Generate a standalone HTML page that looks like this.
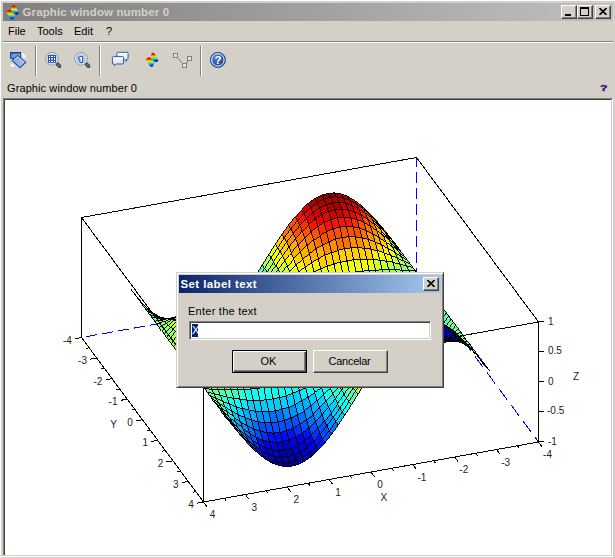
<!DOCTYPE html>
<html><head><meta charset="utf-8"><title>Graphic window number 0</title>
<style>
html,body{margin:0;padding:0}
body{width:615px;height:558px;background:#d4d0c8;position:relative;overflow:hidden;font-family:"Liberation Sans",sans-serif;font-size:11px;color:#000}
.abs{position:absolute}
.frame{position:absolute;left:0;top:0;width:615px;height:558px;box-sizing:border-box;border-left:1px solid #fff;border-top:1px solid #fff}
.frame2{display:none}
.title{position:absolute;left:3px;top:3px;width:610px;height:18px;background:linear-gradient(to right,#808080,#c0c0c0)}
.title .t{position:absolute;left:19.5px;top:2px;letter-spacing:0.13px;font-weight:bold;font-size:11.5px;color:#d4d0c8;white-space:nowrap;line-height:14px}
.wbtn{position:absolute;top:2px;width:16px;height:14px;box-sizing:border-box;background:#d4d0c8;border:1px solid;border-color:#fff #404040 #404040 #fff;box-shadow:inset -1px -1px 0 #808080,inset 1px 1px 0 #d4d0c8}
.menu{position:absolute;top:24px;font-size:11px;line-height:14px;white-space:nowrap}
.sep{position:absolute;left:3px;top:41px;width:610px;height:1px;background:#808080;border-bottom:1px solid #fff}
.vsep{position:absolute;top:46px;width:1px;height:30px;background:#808080;border-right:1px solid #fff}
.info{position:absolute;left:7px;top:81px;letter-spacing:0.1px;font-size:11px;line-height:14px;white-space:nowrap}
.canvas{position:absolute;left:3px;top:98px;width:610px;height:459px;box-sizing:border-box;border:1px solid;border-color:#808080 #fff #fff #808080;background:#fff}
.canvas .in{position:absolute;left:0;top:0;right:0;bottom:0;border:1px solid;border-color:#404040 #d4d0c8 #d4d0c8 #404040}
.plot{position:absolute;left:5px;top:100px}
.dlg{position:absolute;left:176px;top:272px;width:268px;height:116px;box-sizing:border-box;background:#d4d0c8;border:1px solid;border-color:#d4d0c8 #404040 #404040 #d4d0c8;box-shadow:inset 1px 1px 0 #fff,inset -1px -1px 0 #808080}
.dtitle{position:absolute;left:2px;top:2px;width:262px;height:18px;background:linear-gradient(to right,#0a246a,#a6caf0)}
.dtitle .t{position:absolute;left:1.5px;top:2px;letter-spacing:0.4px;font-weight:bold;font-size:11.5px;color:#fff;white-space:nowrap;line-height:14px}
.field{position:absolute;left:12px;top:48px;width:242px;height:19px;box-sizing:border-box;background:#fff;border:1px solid;border-color:#808080 #fff #fff #808080;box-shadow:inset 1px 1px 0 #404040,inset -1px -1px 0 #d4d0c8}
.sel{position:absolute;left:2px;top:2px;width:6px;height:13px;background:#0a246a;color:#fff;font-size:11px;line-height:13px;text-align:center}
.btn{position:absolute;top:77px;width:75px;height:23px;box-sizing:border-box;background:#d4d0c8;border:1px solid;border-color:#fff #404040 #404040 #fff;box-shadow:inset -1px -1px 0 #808080;text-align:center;font-size:11px;line-height:21px}
.btn.def{border:1px solid #000;box-shadow:inset 1px 1px 0 #fff,inset -1px -1px 0 #404040,inset -2px -2px 0 #808080}
</style></head><body>
<div class="frame"></div><div class="frame2"></div>
<div class="title">
<svg class="abs" style="left:2.9px;top:1.9px" width="14" height="16" viewBox="0 0 14 16"><use href="#surficon"/></svg>
<div class="t">Graphic window number 0</div>
<div class="wbtn" style="left:558px"><div class="abs" style="left:3px;top:8px;width:6px;height:2px;background:#000"></div></div>
<div class="wbtn" style="left:574px"><div class="abs" style="left:2px;top:1px;width:9px;height:9px;box-sizing:border-box;border:1px solid #000;border-top-width:2px"></div></div>
<div class="wbtn" style="left:592px"><svg class="abs" style="left:3px;top:2px" width="8" height="7" viewBox="0 0 8 7"><path d="M0.5 0 L7.5 7 M7.5 0 L0.5 7" stroke="#000" stroke-width="1.6"/></svg></div>
</div>
<div class="menu" style="left:8px">File</div>
<div class="menu" style="left:37px">Tools</div>
<div class="menu" style="left:74px">Edit</div>
<div class="menu" style="left:106px">?</div>
<div class="sep"></div>
<div class="vsep" style="left:35px"></div>
<div class="vsep" style="left:99px"></div>
<div class="vsep" style="left:200px"></div>

<svg class="abs" style="left:0;top:44px" width="240" height="34" viewBox="0 44 240 34">
<defs>
<linearGradient id="bl" x1="0" y1="0" x2="1" y2="0.6"><stop offset="0" stop-color="#4a78c4"/><stop offset="1" stop-color="#a4bce6"/></linearGradient>
<linearGradient id="bl2" x1="0" y1="0" x2="1" y2="1"><stop offset="0" stop-color="#7c9cd8"/><stop offset="1" stop-color="#b4c8ec"/></linearGradient>
<radialGradient id="lens" cx="0.5" cy="0.45" r="0.55"><stop offset="0" stop-color="#c4d8f4"/><stop offset="0.8" stop-color="#a4c4ee"/><stop offset="1" stop-color="#dce8f8"/></radialGradient>
<radialGradient id="hb" cx="0.35" cy="0.3" r="0.8"><stop offset="0" stop-color="#5080cc"/><stop offset="1" stop-color="#123a88"/></radialGradient>
<linearGradient id="bub" x1="0" y1="0" x2="0" y2="1"><stop offset="0" stop-color="#ffffff"/><stop offset="1" stop-color="#d0d4dc"/></linearGradient>
<linearGradient id="jetv" x1="0" y1="0" x2="0" y2="1"><stop offset="0" stop-color="#a00000"/><stop offset="0.15" stop-color="#e81000"/><stop offset="0.32" stop-color="#ff9800"/><stop offset="0.45" stop-color="#d8f020"/><stop offset="0.58" stop-color="#40f0a0"/><stop offset="0.72" stop-color="#00a8f0"/><stop offset="0.88" stop-color="#0030e0"/><stop offset="1" stop-color="#0000a0"/></linearGradient>
<g id="surficon"><path d="M0 6.7 L2.2 5.2 Q4 3.9 5.6 5.6 L6.8 7.2 L9 10.4 L7.7 13.4 Q6.2 15.3 4.4 13.6 L3 11.4 Z" fill="url(#jetv)"/><path d="M4.7 4.8 L5.9 1.4 Q7.4 -0.7 9.2 1.2 L10.5 3 L13 7.8 L11.6 8.9 Q10 10 8.4 9 L6.9 7.3 Z" fill="url(#jetv)"/><path d="M8.6 8.7 L10.2 7.4 L13 7.8 L11.4 9.2 Q10 10 8.6 8.7Z" fill="#0818b0"/><rect x="8.3" y="8.4" width="1.3" height="1.2" fill="#e08020"/></g>
</defs>
<!-- rotate icon -->
<rect x="10.6" y="52.7" width="9.9" height="5.6" fill="url(#bl)" stroke="#1048a0" stroke-width="1.1"/>
<rect x="10.1" y="52" width="10.9" height="1.4" fill="#1048a0"/>
<path d="M21.8 54.2 q2.4 -0.2 2.4 2.2 m-1.5 -0.7 l1.5 1.7 l1.4 -1.8" fill="none" stroke="#fff" stroke-width="1.3"/>
<path d="M16.4 67 q-3.6 0.4 -4.2 -2 m-1.5 1.2 l1.5 -2 l1.7 1.4" fill="none" stroke="#fff" stroke-width="1.3"/>
<path d="M13 67.3 h3.5" stroke="#a8bce0" stroke-width="1"/>
<path d="M17.6 55.3 L25.8 62.4 L20 67.7 L12.2 60.6 Z" fill="url(#bl2)" stroke="#1048a0" stroke-width="1.1" stroke-linejoin="round"/>
<path d="M17.6 56.6 L24.3 62.4" fill="none" stroke="#e8f0fc" stroke-width="0.8"/>
<path d="M17.6 56.6 L13.6 60.5" fill="none" stroke="#e8f0fc" stroke-width="0.8"/>
<!-- zoom grid -->
<g id="mag">
<path d="M57.6 64.2 L59.5 66.1" stroke="#3c4044" stroke-width="3.7" stroke-linecap="round"/>
<path d="M58.2 64.8 L59.3 65.9" stroke="#7c8084" stroke-width="1.5" stroke-linecap="round"/>
<circle cx="52" cy="58.75" r="6.3" fill="url(#lens)" stroke="#8c9094" stroke-width="1"/><circle cx="52" cy="58.75" r="5.4" fill="none" stroke="#e8f0fa" stroke-width="0.8"/>
</g>
<rect x="48" y="55" width="8" height="7.8" fill="#2c549c"/>
<g fill="#fff"><rect x="49" y="56" width="1" height="1"/><rect x="51" y="56" width="2" height="1"/><rect x="54" y="56" width="1" height="1"/><rect x="49" y="58" width="1" height="2"/><rect x="51" y="58" width="2" height="2" fill="#a4c4ee"/><rect x="54" y="58" width="1" height="2"/><rect x="49" y="61" width="1" height="1"/><rect x="51" y="61" width="2" height="1"/><rect x="54" y="61" width="1" height="1"/></g>
<!-- zoom 1 -->
<use href="#mag" x="29" y="0"/>
<path d="M78.7 57 L80 56.6 L82.6 56.6 L82.6 62.4 L79.9 62.4 L79.9 59 L78.7 59 Z" fill="#fff" stroke="#204c98" stroke-width="1" stroke-linejoin="round"/>
<!-- bubbles -->
<path d="M117.9 52.3 h9.2 q1 0 1 1 v5.2 q0 1 -1 1 h-0.5 l-0.3 1.8 l-1.8 -1.8 h-6.6 q-1 0 -1 -1 v-5.2 q0 -1 1 -1z" fill="url(#bub)" stroke="#2c5cb0" stroke-width="1"/>
<path d="M113.4 56.6 h9.2 q1 0 1 1 v5.4 q0 1 -1 1 h-6.4 l-1.9 1.7 l-0.3 -1.7 h-0.6 q-1 0 -1 -1 v-5.4 q0 -1 1 -1z" fill="url(#bub)" stroke="#2c5cb0" stroke-width="1"/>
<!-- surface icon -->
<use href="#surficon" x="145.5" y="52.5"/>
<!-- polyline -->
<g fill="#e4e2dc" stroke="#808080" stroke-width="1"><path d="M177.5 57.5 L182.5 63.5 M186.5 63.5 L188 60.5" fill="none"/><rect x="173.5" y="53.5" width="4" height="4"/><rect x="182.5" y="63.5" width="4" height="4"/><rect x="187.5" y="56.5" width="4" height="4"/></g>
<!-- help -->
<circle cx="217.9" cy="59.9" r="7.6" fill="url(#hb)" stroke="#1c4a9c" stroke-width="0.8"/>
<circle cx="217.9" cy="59.9" r="6.2" fill="none" stroke="#fff" stroke-width="1"/>
<text x="217.9" y="64" text-anchor="middle" font-family="Liberation Sans, sans-serif" font-weight="bold" font-size="11.5px" fill="#fff">?</text>
</svg>

<div class="info">Graphic window number 0</div>
<div class="abs" style="left:599.5px;top:81.2px;font-size:9.5px;font-weight:bold;color:#3c1478;-webkit-text-stroke:0.4px #3c1478;line-height:14px;transform:scaleX(1.3);transform-origin:0 0">?</div>
<div class="canvas"><div class="in"></div></div><div class="abs" style="left:0;top:555px;width:5px;height:1px;background:#d4d0c8"></div><div class="abs" style="left:0;top:556px;width:5px;height:1px;background:#fff"></div>
<svg class="plot" width="606" height="455" viewBox="0 0 606 455"><g stroke="#0000ff" stroke-width="1" fill="none" shape-rendering="crispEdges"><line x1="411.5" y1="57.5" x2="411.5" y2="177.5" stroke-dasharray="11 5" stroke-dashoffset="2"/><line x1="411.5" y1="177.5" x2="76.5" y2="237.5" stroke-dasharray="11.18 5.08" stroke-dashoffset="1"/><line x1="411.5" y1="177.5" x2="533.5" y2="342.0" stroke-dasharray="13.7 6.23" stroke-dashoffset="1.25"/></g><g stroke="#000" stroke-width="1" fill="none" shape-rendering="crispEdges"><line x1="76.5" y1="117.5" x2="411.5" y2="57.5" /><line x1="411.5" y1="57.5" x2="533.5" y2="222.0" /><line x1="76.5" y1="117.5" x2="76.5" y2="237.5" /><line x1="533.5" y1="222.0" x2="533.5" y2="342.0" /><line x1="76.5" y1="237.5" x2="198.5" y2="402.0" /><line x1="198.5" y1="402.0" x2="533.5" y2="342.0" /></g><g stroke="#000" stroke-width="0.99" shape-rendering="crispEdges"><path fill="#00008f" d="M197.9 235.0L191.3 236.9L193.7 239.4L200.3 237.5z"/>
<path fill="#00008f" d="M191.3 236.9L184.7 237.4L187.1 239.9L193.7 239.4z"/>
<path fill="#0000af" d="M204.5 231.6L197.9 235.0L200.3 237.5L206.9 234.2z"/>
<path fill="#0000af" d="M184.7 237.4L178.2 236.4L180.6 238.9L187.1 239.9z"/>
<path fill="#0000af" d="M200.3 237.5L193.7 239.4L196.1 240.5L202.7 238.6z"/>
<path fill="#0000af" d="M211.0 226.9L204.5 231.6L206.9 234.2L213.4 229.4z"/>
<path fill="#0000af" d="M193.7 239.4L187.1 239.9L189.5 240.9L196.1 240.5z"/>
<path fill="#0000af" d="M206.9 234.2L200.3 237.5L202.7 238.6L209.3 235.3z"/>
<path fill="#0000af" d="M187.1 239.9L180.6 238.9L182.9 240.0L189.5 240.9z"/>
<path fill="#0000af" d="M178.2 236.4L171.6 233.9L174.0 236.5L180.6 238.9z"/>
<path fill="#0000cf" d="M213.4 229.4L206.9 234.2L209.3 235.3L215.8 230.7z"/>
<path fill="#0000cf" d="M217.6 220.8L211.0 226.9L213.4 229.4L220.0 223.4z"/>
<path fill="#0000af" d="M202.7 238.6L196.1 240.5L198.5 240.1L205.1 238.2z"/>
<path fill="#0000ef" d="M196.1 240.5L189.5 240.9L191.9 240.6L198.5 240.1z"/>
<path fill="#0000cf" d="M209.3 235.3L202.7 238.6L205.1 238.2L211.7 235.1z"/>
<path fill="#0000cf" d="M180.6 238.9L174.0 236.5L176.4 237.8L182.9 240.0z"/>
<path fill="#0000ef" d="M220.0 223.4L213.4 229.4L215.8 230.7L222.4 224.8z"/>
<path fill="#0000ef" d="M189.5 240.9L182.9 240.0L185.3 239.8L191.9 240.6z"/>
<path fill="#0000cf" d="M215.8 230.7L209.3 235.3L211.7 235.1L218.2 230.7z"/>
<path fill="#0000cf" d="M171.6 233.9L165.0 230.2L167.4 232.8L174.0 236.5z"/>
<path fill="#0010ff" d="M224.2 213.5L217.6 220.8L220.0 223.4L226.6 216.2z"/>
<path fill="#0000ef" d="M182.9 240.0L176.4 237.8L178.8 237.8L185.3 239.8z"/>
<path fill="#0000ef" d="M205.1 238.2L198.5 240.1L200.9 238.4L207.5 236.6z"/>
<path fill="#0000ef" d="M174.0 236.5L167.4 232.8L169.8 234.3L176.4 237.8z"/>
<path fill="#0000ef" d="M222.4 224.8L215.8 230.7L218.2 230.7L224.8 225.2z"/>
<path fill="#0000ef" d="M198.5 240.1L191.9 240.6L194.3 239.0L200.9 238.4z"/>
<path fill="#0000ef" d="M211.7 235.1L205.1 238.2L207.5 236.6L214.1 233.7z"/>
<path fill="#0010ff" d="M226.6 216.2L220.0 223.4L222.4 224.8L229.0 217.9z"/>
<path fill="#0000ef" d="M191.9 240.6L185.3 239.8L187.7 238.4L194.3 239.0z"/>
<path fill="#0000ef" d="M218.2 230.7L211.7 235.1L214.1 233.7L220.6 229.6z"/>
<path fill="#0010ff" d="M165.0 230.2L158.4 225.2L160.8 228.0L167.4 232.8z"/>
<path fill="#0000ef" d="M176.4 237.8L169.8 234.3L172.2 234.6L178.8 237.8z"/>
<path fill="#0050ff" d="M230.8 205.1L224.2 213.5L226.6 216.2L233.2 207.9z"/>
<path fill="#0000af" d="M372.6 266.7L366.0 268.6L368.4 274.0L375.0 272.1z"/>
<path fill="#00008f" d="M375.0 272.1L368.4 274.0L370.8 278.0L377.4 276.1z"/>
<path fill="#0030ff" d="M229.0 217.9L222.4 224.8L224.8 225.2L231.4 218.5z"/>
<path fill="#0000ef" d="M185.3 239.8L178.8 237.8L181.2 236.6L187.7 238.4z"/>
<path fill="#0000af" d="M366.0 268.6L359.4 269.0L361.8 274.4L368.4 274.0z"/>
<path fill="#00008f" d="M368.4 274.0L361.8 274.4L364.2 278.4L370.8 278.0z"/>
<path fill="#0010ff" d="M224.8 225.2L218.2 230.7L220.6 229.6L227.2 224.4z"/>
<path fill="#0000af" d="M379.1 263.4L372.6 266.7L375.0 272.1L381.5 268.7z"/>
<path fill="#0000af" d="M381.5 268.7L375.0 272.1L377.4 276.1L383.9 272.7z"/>
<path fill="#0000af" d="M370.2 259.9L363.6 261.7L366.0 268.6L372.6 266.7z"/>
<path fill="#0000ef" d="M167.4 232.8L160.8 228.0L163.2 229.6L169.8 234.3z"/>
<path fill="#00008f" d="M377.4 276.1L370.8 278.0L373.2 280.5L379.8 278.6z"/>
<path fill="#0000af" d="M363.6 261.7L357.0 262.3L359.4 269.0L366.0 268.6z"/>
<path fill="#0000cf" d="M376.7 256.8L370.2 259.9L372.6 266.7L379.1 263.4z"/>
<path fill="#0000ef" d="M207.5 236.6L200.9 238.4L203.3 235.5L209.9 233.8z"/>
<path fill="#00008f" d="M370.8 278.0L364.2 278.4L366.6 280.9L373.2 280.5z"/>
<path fill="#0050ff" d="M233.2 207.9L226.6 216.2L229.0 217.9L235.6 209.9z"/>
<path fill="#0000af" d="M383.9 272.7L377.4 276.1L379.8 278.6L386.3 275.2z"/>
<path fill="#0000af" d="M359.4 269.0L352.8 268.1L355.2 273.5L361.8 274.4z"/>
<path fill="#0000af" d="M361.8 274.4L355.2 273.5L357.6 277.4L364.2 278.4z"/>
<path fill="#0000ef" d="M214.1 233.7L207.5 236.6L209.9 233.8L216.4 231.1z"/>
<path fill="#0000ef" d="M200.9 238.4L194.3 239.0L196.7 236.2L203.3 235.5z"/>
<path fill="#0000cf" d="M385.7 258.8L379.1 263.4L381.5 268.7L388.1 264.0z"/>
<path fill="#0000af" d="M388.1 264.0L381.5 268.7L383.9 272.7L390.5 267.9z"/>
<path fill="#0000cf" d="M357.0 262.3L350.4 261.5L352.8 268.1L359.4 269.0z"/>
<path fill="#0000cf" d="M367.8 251.8L361.2 253.6L363.6 261.7L370.2 259.9z"/>
<path fill="#0000af" d="M364.2 278.4L357.6 277.4L360.0 279.9L366.6 280.9z"/>
<path fill="#0000cf" d="M383.3 252.4L376.7 256.8L379.1 263.4L385.7 258.8z"/>
<path fill="#0000ef" d="M220.6 229.6L214.1 233.7L216.4 231.1L223.0 227.3z"/>
<path fill="#0000ef" d="M194.3 239.0L187.7 238.4L190.1 235.8L196.7 236.2z"/>
<path fill="#0000cf" d="M361.2 253.6L354.6 254.2L357.0 262.3L363.6 261.7z"/>
<path fill="#0000af" d="M379.8 278.6L373.2 280.5L375.6 281.5L382.1 279.6z"/>
<path fill="#0000ef" d="M374.4 248.9L367.8 251.8L370.2 259.9L376.7 256.8z"/>
<path fill="#0000ef" d="M178.8 237.8L172.2 234.6L174.6 233.8L181.2 236.6z"/>
<path fill="#0000af" d="M390.5 267.9L383.9 272.7L386.3 275.2L392.9 270.5z"/>
<path fill="#0050ff" d="M231.4 218.5L224.8 225.2L227.2 224.4L233.8 218.3z"/>
<path fill="#0000af" d="M373.2 280.5L366.6 280.9L369.0 282.0L375.6 281.5z"/>
<path fill="#0000ef" d="M169.8 234.3L163.2 229.6L165.6 230.3L172.2 234.6z"/>
<path fill="#0000af" d="M386.3 275.2L379.8 278.6L382.1 279.6L388.7 276.3z"/>
<path fill="#0050ff" d="M235.6 209.9L229.0 217.9L231.4 218.5L238.0 211.0z"/>
<path fill="#0000cf" d="M352.8 268.1L346.3 265.9L348.6 271.1L355.2 273.5z"/>
<path fill="#0050ff" d="M158.4 225.2L151.8 219.3L154.2 222.1L160.8 228.0z"/>
<path fill="#0000af" d="M355.2 273.5L348.6 271.1L351.0 275.0L357.6 277.4z"/>
<path fill="#0000ef" d="M354.6 254.2L348.0 253.6L350.4 261.5L357.0 262.3z"/>
<path fill="#0000ef" d="M380.9 244.8L374.4 248.9L376.7 256.8L383.3 252.4z"/>
<path fill="#0000ef" d="M392.3 253.0L385.7 258.8L388.1 264.0L394.7 258.0z"/>
<path fill="#0070ff" d="M237.4 195.9L230.8 205.1L233.2 207.9L239.8 198.8z"/>
<path fill="#0000cf" d="M394.7 258.0L388.1 264.0L390.5 267.9L397.1 261.8z"/>
<path fill="#0000cf" d="M350.4 261.5L343.9 259.4L346.3 265.9L352.8 268.1z"/>
<path fill="#0000ef" d="M227.2 224.4L220.6 229.6L223.0 227.3L229.6 222.7z"/>
<path fill="#0000af" d="M366.6 280.9L360.0 279.9L362.4 281.1L369.0 282.0z"/>
<path fill="#0000ef" d="M187.7 238.4L181.2 236.6L183.6 234.4L190.1 235.8z"/>
<path fill="#0000ef" d="M389.9 246.8L383.3 252.4L385.7 258.8L392.3 253.0z"/>
<path fill="#0000af" d="M357.6 277.4L351.0 275.0L353.4 277.5L360.0 279.9z"/>
<path fill="#0000cf" d="M392.9 270.5L386.3 275.2L388.7 276.3L395.3 271.7z"/>
<path fill="#0010ff" d="M365.4 242.5L358.8 244.2L361.2 253.6L367.8 251.8z"/>
<path fill="#0000ef" d="M160.8 228.0L154.2 222.1L156.6 224.0L163.2 229.6z"/>
<path fill="#0010ff" d="M372.0 239.8L365.4 242.5L367.8 251.8L374.4 248.9z"/>
<path fill="#0000cf" d="M397.1 261.8L390.5 267.9L392.9 270.5L399.5 264.4z"/>
<path fill="#0010ff" d="M358.8 244.2L352.2 244.9L354.6 254.2L361.2 253.6z"/>
<path fill="#0000af" d="M382.1 279.6L375.6 281.5L378.0 281.1L384.5 279.3z"/>
<path fill="#008fff" d="M239.8 198.8L233.2 207.9L235.6 209.9L242.1 201.1z"/>
<path fill="#0000ef" d="M348.0 253.6L341.5 251.8L343.9 259.4L350.4 261.5z"/>
<path fill="#0000ef" d="M375.6 281.5L369.0 282.0L371.4 281.6L378.0 281.1z"/>
<path fill="#0010ff" d="M387.5 239.6L380.9 244.8L383.3 252.4L389.9 246.8z"/>
<path fill="#0000cf" d="M388.7 276.3L382.1 279.6L384.5 279.3L391.1 276.1z"/>
<path fill="#0000ef" d="M172.2 234.6L165.6 230.3L168.0 230.1L174.6 233.8z"/>
<path fill="#0070ff" d="M238.0 211.0L231.4 218.5L233.8 218.3L240.4 211.3z"/>
<path fill="#0030ff" d="M378.5 236.1L372.0 239.8L374.4 248.9L380.9 244.8z"/>
<path fill="#0010ff" d="M352.2 244.9L345.6 244.5L348.0 253.6L354.6 254.2z"/>
<path fill="#0000ef" d="M209.9 233.8L203.3 235.5L205.7 231.6L212.3 230.0z"/>
<path fill="#0000cf" d="M360.0 279.9L353.4 277.5L355.8 278.8L362.4 281.1z"/>
<path fill="#0000ef" d="M346.3 265.9L339.7 262.4L342.1 267.4L348.6 271.1z"/>
<path fill="#0070ff" d="M233.8 218.3L227.2 224.4L229.6 222.7L236.2 217.2z"/>
<path fill="#0000ef" d="M216.4 231.1L209.9 233.8L212.3 230.0L218.8 227.5z"/>
<path fill="#0000ef" d="M203.3 235.5L196.7 236.2L199.1 232.3L205.7 231.6z"/>
<path fill="#0000cf" d="M348.6 271.1L342.1 267.4L344.5 271.2L351.0 275.0z"/>
<path fill="#0000ef" d="M181.2 236.6L174.6 233.8L177.0 232.1L183.6 234.4z"/>
<path fill="#0000ef" d="M399.5 264.4L392.9 270.5L395.3 271.7L401.9 265.9z"/>
<path fill="#0010ff" d="M398.9 246.0L392.3 253.0L394.7 258.0L401.3 250.8z"/>
<path fill="#0000ef" d="M343.9 259.4L337.3 256.2L339.7 262.4L346.3 265.9z"/>
<path fill="#0000ef" d="M369.0 282.0L362.4 281.1L364.8 280.9L371.4 281.6z"/>
<path fill="#0000ef" d="M163.2 229.6L156.6 224.0L159.0 225.1L165.6 230.3z"/>
<path fill="#0010ff" d="M401.3 250.8L394.7 258.0L397.1 261.8L403.7 254.5z"/>
<path fill="#0000cf" d="M395.3 271.7L388.7 276.3L391.1 276.1L397.7 271.8z"/>
<path fill="#0000ef" d="M223.0 227.3L216.4 231.1L218.8 227.5L225.4 224.2z"/>
<path fill="#0030ff" d="M396.5 240.2L389.9 246.8L392.3 253.0L398.9 246.0z"/>
<path fill="#008fff" d="M242.1 201.1L235.6 209.9L238.0 211.0L244.5 202.6z"/>
<path fill="#0000ef" d="M196.7 236.2L190.1 235.8L192.5 232.2L199.1 232.3z"/>
<path fill="#0000cf" d="M351.0 275.0L344.5 271.2L346.9 273.9L353.4 277.5z"/>
<path fill="#0050ff" d="M385.1 231.4L378.5 236.1L380.9 244.8L387.5 239.6z"/>
<path fill="#0030ff" d="M345.6 244.5L339.1 243.2L341.5 251.8L348.0 253.6z"/>
<path fill="#0050ff" d="M363.0 232.2L356.4 233.9L358.8 244.2L365.4 242.5z"/>
<path fill="#0050ff" d="M369.6 229.8L363.0 232.2L365.4 242.5L372.0 239.8z"/>
<path fill="#0010ff" d="M403.7 254.5L397.1 261.8L399.5 264.4L406.1 257.2z"/>
<path fill="#0050ff" d="M356.4 233.9L349.8 234.6L352.2 244.9L358.8 244.2z"/>
<path fill="#0010ff" d="M341.5 251.8L334.9 249.0L337.3 256.2L343.9 259.4z"/>
<path fill="#0050ff" d="M394.1 233.5L387.5 239.6L389.9 246.8L396.5 240.2z"/>
<path fill="#0070ff" d="M151.8 219.3L145.3 212.4L147.7 215.3L154.2 222.1z"/>
<path fill="#0000ef" d="M229.6 222.7L223.0 227.3L225.4 224.2L232.0 220.1z"/>
<path fill="#00cfff" d="M243.9 186.0L237.4 195.9L239.8 198.8L246.3 189.0z"/>
<path fill="#0050ff" d="M376.1 226.5L369.6 229.8L372.0 239.8L378.5 236.1z"/>
<path fill="#0000ef" d="M362.4 281.1L355.8 278.8L358.2 278.8L364.8 280.9z"/>
<path fill="#0000ef" d="M190.1 235.8L183.6 234.4L186.0 231.3L192.5 232.2z"/>
<path fill="#0000ef" d="M384.5 279.3L378.0 281.1L380.4 279.4L386.9 277.7z"/>
<path fill="#0050ff" d="M349.8 234.6L343.2 234.5L345.6 244.5L352.2 244.9z"/>
<path fill="#008fff" d="M240.4 211.3L233.8 218.3L236.2 217.2L242.8 211.0z"/>
<path fill="#0000ef" d="M353.4 277.5L346.9 273.9L349.3 275.3L355.8 278.8z"/>
<path fill="#0000ef" d="M401.9 265.9L395.3 271.7L397.7 271.8L404.3 266.2z"/>
<path fill="#0000ef" d="M378.0 281.1L371.4 281.6L373.8 280.0L380.4 279.4z"/>
<path fill="#0000ef" d="M391.1 276.1L384.5 279.3L386.9 277.7L393.5 274.7z"/>
<path fill="#0000ef" d="M174.6 233.8L168.0 230.1L170.4 229.0L177.0 232.1z"/>
<path fill="#00afff" d="M244.5 202.6L238.0 211.0L240.4 211.3L246.9 203.6z"/>
<path fill="#0010ff" d="M406.1 257.2L399.5 264.4L401.9 265.9L408.5 258.9z"/>
<path fill="#0000ef" d="M165.6 230.3L159.0 225.1L161.4 225.5L168.0 230.1z"/>
<path fill="#0000ef" d="M154.2 222.1L147.7 215.3L150.1 217.5L156.6 224.0z"/>
<path fill="#0070ff" d="M391.7 225.9L385.1 231.4L387.5 239.6L394.1 233.5z"/>
<path fill="#0010ff" d="M339.7 262.4L333.1 257.7L335.5 262.5L342.1 267.4z"/>
<path fill="#00cfff" d="M246.3 189.0L239.8 198.8L242.1 201.1L248.7 191.6z"/>
<path fill="#0050ff" d="M339.1 243.2L332.5 240.9L334.9 249.0L341.5 251.8z"/>
<path fill="#0070ff" d="M382.7 222.4L376.1 226.5L378.5 236.1L385.1 231.4z"/>
<path fill="#0010ff" d="M342.1 267.4L335.5 262.5L337.9 266.3L344.5 271.2z"/>
<path fill="#0030ff" d="M337.3 256.2L330.7 252.0L333.1 257.7L339.7 262.4z"/>
<path fill="#0000ef" d="M371.4 281.6L364.8 280.9L367.2 279.4L373.8 280.0z"/>
<path fill="#0000ef" d="M236.2 217.2L229.6 222.7L232.0 220.1L238.6 215.4z"/>
<path fill="#0050ff" d="M405.5 238.0L398.9 246.0L401.3 250.8L407.8 242.5z"/>
<path fill="#0000ef" d="M397.7 271.8L391.1 276.1L393.5 274.7L400.1 270.6z"/>
<path fill="#0050ff" d="M343.2 234.5L336.7 233.5L339.1 243.2L345.6 244.5z"/>
<path fill="#0050ff" d="M403.1 232.6L396.5 240.2L398.9 246.0L405.5 238.0z"/>
<path fill="#0050ff" d="M407.8 242.5L401.3 250.8L403.7 254.5L410.2 246.2z"/>
<path fill="#0000ef" d="M183.6 234.4L177.0 232.1L179.4 229.6L186.0 231.3z"/>
<path fill="#0010ff" d="M344.5 271.2L337.9 266.3L340.3 269.0L346.9 273.9z"/>
<path fill="#0050ff" d="M334.9 249.0L328.3 245.3L330.7 252.0L337.3 256.2z"/>
<path fill="#0070ff" d="M400.7 226.5L394.1 233.5L396.5 240.2L403.1 232.6z"/>
<path fill="#0070ff" d="M360.6 221.1L354.0 222.6L356.4 233.9L363.0 232.2z"/>
<path fill="#008fff" d="M367.2 218.9L360.6 221.1L363.0 232.2L369.6 229.8z"/>
<path fill="#0000ef" d="M355.8 278.8L349.3 275.3L351.7 275.6L358.2 278.8z"/>
<path fill="#00cfff" d="M248.7 191.6L242.1 201.1L244.5 202.6L251.1 193.7z"/>
<path fill="#0000ef" d="M212.3 230.0L205.7 231.6L208.1 226.8L214.7 225.3z"/>
<path fill="#0000ef" d="M156.6 224.0L150.1 217.5L152.5 219.1L159.0 225.1z"/>
<path fill="#0050ff" d="M410.2 246.2L403.7 254.5L406.1 257.2L412.6 249.0z"/>
<path fill="#0070ff" d="M354.0 222.6L347.4 223.4L349.8 234.6L356.4 233.9z"/>
<path fill="#0000ef" d="M218.8 227.5L212.3 230.0L214.7 225.3L221.2 223.1z"/>
<path fill="#0030ff" d="M408.5 258.9L401.9 265.9L404.3 266.2L410.9 259.6z"/>
<path fill="#008fff" d="M389.3 217.6L382.7 222.4L385.1 231.4L391.7 225.9z"/>
<path fill="#0000ef" d="M205.7 231.6L199.1 232.3L201.5 227.6L208.1 226.8z"/>
<path fill="#008fff" d="M373.7 216.1L367.2 218.9L369.6 229.8L376.1 226.5z"/>
<path fill="#0000ef" d="M364.8 280.9L358.2 278.8L360.6 277.7L367.2 279.4z"/>
<path fill="#00afff" d="M246.9 203.6L240.4 211.3L242.8 211.0L249.3 204.1z"/>
<path fill="#0010ff" d="M404.3 266.2L397.7 271.8L400.1 270.6L406.7 265.4z"/>
<path fill="#0000ef" d="M225.4 224.2L218.8 227.5L221.2 223.1L227.8 220.3z"/>
<path fill="#0070ff" d="M336.7 233.5L330.1 231.8L332.5 240.9L339.1 243.2z"/>
<path fill="#008fff" d="M347.4 223.4L340.9 223.6L343.2 234.5L349.8 234.6z"/>
<path fill="#008fff" d="M398.3 219.7L391.7 225.9L394.1 233.5L400.7 226.5z"/>
<path fill="#00afff" d="M242.8 211.0L236.2 217.2L238.6 215.4L245.2 210.0z"/>
<path fill="#0000ef" d="M346.9 273.9L340.3 269.0L342.7 270.7L349.3 275.3z"/>
<path fill="#0000ef" d="M199.1 232.3L192.5 232.2L194.9 227.8L201.5 227.6z"/>
<path fill="#0000ef" d="M168.0 230.1L161.4 225.5L163.8 225.1L170.4 229.0z"/>
<path fill="#0070ff" d="M332.5 240.9L325.9 237.7L328.3 245.3L334.9 249.0z"/>
<path fill="#00afff" d="M380.3 212.7L373.7 216.1L376.1 226.5L382.7 222.4z"/>
<path fill="#0000ef" d="M386.9 277.7L380.4 279.4L382.8 276.5L389.3 274.8z"/>
<path fill="#0050ff" d="M412.6 249.0L406.1 257.2L408.5 258.9L415.0 250.9z"/>
<path fill="#0000ef" d="M232.0 220.1L225.4 224.2L227.8 220.3L234.4 216.9z"/>
<path fill="#0000ef" d="M177.0 232.1L170.4 229.0L172.8 227.1L179.4 229.6z"/>
<path fill="#0000ef" d="M393.5 274.7L386.9 277.7L389.3 274.8L395.9 272.1z"/>
<path fill="#0000ef" d="M380.4 279.4L373.8 280.0L376.2 277.2L382.8 276.5z"/>
<path fill="#00cfff" d="M251.1 193.7L244.5 202.6L246.9 203.6L253.5 195.4z"/>
<path fill="#10ffef" d="M250.5 175.7L243.9 186.0L246.3 189.0L252.9 178.8z"/>
<path fill="#00cfff" d="M145.3 212.4L138.7 204.9L141.1 207.9L147.7 215.3z"/>
<path fill="#008fff" d="M340.9 223.6L334.3 223.2L336.7 233.5L343.2 234.5z"/>
<path fill="#0000ef" d="M159.0 225.1L152.5 219.1L154.9 220.1L161.4 225.5z"/>
<path fill="#0000ef" d="M192.5 232.2L186.0 231.3L188.3 227.3L194.9 227.8z"/>
<path fill="#0050ff" d="M333.1 257.7L326.5 252.1L328.9 256.6L335.5 262.5z"/>
<path fill="#00afff" d="M395.9 212.3L389.3 217.6L391.7 225.9L398.3 219.7z"/>
<path fill="#0050ff" d="M330.7 252.0L324.1 246.8L326.5 252.1L333.1 257.7z"/>
<path fill="#0000ef" d="M400.1 270.6L393.5 274.7L395.9 272.1L402.5 268.4z"/>
<path fill="#008fff" d="M409.6 224.3L403.1 232.6L405.5 238.0L412.0 229.2z"/>
<path fill="#0000ef" d="M373.8 280.0L367.2 279.4L369.6 276.8L376.2 277.2z"/>
<path fill="#0050ff" d="M335.5 262.5L328.9 256.6L331.3 260.3L337.9 266.3z"/>
<path fill="#00afff" d="M386.9 208.7L380.3 212.7L382.7 222.4L389.3 217.6z"/>
<path fill="#008fff" d="M412.0 229.2L405.5 238.0L407.8 242.5L414.4 233.4z"/>
<path fill="#0000ef" d="M358.2 278.8L351.7 275.6L354.0 274.9L360.6 277.7z"/>
<path fill="#0000ef" d="M238.6 215.4L232.0 220.1L234.4 216.9L241.0 212.9z"/>
<path fill="#0050ff" d="M410.9 259.6L404.3 266.2L406.7 265.4L413.2 259.3z"/>
<path fill="#10ffef" d="M252.9 178.8L246.3 189.0L248.7 191.6L255.3 181.7z"/>
<path fill="#00afff" d="M407.2 218.8L400.7 226.5L403.1 232.6L409.6 224.3z"/>
<path fill="#0000ef" d="M349.3 275.3L342.7 270.7L345.1 271.4L351.7 275.6z"/>
<path fill="#0070ff" d="M414.4 233.4L407.8 242.5L410.2 246.2L416.8 237.0z"/>
<path fill="#008fff" d="M330.1 231.8L323.5 229.4L325.9 237.7L332.5 240.9z"/>
<path fill="#0000ef" d="M147.7 215.3L141.1 207.9L143.5 210.5L150.1 217.5z"/>
<path fill="#0070ff" d="M328.3 245.3L321.7 240.6L324.1 246.8L330.7 252.0z"/>
<path fill="#00cfff" d="M249.3 204.1L242.8 211.0L245.2 210.0L251.7 204.1z"/>
<path fill="#0050ff" d="M415.0 250.9L408.5 258.9L410.9 259.6L417.4 252.0z"/>
<path fill="#0050ff" d="M337.9 266.3L331.3 260.3L333.7 263.1L340.3 269.0z"/>
<path fill="#00afff" d="M334.3 223.2L327.7 222.1L330.1 231.8L336.7 233.5z"/>
<path fill="#00cfff" d="M364.8 207.4L358.2 209.3L360.6 221.1L367.2 218.9z"/>
<path fill="#00cfff" d="M358.2 209.3L351.6 210.7L354.0 222.6L360.6 221.1z"/>
<path fill="#00afff" d="M404.8 212.8L398.3 219.7L400.7 226.5L407.2 218.8z"/>
<path fill="#00efff" d="M253.5 195.4L246.9 203.6L249.3 204.1L255.9 196.8z"/>
<path fill="#0000ef" d="M186.0 231.3L179.4 229.6L181.8 226.3L188.3 227.3z"/>
<path fill="#00cfff" d="M371.3 205.1L364.8 207.4L367.2 218.9L373.7 216.1z"/>
<path fill="#00cfff" d="M351.6 210.7L345.0 211.6L347.4 223.4L354.0 222.6z"/>
<path fill="#0070ff" d="M416.8 237.0L410.2 246.2L412.6 249.0L419.2 239.9z"/>
<path fill="#0000ef" d="M406.7 265.4L400.1 270.6L402.5 268.4L409.1 263.7z"/>
<path fill="#0000ef" d="M367.2 279.4L360.6 277.7L363.0 275.5L369.6 276.8z"/>
<path fill="#10ffef" d="M255.3 181.7L248.7 191.6L251.1 193.7L257.7 184.4z"/>
<path fill="#00cfff" d="M393.5 204.3L386.9 208.7L389.3 217.6L395.9 212.3z"/>
<path fill="#008fff" d="M325.9 237.7L319.3 233.8L321.7 240.6L328.3 245.3z"/>
<path fill="#0000ef" d="M170.4 229.0L163.8 225.1L166.2 224.1L172.8 227.1z"/>
<path fill="#00cfff" d="M377.9 202.4L371.3 205.1L373.7 216.1L380.3 212.7z"/>
<path fill="#0000ef" d="M245.2 210.0L238.6 215.4L241.0 212.9L247.5 208.5z"/>
<path fill="#00cfff" d="M345.0 211.6L338.5 212.1L340.9 223.6L347.4 223.4z"/>
<path fill="#0000ef" d="M161.4 225.5L154.9 220.1L157.2 220.6L163.8 225.1z"/>
<path fill="#0000ef" d="M150.1 217.5L143.5 210.5L145.9 212.6L152.5 219.1z"/>
<path fill="#00cfff" d="M402.4 206.4L395.9 212.3L398.3 219.7L404.8 212.8z"/>
<path fill="#0000ef" d="M340.3 269.0L333.7 263.1L336.1 265.0L342.7 270.7z"/>
<path fill="#008fff" d="M419.2 239.9L412.6 249.0L415.0 250.9L421.6 242.1z"/>
<path fill="#00efff" d="M384.5 199.3L377.9 202.4L380.3 212.7L386.9 208.7z"/>
<path fill="#00cfff" d="M338.5 212.1L331.9 212.2L334.3 223.2L340.9 223.6z"/>
<path fill="#00afff" d="M327.7 222.1L321.1 220.5L323.5 229.4L330.1 231.8z"/>
<path fill="#0000ef" d="M221.2 223.1L214.7 225.3L217.1 219.9L223.6 218.0z"/>
<path fill="#0000ef" d="M214.7 225.3L208.1 226.8L210.5 221.3L217.1 219.9z"/>
<path fill="#10ffef" d="M257.7 184.4L251.1 193.7L253.5 195.4L260.1 186.8z"/>
<path fill="#0000ef" d="M179.4 229.6L172.8 227.1L175.2 224.7L181.8 226.3z"/>
<path fill="#afff50" d="M388.6 141.6L382.1 133.4L384.5 136.7L391.0 144.8z"/>
<path fill="#0000ef" d="M351.7 275.6L345.1 271.4L347.5 271.1L354.0 274.9z"/>
<path fill="#0070ff" d="M417.4 252.0L410.9 259.6L413.2 259.3L419.8 252.4z"/>
<path fill="#0000ef" d="M227.8 220.3L221.2 223.1L223.6 218.0L230.2 215.8z"/>
<path fill="#00afff" d="M323.5 229.4L316.9 226.4L319.3 233.8L325.9 237.7z"/>
<path fill="#0000ef" d="M208.1 226.8L201.5 227.6L203.9 222.3L210.5 221.3z"/>
<path fill="#0000ef" d="M389.3 274.8L382.8 276.5L385.1 272.6L391.7 271.0z"/>
<path fill="#10ffef" d="M255.9 196.8L249.3 204.1L251.7 204.1L258.3 197.8z"/>
<path fill="#0070ff" d="M413.2 259.3L406.7 265.4L409.1 263.7L415.6 258.2z"/>
<path fill="#0000ef" d="M395.9 272.1L389.3 274.8L391.7 271.0L398.3 268.5z"/>
<path fill="#00efff" d="M400.1 199.5L393.5 204.3L395.9 212.3L402.4 206.4z"/>
<path fill="#0000ef" d="M382.8 276.5L376.2 277.2L378.6 273.4L385.1 272.6z"/>
<path fill="#0000ef" d="M360.6 277.7L354.0 274.9L356.4 273.2L363.0 275.5z"/>
<path fill="#00efff" d="M251.7 204.1L245.2 210.0L247.5 208.5L254.1 203.7z"/>
<path fill="#0000ef" d="M152.5 219.1L145.9 212.6L148.3 214.3L154.9 220.1z"/>
<path fill="#0000ef" d="M234.4 216.9L227.8 220.3L230.2 215.8L236.8 213.1z"/>
<path fill="#10ffef" d="M391.1 196.0L384.5 199.3L386.9 208.7L393.5 204.3z"/>
<path fill="#0000ef" d="M201.5 227.6L194.9 227.8L197.3 222.8L203.9 222.3z"/>
<path fill="#afff50" d="M391.0 144.8L384.5 136.7L386.9 140.3L393.4 148.0z"/>
<path fill="#00cfff" d="M416.2 215.4L409.6 224.3L412.0 229.2L418.6 219.7z"/>
<path fill="#00cfff" d="M331.9 212.2L325.3 211.8L327.7 222.1L334.3 223.2z"/>
<path fill="#00cfff" d="M413.8 210.6L407.2 218.8L409.6 224.3L416.2 215.4z"/>
<path fill="#008fff" d="M324.1 246.8L317.5 240.8L319.9 245.7L326.5 252.1z"/>
<path fill="#008fff" d="M326.5 252.1L319.9 245.7L322.3 249.9L328.9 256.6z"/>
<path fill="#50ffaf" d="M257.1 165.2L250.5 175.7L252.9 178.8L259.5 168.4z"/>
<path fill="#0000ef" d="M342.7 270.7L336.1 265.0L338.5 266.2L345.1 271.4z"/>
<path fill="#00cfff" d="M418.6 219.7L412.0 229.2L414.4 233.4L421.0 223.6z"/>
<path fill="#0000ef" d="M402.5 268.4L395.9 272.1L398.3 268.5L404.9 265.2z"/>
<path fill="#008fff" d="M421.6 242.1L415.0 250.9L417.4 252.0L424.0 243.7z"/>
<path fill="#00efff" d="M411.4 205.5L404.8 212.8L407.2 218.8L413.8 210.6z"/>
<path fill="#00afff" d="M321.7 240.6L315.2 235.3L317.5 240.8L324.1 246.8z"/>
<path fill="#0000ef" d="M376.2 277.2L369.6 276.8L372.0 273.2L378.6 273.4z"/>
<path fill="#0070ff" d="M328.9 256.6L322.3 249.9L324.7 253.5L331.3 260.3z"/>
<path fill="#30ffcf" d="M260.1 186.8L253.5 195.4L255.9 196.8L262.5 189.1z"/>
<path fill="#afff50" d="M393.4 148.0L386.9 140.3L389.3 144.1L395.8 151.3z"/>
<path fill="#10ffef" d="M138.7 204.9L132.1 196.9L134.5 200.0L141.1 207.9z"/>
<path fill="#0000ef" d="M241.0 212.9L234.4 216.9L236.8 213.1L243.4 210.0z"/>
<path fill="#0000ef" d="M194.9 227.8L188.3 227.3L190.7 222.8L197.3 222.8z"/>
<path fill="#0000ef" d="M163.8 225.1L157.2 220.6L159.6 220.6L166.2 224.1z"/>
<path fill="#00cfff" d="M421.0 223.6L414.4 233.4L416.8 237.0L423.4 227.1z"/>
<path fill="#10ffef" d="M409.0 200.1L402.4 206.4L404.8 212.8L411.4 205.5z"/>
<path fill="#10ffef" d="M362.4 195.5L355.8 197.0L358.2 209.3L364.8 207.4z"/>
<path fill="#10ffef" d="M369.0 193.7L362.4 195.5L364.8 207.4L371.3 205.1z"/>
<path fill="#10ffef" d="M355.8 197.0L349.2 198.3L351.6 210.7L358.2 209.3z"/>
<path fill="#50ffaf" d="M259.5 168.4L252.9 178.8L255.3 181.7L261.9 171.6z"/>
<path fill="#00cfff" d="M321.1 220.5L314.5 218.4L316.9 226.4L323.5 229.4z"/>
<path fill="#10ffef" d="M397.7 192.3L391.1 196.0L393.5 204.3L400.1 199.5z"/>
<path fill="#00afff" d="M319.3 233.8L312.8 229.3L315.2 235.3L321.7 240.6z"/>
<path fill="#10ffef" d="M375.5 191.8L369.0 193.7L371.3 205.1L377.9 202.4z"/>
<path fill="#afff50" d="M395.8 151.3L389.3 144.1L391.6 148.1L398.2 154.5z"/>
<path fill="#0000ef" d="M172.8 227.1L166.2 224.1L168.6 222.6L175.2 224.7z"/>
<path fill="#10ffef" d="M349.2 198.3L342.6 199.3L345.0 211.6L351.6 210.7z"/>
<path fill="#0070ff" d="M331.3 260.3L324.7 253.5L327.1 256.3L333.7 263.1z"/>
<path fill="#0000ef" d="M409.1 263.7L402.5 268.4L404.9 265.2L411.5 261.2z"/>
<path fill="#00efff" d="M325.3 211.8L318.7 211.1L321.1 220.5L327.7 222.1z"/>
<path fill="#30ffcf" d="M382.1 189.6L375.5 191.8L377.9 202.4L384.5 199.3z"/>
<path fill="#00cfff" d="M423.4 227.1L416.8 237.0L419.2 239.9L425.8 230.1z"/>
<path fill="#10ffef" d="M406.6 194.4L400.1 199.5L402.4 206.4L409.0 200.1z"/>
<path fill="#0000ef" d="M141.1 207.9L134.5 200.0L136.9 202.9L143.5 210.5z"/>
<path fill="#0000ef" d="M247.5 208.5L241.0 212.9L243.4 210.0L249.9 206.6z"/>
<path fill="#0000ef" d="M369.6 276.8L363.0 275.5L365.4 272.3L372.0 273.2z"/>
<path fill="#0000ef" d="M154.9 220.1L148.3 214.3L150.7 215.6L157.2 220.6z"/>
<path fill="#10ffef" d="M342.6 199.3L336.1 200.2L338.5 212.1L345.0 211.6z"/>
<path fill="#10ffef" d="M258.3 197.8L251.7 204.1L254.1 203.7L260.7 198.5z"/>
<path fill="#8fff70" d="M398.2 154.5L391.6 148.1L394.0 152.3L400.6 157.7z"/>
<path fill="#0000ef" d="M188.3 227.3L181.8 226.3L184.2 222.5L190.7 222.8z"/>
<path fill="#008fff" d="M419.8 252.4L413.2 259.3L415.6 258.2L422.2 252.0z"/>
<path fill="#50ffaf" d="M261.9 171.6L255.3 181.7L257.7 184.4L264.3 174.8z"/>
<path fill="#30ffcf" d="M388.7 187.3L382.1 189.6L384.5 199.3L391.1 196.0z"/>
<path fill="#00cfff" d="M316.9 226.4L310.4 222.8L312.8 229.3L319.3 233.8z"/>
<path fill="#0000ef" d="M354.0 274.9L347.5 271.1L349.9 270.0L356.4 273.2z"/>
<path fill="#30ffcf" d="M262.5 189.1L255.9 196.8L258.3 197.8L264.9 191.2z"/>
<path fill="#00afff" d="M424.0 243.7L417.4 252.0L419.8 252.4L426.4 244.7z"/>
<path fill="#8fff70" d="M400.6 157.7L394.0 152.3L396.4 156.6L403.0 161.0z"/>
<path fill="#10ffef" d="M336.1 200.2L329.5 200.8L331.9 212.2L338.5 212.1z"/>
<path fill="#30ffcf" d="M404.2 188.4L397.7 192.3L400.1 199.5L406.6 194.4z"/>
<path fill="#0000ef" d="M345.1 271.4L338.5 266.2L340.9 266.5L347.5 271.1z"/>
<path fill="#0000ef" d="M333.7 263.1L327.1 256.3L329.5 258.6L336.1 265.0z"/>
<path fill="#00cfff" d="M425.8 230.1L419.2 239.9L421.6 242.1L428.2 232.6z"/>
<path fill="#50ffaf" d="M395.3 184.9L388.7 187.3L391.1 196.0L397.7 192.3z"/>
<path fill="#0000ef" d="M143.5 210.5L136.9 202.9L139.3 205.6L145.9 212.6z"/>
<path fill="#8fff70" d="M403.0 161.0L396.4 156.6L398.8 161.1L405.4 164.2z"/>
<path fill="#10ffef" d="M254.1 203.7L247.5 208.5L249.9 206.6L256.5 202.9z"/>
<path fill="#50ffaf" d="M264.3 174.8L257.7 184.4L260.1 186.8L266.7 178.1z"/>
<path fill="#0000ef" d="M415.6 258.2L409.1 263.7L411.5 261.2L418.0 256.4z"/>
<path fill="#10ffef" d="M318.7 211.1L312.1 210.1L314.5 218.4L321.1 220.5z"/>
<path fill="#10ffef" d="M329.5 200.8L322.9 201.2L325.3 211.8L331.9 212.2z"/>
<path fill="#0000ef" d="M181.8 226.3L175.2 224.7L177.6 221.8L184.2 222.5z"/>
<path fill="#8fff70" d="M405.4 164.2L398.8 161.1L401.2 165.7L407.8 167.4z"/>
<path fill="#00efff" d="M314.5 218.4L308.0 216.0L310.4 222.8L316.9 226.4z"/>
<path fill="#50ffaf" d="M401.8 182.4L395.3 184.9L397.7 192.3L404.2 188.4z"/>
<path fill="#0000ef" d="M363.0 275.5L356.4 273.2L358.8 270.6L365.4 272.3z"/>
<path fill="#30ffcf" d="M415.6 193.5L409.0 200.1L411.4 205.5L418.0 197.9z"/>
<path fill="#30ffcf" d="M418.0 197.9L411.4 205.5L413.8 210.6L420.4 202.0z"/>
<path fill="#0000ef" d="M166.2 224.1L159.6 220.6L162.0 220.2L168.6 222.6z"/>
<path fill="#50ffaf" d="M413.2 189.0L406.6 194.4L409.0 200.1L415.6 193.5z"/>
<path fill="#10ffef" d="M420.4 202.0L413.8 210.6L416.2 215.4L422.8 206.0z"/>
<path fill="#8fff70" d="M407.8 167.4L401.2 165.7L403.6 170.4L410.2 170.7z"/>
<path fill="#0000ef" d="M157.2 220.6L150.7 215.6L153.1 216.6L159.6 220.6z"/>
<path fill="#50ffaf" d="M410.8 184.4L404.2 188.4L406.6 194.4L413.2 189.0z"/>
<path fill="#50ffaf" d="M264.9 191.2L258.3 197.8L260.7 198.5L267.3 193.2z"/>
<path fill="#70ff8f" d="M266.7 178.1L260.1 186.8L262.5 189.1L269.1 181.3z"/>
<path fill="#10ffef" d="M422.8 206.0L416.2 215.4L418.6 219.7L425.2 209.8z"/>
<path fill="#00cfff" d="M428.2 232.6L421.6 242.1L424.0 243.7L430.6 234.8z"/>
<path fill="#0000ef" d="M145.9 212.6L139.3 205.6L141.7 208.0L148.3 214.3z"/>
<path fill="#0000ef" d="M391.7 271.0L385.1 272.6L387.5 267.8L394.1 266.3z"/>
<path fill="#0000ef" d="M336.1 265.0L329.5 258.6L331.9 260.2L338.5 266.2z"/>
<path fill="#30ffcf" d="M322.9 201.2L316.3 201.4L318.7 211.1L325.3 211.8z"/>
<path fill="#8fff70" d="M410.2 170.7L403.6 170.4L406.0 175.1L412.6 173.9z"/>
<path fill="#70ff8f" d="M408.4 179.8L401.8 182.4L404.2 188.4L410.8 184.4z"/>
<path fill="#0000ef" d="M398.3 268.5L391.7 271.0L394.1 266.3L400.7 264.1z"/>
<path fill="#30ffcf" d="M260.7 198.5L254.1 203.7L256.5 202.9L263.1 199.1z"/>
<path fill="#efff10" d="M382.1 133.4L375.5 125.4L377.9 128.9L384.5 136.7z"/>
<path fill="#0000ef" d="M223.6 218.0L217.1 219.9L219.5 214.1L226.0 212.6z"/>
<path fill="#0000ef" d="M230.2 215.8L223.6 218.0L226.0 212.6L232.6 210.8z"/>
<path fill="#70ff8f" d="M386.3 178.6L379.7 179.8L382.1 189.6L388.7 187.3z"/>
<path fill="#70ff8f" d="M392.9 177.4L386.3 178.6L388.7 187.3L395.3 184.9z"/>
<path fill="#70ff8f" d="M379.7 179.8L373.1 181.0L375.5 191.8L382.1 189.6z"/>
<path fill="#00cfff" d="M317.5 240.8L311.0 234.2L313.4 238.6L319.9 245.7z"/>
<path fill="#0000ef" d="M385.1 272.6L378.6 273.4L381.0 268.7L387.5 267.8z"/>
<path fill="#0000ef" d="M217.1 219.9L210.5 221.3L212.9 215.4L219.5 214.1z"/>
<path fill="#70ff8f" d="M399.4 176.2L392.9 177.4L395.3 184.9L401.8 182.4z"/>
<path fill="#00cfff" d="M315.2 235.3L308.6 229.5L311.0 234.2L317.5 240.8z"/>
<path fill="#50ffaf" d="M373.1 181.0L366.6 182.1L369.0 193.7L375.5 191.8z"/>
<path fill="#10ffef" d="M425.2 209.8L418.6 219.7L421.0 223.6L427.6 213.4z"/>
<path fill="#70ff8f" d="M406.0 175.1L399.4 176.2L401.8 182.4L408.4 179.8z"/>
<path fill="#50ffaf" d="M366.6 182.1L360.0 183.3L362.4 195.5L369.0 193.7z"/>
<path fill="#00afff" d="M426.4 244.7L419.8 252.4L422.2 252.0L428.8 245.1z"/>
<path fill="#0000ef" d="M236.8 213.1L230.2 215.8L232.6 210.8L239.2 208.9z"/>
<path fill="#70ff8f" d="M412.6 173.9L406.0 175.1L408.4 179.8L415.0 177.1z"/>
<path fill="#00cfff" d="M319.9 245.7L313.4 238.6L315.8 242.5L322.3 249.9z"/>
<path fill="#0000ef" d="M210.5 221.3L203.9 222.3L206.3 216.5L212.9 215.4z"/>
<path fill="#0000ef" d="M404.9 265.2L398.3 268.5L400.7 264.1L407.3 261.3z"/>
<path fill="#afff50" d="M263.7 154.6L257.1 165.2L259.5 168.4L266.1 157.9z"/>
<path fill="#00efff" d="M312.8 229.3L306.2 224.4L308.6 229.5L315.2 235.3z"/>
<path fill="#50ffaf" d="M360.0 183.3L353.4 184.5L355.8 197.0L362.4 195.5z"/>
<path fill="#8fff70" d="M403.6 170.4L397.0 170.1L399.4 176.2L406.0 175.1z"/>
<path fill="#10ffef" d="M312.1 210.1L305.6 208.8L308.0 216.0L314.5 218.4z"/>
<path fill="#0000ef" d="M175.2 224.7L168.6 222.6L171.0 220.7L177.6 221.8z"/>
<path fill="#efff10" d="M384.5 136.7L377.9 128.9L380.3 132.8L386.9 140.3z"/>
<path fill="#00afff" d="M422.2 252.0L415.6 258.2L418.0 256.4L424.6 251.0z"/>
<path fill="#0000ef" d="M243.4 210.0L236.8 213.1L239.2 208.9L245.8 206.7z"/>
<path fill="#50ffaf" d="M353.4 184.5L346.8 185.7L349.2 198.3L355.8 197.0z"/>
<path fill="#70ff8f" d="M415.0 177.1L408.4 179.8L410.8 184.4L417.4 180.3z"/>
<path fill="#70ff8f" d="M269.1 181.3L262.5 189.1L264.9 191.2L271.5 184.5z"/>
<path fill="#10ffef" d="M427.6 213.4L421.0 223.6L423.4 227.1L430.0 216.8z"/>
<path fill="#0000ef" d="M378.6 273.4L372.0 273.2L374.4 268.8L381.0 268.7z"/>
<path fill="#0000ef" d="M347.5 271.1L340.9 266.5L343.3 266.1L349.9 270.0z"/>
<path fill="#00cfff" d="M322.3 249.9L315.8 242.5L318.2 245.9L324.7 253.5z"/>
<path fill="#8fff70" d="M401.2 165.7L394.7 164.1L397.0 170.1L403.6 170.4z"/>
<path fill="#0000ef" d="M203.9 222.3L197.3 222.8L199.7 217.3L206.3 216.5z"/>
<path fill="#10ffef" d="M310.4 222.8L303.8 218.9L306.2 224.4L312.8 229.3z"/>
<path fill="#30ffcf" d="M316.3 201.4L309.8 201.5L312.1 210.1L318.7 211.1z"/>
<path fill="#50ffaf" d="M346.8 185.7L340.2 186.8L342.6 199.3L349.2 198.3z"/>
<path fill="#efff10" d="M386.9 140.3L380.3 132.8L382.7 137.1L389.3 144.1z"/>
<path fill="#afff50" d="M398.8 161.1L392.3 158.1L394.7 164.1L401.2 165.7z"/>
<path fill="#70ff8f" d="M417.4 180.3L410.8 184.4L413.2 189.0L419.8 183.6z"/>
<path fill="#afff50" d="M266.1 157.9L259.5 168.4L261.9 171.6L268.5 161.5z"/>
<path fill="#0000ef" d="M249.9 206.6L243.4 210.0L245.8 206.7L252.3 204.4z"/>
<path fill="#8fff70" d="M397.0 170.1L390.5 169.9L392.9 177.4L399.4 176.2z"/>
<path fill="#0000ef" d="M148.3 214.3L141.7 208.0L144.1 210.3L150.7 215.6z"/>
<path fill="#0000ef" d="M411.5 261.2L404.9 265.2L407.3 261.3L413.9 257.9z"/>
<path fill="#0000ef" d="M356.4 273.2L349.9 270.0L352.3 268.2L358.8 270.6z"/>
<path fill="#efff10" d="M389.3 144.1L382.7 137.1L385.1 141.9L391.6 148.1z"/>
<path fill="#50ffaf" d="M340.2 186.8L333.7 188.0L336.1 200.2L342.6 199.3z"/>
<path fill="#afff50" d="M396.4 156.6L389.9 152.4L392.3 158.1L398.8 161.1z"/>
<path fill="#0000af" d="M288.9 354.9L282.3 356.7L284.7 362.2L291.3 360.3z"/>
<path fill="#00cfff" d="M430.6 234.8L424.0 243.7L426.4 244.7L433.0 236.5z"/>
<path fill="#50ffaf" d="M132.1 196.9L125.5 188.7L127.9 191.9L134.5 200.0z"/>
<path fill="#50ffaf" d="M267.3 193.2L260.7 198.5L263.1 199.1L269.7 195.1z"/>
<path fill="#00008f" d="M291.3 360.3L284.7 362.2L287.1 366.1L293.7 364.2z"/>
<path fill="#cfff30" d="M391.6 148.1L385.1 141.9L387.5 147.0L394.0 152.3z"/>
<path fill="#cfff30" d="M394.0 152.3L387.5 147.0L389.9 152.4L396.4 156.6z"/>
<path fill="#0000ef" d="M197.3 222.8L190.7 222.8L193.1 217.9L199.7 217.3z"/>
<path fill="#10ffef" d="M430.0 216.8L423.4 227.1L425.8 230.1L432.4 219.9z"/>
<path fill="#70ff8f" d="M419.8 183.6L413.2 189.0L415.6 193.5L422.2 186.8z"/>
<path fill="#00cfff" d="M324.7 253.5L318.2 245.9L320.6 248.9L327.1 256.3z"/>
<path fill="#10ffef" d="M308.0 216.0L301.4 213.2L303.8 218.9L310.4 222.8z"/>
<path fill="#0000af" d="M282.3 356.7L275.8 357.2L278.2 362.6L284.7 362.2z"/>
<path fill="#00008f" d="M284.7 362.2L278.2 362.6L280.6 366.6L287.1 366.1z"/>
<path fill="#50ffaf" d="M333.7 188.0L327.1 189.2L329.5 200.8L336.1 200.2z"/>
<path fill="#0000ef" d="M338.5 266.2L331.9 260.2L334.3 261.2L340.9 266.5z"/>
<path fill="#0000ef" d="M256.5 202.9L249.9 206.6L252.3 204.4L258.9 202.0z"/>
<path fill="#8fff70" d="M390.5 169.9L383.9 169.9L386.3 178.6L392.9 177.4z"/>
<path fill="#70ff8f" d="M271.5 184.5L264.9 191.2L267.3 193.2L273.9 187.8z"/>
<path fill="#0000af" d="M295.5 351.6L288.9 354.9L291.3 360.3L297.9 356.9z"/>
<path fill="#afff50" d="M268.5 161.5L261.9 171.6L264.3 174.8L270.9 165.3z"/>
<path fill="#0000ef" d="M159.6 220.6L153.1 216.6L155.5 217.4L162.0 220.2z"/>
<path fill="#0000ef" d="M372.0 273.2L365.4 272.3L367.8 268.4L374.4 268.8z"/>
<path fill="#0000af" d="M297.9 356.9L291.3 360.3L293.7 364.2L300.3 360.8z"/>
<path fill="#0000af" d="M286.5 348.1L279.9 349.9L282.3 356.7L288.9 354.9z"/>
<path fill="#70ff8f" d="M422.2 186.8L415.6 193.5L418.0 197.9L424.6 190.0z"/>
<path fill="#50ffaf" d="M309.8 201.5L303.2 201.4L305.6 208.8L312.1 210.1z"/>
<path fill="#50ffaf" d="M327.1 189.2L320.5 190.4L322.9 201.2L329.5 200.8z"/>
<path fill="#afff50" d="M394.7 164.1L388.1 162.5L390.5 169.9L397.0 170.1z"/>
<path fill="#50ffaf" d="M134.5 200.0L127.9 191.9L130.3 195.2L136.9 202.9z"/>
<path fill="#0000ef" d="M190.7 222.8L184.2 222.5L186.6 218.3L193.1 217.9z"/>
<path fill="#0000af" d="M279.9 349.9L273.4 350.4L275.8 357.2L282.3 356.7z"/>
<path fill="#0000ef" d="M168.6 222.6L162.0 220.2L164.4 219.4L171.0 220.7z"/>
<path fill="#8fff70" d="M383.9 169.9L377.3 169.9L379.7 179.8L386.3 178.6z"/>
<path fill="#afff50" d="M270.9 165.3L264.3 174.8L266.7 178.1L273.3 169.3z"/>
<path fill="#0000ef" d="M418.0 256.4L411.5 261.2L413.9 257.9L420.4 253.9z"/>
<path fill="#0000cf" d="M293.1 344.9L286.5 348.1L288.9 354.9L295.5 351.6z"/>
<path fill="#30ffcf" d="M305.6 208.8L299.0 207.3L301.4 213.2L308.0 216.0z"/>
<path fill="#50ffaf" d="M263.1 199.1L256.5 202.9L258.9 202.0L265.5 199.5z"/>
<path fill="#10ffef" d="M432.4 219.9L425.8 230.1L428.2 232.6L434.8 222.8z"/>
<path fill="#70ff8f" d="M424.6 190.0L418.0 197.9L420.4 202.0L427.0 193.3z"/>
<path fill="#0000af" d="M275.8 357.2L269.2 356.3L271.6 361.6L278.2 362.6z"/>
<path fill="#70ff8f" d="M320.5 190.4L313.9 191.6L316.3 201.4L322.9 201.2z"/>
<path fill="#0000ef" d="M327.1 256.3L320.6 248.9L322.9 251.5L329.5 258.6z"/>
<path fill="#0000af" d="M278.2 362.6L271.6 361.6L274.0 365.5L280.6 366.6z"/>
<path fill="#0000ef" d="M150.7 215.6L144.1 210.3L146.5 212.4L153.1 216.6z"/>
<path fill="#00cfff" d="M428.8 245.1L422.2 252.0L424.6 251.0L431.2 245.1z"/>
<path fill="#70ff8f" d="M273.9 187.8L267.3 193.2L269.7 195.1L276.3 191.0z"/>
<path fill="#8fff70" d="M377.3 169.9L370.7 170.1L373.1 181.0L379.7 179.8z"/>
<path fill="#0000cf" d="M302.1 347.0L295.5 351.6L297.9 356.9L304.5 352.2z"/>
<path fill="#8fff70" d="M273.3 169.3L266.7 178.1L269.1 181.3L275.6 173.5z"/>
<path fill="#0000af" d="M304.5 352.2L297.9 356.9L300.3 360.8L306.9 356.1z"/>
<path fill="#50ffaf" d="M136.9 202.9L130.3 195.2L132.7 198.4L139.3 205.6z"/>
<path fill="#cfff30" d="M392.3 158.1L385.7 155.4L388.1 162.5L394.7 164.1z"/>
<path fill="#50ffaf" d="M427.0 193.3L420.4 202.0L422.8 206.0L429.4 196.5z"/>
<path fill="#70ff8f" d="M313.9 191.6L307.4 192.7L309.8 201.5L316.3 201.4z"/>
<path fill="#0000ef" d="M184.2 222.5L177.6 221.8L180.0 218.5L186.6 218.3z"/>
<path fill="#00efff" d="M433.0 236.5L426.4 244.7L428.8 245.1L435.4 237.8z"/>
<path fill="#70ff8f" d="M269.7 195.1L263.1 199.1L265.5 199.5L272.1 196.9z"/>
<path fill="#0000ef" d="M365.4 272.3L358.8 270.6L361.2 267.3L367.8 268.4z"/>
<path fill="#0000cf" d="M273.4 350.4L266.8 349.6L269.2 356.3L275.8 357.2z"/>
<path fill="#50ffaf" d="M303.2 201.4L296.6 201.2L299.0 207.3L305.6 208.8z"/>
<path fill="#0000cf" d="M284.1 340.0L277.6 341.8L279.9 349.9L286.5 348.1z"/>
<path fill="#afff50" d="M370.7 170.1L364.2 170.5L366.6 182.1L373.1 181.0z"/>
<path fill="#afff50" d="M388.1 162.5L381.5 161.2L383.9 169.9L390.5 169.9z"/>
<path fill="#8fff70" d="M275.6 173.5L269.1 181.3L271.5 184.5L278.0 177.8z"/>
<path fill="#0000cf" d="M299.7 340.5L293.1 344.9L295.5 351.6L302.1 347.0z"/>
<path fill="#10ffef" d="M434.8 222.8L428.2 232.6L430.6 234.8L437.2 225.4z"/>
<path fill="#0000cf" d="M277.6 341.8L271.0 342.3L273.4 350.4L279.9 349.9z"/>
<path fill="#0000ef" d="M349.9 270.0L343.3 266.1L345.7 265.1L352.3 268.2z"/>
<path fill="#0000ef" d="M290.7 337.0L284.1 340.0L286.5 348.1L293.1 344.9z"/>
<path fill="#50ffaf" d="M429.4 196.5L422.8 206.0L425.2 209.8L431.8 199.7z"/>
<path fill="#70ff8f" d="M307.4 192.7L300.8 193.9L303.2 201.4L309.8 201.5z"/>
<path fill="#afff50" d="M364.2 170.5L357.6 171.2L360.0 183.3L366.6 182.1z"/>
<path fill="#0000ef" d="M424.6 251.0L418.0 256.4L420.4 253.9L427.0 249.5z"/>
<path fill="#efff10" d="M389.9 152.4L383.3 148.5L385.7 155.4L392.3 158.1z"/>
<path fill="#0000ef" d="M340.9 266.5L334.3 261.2L336.7 261.6L343.3 266.1z"/>
<path fill="#8fff70" d="M278.0 177.8L271.5 184.5L273.9 187.8L280.4 182.3z"/>
<path fill="#0000ef" d="M329.5 258.6L322.9 251.5L325.3 253.6L331.9 260.2z"/>
<path fill="#70ff8f" d="M276.3 191.0L269.7 195.1L272.1 196.9L278.6 194.2z"/>
<path fill="#50ffaf" d="M139.3 205.6L132.7 198.4L135.1 201.6L141.7 208.0z"/>
<path fill="#30ffcf" d="M303.8 218.9L297.2 214.7L299.6 219.1L306.2 224.4z"/>
<path fill="#30ffcf" d="M306.2 224.4L299.6 219.1L302.0 223.2L308.6 229.5z"/>
<path fill="#0000ef" d="M162.0 220.2L155.5 217.4L157.9 217.9L164.4 219.4z"/>
<path fill="#50ffaf" d="M301.4 213.2L294.8 210.2L297.2 214.7L303.8 218.9z"/>
<path fill="#afff50" d="M357.6 171.2L351.0 172.0L353.4 184.5L360.0 183.3z"/>
<path fill="#10ffef" d="M308.6 229.5L302.0 223.2L304.4 227.2L311.0 234.2z"/>
<path fill="#0000ef" d="M177.6 221.8L171.0 220.7L173.4 218.6L180.0 218.5z"/>
<path fill="#0000cf" d="M269.2 356.3L262.6 354.0L265.0 359.2L271.6 361.6z"/>
<path fill="#70ff8f" d="M300.8 193.9L294.2 195.1L296.6 201.2L303.2 201.4z"/>
<path fill="#50ffaf" d="M431.8 199.7L425.2 209.8L427.6 213.4L434.2 203.0z"/>
<path fill="#8fff70" d="M280.4 182.3L273.9 187.8L276.3 191.0L282.8 186.9z"/>
<path fill="#0000af" d="M271.6 361.6L265.0 359.2L267.4 363.1L274.0 365.5z"/>
<path fill="#50ffaf" d="M299.0 207.3L292.4 205.6L294.8 210.2L301.4 213.2z"/>
<path fill="#50ffaf" d="M153.1 216.6L146.5 212.4L148.9 214.4L155.5 217.4z"/>
<path fill="#10ffef" d="M311.0 234.2L304.4 227.2L306.8 231.0L313.4 238.6z"/>
<path fill="#0000ef" d="M271.0 342.3L264.4 341.7L266.8 349.6L273.4 350.4z"/>
<path fill="#afff50" d="M351.0 172.0L344.4 173.1L346.8 185.7L353.4 184.5z"/>
<path fill="#cfff30" d="M381.5 161.2L374.9 160.2L377.3 169.9L383.9 169.9z"/>
<path fill="#efff10" d="M387.5 147.0L380.9 142.0L383.3 148.5L389.9 152.4z"/>
<path fill="#0000ef" d="M297.3 332.9L290.7 337.0L293.1 344.9L299.7 340.5z"/>
<path fill="#70ff8f" d="M296.6 201.2L290.0 201.0L292.4 205.6L299.0 207.3z"/>
<path fill="#ffcf00" d="M375.5 125.4L368.9 117.9L371.3 121.4L377.9 128.9z"/>
<path fill="#0000ef" d="M308.7 341.1L302.1 347.0L304.5 352.2L311.0 346.1z"/>
<path fill="#efff10" d="M270.2 144.3L263.7 154.6L266.1 157.9L272.6 147.7z"/>
<path fill="#0000ef" d="M400.7 264.1L394.1 266.3L396.5 260.9L403.1 259.1z"/>
<path fill="#0000ef" d="M394.1 266.3L387.5 267.8L389.9 262.3L396.5 260.9z"/>
<path fill="#8fff70" d="M282.8 186.9L276.3 191.0L278.6 194.2L285.2 191.6z"/>
<path fill="#0000cf" d="M311.0 346.1L304.5 352.2L306.9 356.1L313.4 350.0z"/>
<path fill="#afff50" d="M344.4 173.1L337.8 174.3L340.2 186.8L346.8 185.7z"/>
<path fill="#10ffef" d="M437.2 225.4L430.6 234.8L433.0 236.5L439.6 227.9z"/>
<path fill="#0000cf" d="M266.8 349.6L260.2 347.6L262.6 354.0L269.2 356.3z"/>
<path fill="#0000ef" d="M252.3 204.4L245.8 206.7L248.2 203.3L254.7 202.2z"/>
<path fill="#0000ef" d="M358.8 270.6L352.3 268.2L354.7 265.7L361.2 267.3z"/>
<path fill="#0000ef" d="M258.9 202.0L252.3 204.4L254.7 202.2L261.3 201.0z"/>
<path fill="#0000ef" d="M245.8 206.7L239.2 208.9L241.6 204.5L248.2 203.3z"/>
<path fill="#10ffef" d="M313.4 238.6L306.8 231.0L309.2 234.6L315.8 242.5z"/>
<path fill="#efff10" d="M385.7 155.4L379.1 152.9L381.5 161.2L388.1 162.5z"/>
<path fill="#70ff8f" d="M294.2 195.1L287.6 196.3L290.0 201.0L296.6 201.2z"/>
<path fill="#70ff8f" d="M265.5 199.5L258.9 202.0L261.3 201.0L267.9 199.8z"/>
<path fill="#0000ef" d="M239.2 208.9L232.6 210.8L235.0 205.7L241.6 204.5z"/>
<path fill="#70ff8f" d="M141.7 208.0L135.1 201.6L137.5 204.9L144.1 210.3z"/>
<path fill="#0000ef" d="M407.3 261.3L400.7 264.1L403.1 259.1L409.7 256.8z"/>
<path fill="#0000ef" d="M387.5 267.8L381.0 268.7L383.4 263.3L389.9 262.3z"/>
<path fill="#70ff8f" d="M272.1 196.9L265.5 199.5L267.9 199.8L274.5 198.6z"/>
<path fill="#afff50" d="M337.8 174.3L331.3 175.9L333.7 188.0L340.2 186.8z"/>
<path fill="#ffef00" d="M385.1 141.9L378.5 136.0L380.9 142.0L387.5 147.0z"/>
<path fill="#50ffaf" d="M434.2 203.0L427.6 213.4L430.0 216.8L436.6 206.2z"/>
<path fill="#0000ef" d="M232.6 210.8L226.0 212.6L228.4 206.9L235.0 205.7z"/>
<path fill="#70ff8f" d="M278.6 194.2L272.1 196.9L274.5 198.6L281.0 197.5z"/>
<path fill="#0000ef" d="M306.3 335.0L299.7 340.5L302.1 347.0L308.7 341.1z"/>
<path fill="#ffcf00" d="M377.9 128.9L371.3 121.4L373.7 125.7L380.3 132.8z"/>
<path fill="#10ffef" d="M435.4 237.8L428.8 245.1L431.2 245.1L437.8 238.8z"/>
<path fill="#8fff70" d="M285.2 191.6L278.6 194.2L281.0 197.5L287.6 196.3z"/>
<path fill="#afff50" d="M331.3 175.9L324.7 177.6L327.1 189.2L333.7 188.0z"/>
<path fill="#0000ef" d="M226.0 212.6L219.5 214.1L221.8 208.1L228.4 206.9z"/>
<path fill="#8fff70" d="M291.8 189.0L285.2 191.6L287.6 196.3L294.2 195.1z"/>
<path fill="#0010ff" d="M281.7 330.7L275.2 332.4L277.6 341.8L284.1 340.0z"/>
<path fill="#efff10" d="M272.6 147.7L266.1 157.9L268.5 161.5L275.0 151.6z"/>
<path fill="#afff50" d="M324.7 177.6L318.1 179.6L320.5 190.4L327.1 189.2z"/>
<path fill="#ffcf00" d="M382.7 137.1L376.1 130.5L378.5 136.0L385.1 141.9z"/>
<path fill="#8fff70" d="M298.4 186.4L291.8 189.0L294.2 195.1L300.8 193.9z"/>
<path fill="#0000ef" d="M171.0 220.7L164.4 219.4L166.8 218.5L173.4 218.6z"/>
<path fill="#ffcf00" d="M380.3 132.8L373.7 125.7L376.1 130.5L382.7 137.1z"/>
<path fill="#8fff70" d="M318.1 179.6L311.5 181.7L313.9 191.6L320.5 190.4z"/>
<path fill="#8fff70" d="M305.0 184.0L298.4 186.4L300.8 193.9L307.4 192.7z"/>
<path fill="#8fff70" d="M311.5 181.7L305.0 184.0L307.4 192.7L313.9 191.6z"/>
<path fill="#0000ef" d="M219.5 214.1L212.9 215.4L215.3 209.2L221.8 208.1z"/>
<path fill="#00efff" d="M431.2 245.1L424.6 251.0L427.0 249.5L433.6 244.7z"/>
<path fill="#10ffef" d="M315.8 242.5L309.2 234.6L311.6 238.0L318.2 245.9z"/>
<path fill="#0000ef" d="M331.9 260.2L325.3 253.6L327.7 255.3L334.3 261.2z"/>
<path fill="#0000ef" d="M413.9 257.9L407.3 261.3L409.7 256.8L416.3 254.1z"/>
<path fill="#0000ef" d="M381.0 268.7L374.4 268.8L376.8 263.8L383.4 263.3z"/>
<path fill="#0010ff" d="M288.3 328.0L281.7 330.7L284.1 340.0L290.7 337.0z"/>
<path fill="#8fff70" d="M289.4 182.9L282.8 186.9L285.2 191.6L291.8 189.0z"/>
<path fill="#0010ff" d="M275.2 332.4L268.6 333.1L271.0 342.3L277.6 341.8z"/>
<path fill="#70ff8f" d="M287.6 196.3L281.0 197.5L283.4 200.7L290.0 201.0z"/>
<path fill="#cfff30" d="M374.9 160.2L368.3 159.5L370.7 170.1L377.3 169.9z"/>
<path fill="#efff10" d="M275.0 151.6L268.5 161.5L270.9 165.3L277.4 156.0z"/>
<path fill="#0000ef" d="M212.9 215.4L206.3 216.5L208.7 210.4L215.3 209.2z"/>
<path fill="#50ffaf" d="M436.6 206.2L430.0 216.8L432.4 219.9L438.9 209.4z"/>
<path fill="#afff50" d="M287.0 177.0L280.4 182.3L282.8 186.9L289.4 182.9z"/>
<path fill="#70ff8f" d="M290.0 201.0L283.4 200.7L285.8 203.9L292.4 205.6z"/>
<path fill="#70ff8f" d="M144.1 210.3L137.5 204.9L139.9 208.1L146.5 212.4z"/>
<path fill="#efff10" d="M277.4 156.0L270.9 165.3L273.3 169.3L279.8 160.7z"/>
<path fill="#0000ef" d="M264.4 341.7L257.8 340.0L260.2 347.6L266.8 349.6z"/>
<path fill="#afff50" d="M284.6 171.3L278.0 177.8L280.4 182.3L287.0 177.0z"/>
<path fill="#0000ef" d="M206.3 216.5L199.7 217.3L202.1 211.6L208.7 210.4z"/>
<path fill="#50ffaf" d="M155.5 217.4L148.9 214.4L151.3 216.3L157.9 217.9z"/>
<path fill="#cfff30" d="M279.8 160.7L273.3 169.3L275.6 173.5L282.2 165.8z"/>
<path fill="#cfff30" d="M282.2 165.8L275.6 173.5L278.0 177.8L284.6 171.3z"/>
<path fill="#0010ff" d="M303.9 327.8L297.3 332.9L299.7 340.5L306.3 335.0z"/>
<path fill="#8fff70" d="M281.0 197.5L274.5 198.6L276.9 200.4L283.4 200.7z"/>
<path fill="#30ffcf" d="M439.6 227.9L433.0 236.5L435.4 237.8L442.0 230.2z"/>
<path fill="#10ffef" d="M318.2 245.9L311.6 238.0L314.0 241.1L320.6 248.9z"/>
<path fill="#0000ef" d="M420.4 253.9L413.9 257.9L416.3 254.1L422.8 251.0z"/>
<path fill="#afff50" d="M296.0 179.0L289.4 182.9L291.8 189.0L298.4 186.4z"/>
<path fill="#ffef00" d="M383.3 148.5L376.7 145.0L379.1 152.9L385.7 155.4z"/>
<path fill="#0030ff" d="M294.9 324.2L288.3 328.0L290.7 337.0L297.3 332.9z"/>
<path fill="#0000ef" d="M374.4 268.8L367.8 268.4L370.2 263.9L376.8 263.8z"/>
<path fill="#0000ef" d="M343.3 266.1L336.7 261.6L339.1 261.6L345.7 265.1z"/>
<path fill="#0010ff" d="M268.6 333.1L262.0 332.7L264.4 341.7L271.0 342.3z"/>
<path fill="#70ff8f" d="M292.4 205.6L285.8 203.9L288.2 207.1L294.8 210.2z"/>
<path fill="#0000ef" d="M199.7 217.3L193.1 217.9L195.5 212.8L202.1 211.6z"/>
<path fill="#efff10" d="M368.3 159.5L361.8 159.2L364.2 170.5L370.7 170.1z"/>
<path fill="#0000ef" d="M164.4 219.4L157.9 217.9L160.3 218.3L166.8 218.5z"/>
<path fill="#0000ef" d="M262.6 354.0L256.0 350.5L258.4 355.6L265.0 359.2z"/>
<path fill="#efff10" d="M379.1 152.9L372.5 150.8L374.9 160.2L381.5 161.2z"/>
<path fill="#50ffaf" d="M438.9 209.4L432.4 219.9L434.8 222.8L441.3 212.6z"/>
<path fill="#0000cf" d="M265.0 359.2L258.4 355.6L260.8 359.4L267.4 363.1z"/>
<path fill="#70ff8f" d="M294.8 210.2L288.2 207.1L290.6 210.4L297.2 214.7z"/>
<path fill="#8fff70" d="M274.5 198.6L267.9 199.8L270.3 200.1L276.9 200.4z"/>
<path fill="#0000ef" d="M352.3 268.2L345.7 265.1L348.1 263.7L354.7 265.7z"/>
<path fill="#0000ef" d="M193.1 217.9L186.6 218.3L189.0 213.9L195.5 212.8z"/>
<path fill="#afff50" d="M302.6 175.4L296.0 179.0L298.4 186.4L305.0 184.0z"/>
<path fill="#0010ff" d="M315.2 334.1L308.7 341.1L311.0 346.1L317.6 338.9z"/>
<path fill="#70ff8f" d="M146.5 212.4L139.9 208.1L142.3 211.3L148.9 214.4z"/>
<path fill="#0000ef" d="M260.2 347.6L253.6 344.4L256.0 350.5L262.6 354.0z"/>
<path fill="#0000ef" d="M320.6 248.9L314.0 241.1L316.4 244.0L322.9 251.5z"/>
<path fill="#cfff30" d="M293.6 171.9L287.0 177.0L289.4 182.9L296.0 179.0z"/>
<path fill="#0010ff" d="M317.6 338.9L311.0 346.1L313.4 350.0L320.0 342.7z"/>
<path fill="#0000ef" d="M427.0 249.5L420.4 253.9L422.8 251.0L429.4 247.6z"/>
<path fill="#efff10" d="M361.8 159.2L355.2 159.2L357.6 171.2L364.2 170.5z"/>
<path fill="#70ff8f" d="M297.2 214.7L290.6 210.4L293.0 213.6L299.6 219.1z"/>
<path fill="#0000ef" d="M334.3 261.2L327.7 255.3L330.1 256.7L336.7 261.6z"/>
<path fill="#8fff70" d="M283.4 200.7L276.9 200.4L279.3 202.2L285.8 203.9z"/>
<path fill="#0030ff" d="M312.8 328.4L306.3 335.0L308.7 341.1L315.2 334.1z"/>
<path fill="#10ffef" d="M437.8 238.8L431.2 245.1L433.6 244.7L440.2 239.6z"/>
<path fill="#0000ef" d="M186.6 218.3L180.0 218.5L182.4 215.1L189.0 213.9z"/>
<path fill="#0000ef" d="M367.8 268.4L361.2 267.3L363.6 263.5L370.2 263.9z"/>
<path fill="#0000ef" d="M267.9 199.8L261.3 201.0L263.7 200.0L270.3 200.1z"/>
<path fill="#ffcf00" d="M380.9 142.0L374.3 137.5L376.7 145.0L383.3 148.5z"/>
<path fill="#50ffaf" d="M441.3 212.6L434.8 222.8L437.2 225.4L443.7 215.9z"/>
<path fill="#cfff30" d="M309.1 172.0L302.6 175.4L305.0 184.0L311.5 181.7z"/>
<path fill="#0050ff" d="M301.5 319.6L294.9 324.2L297.3 332.9L303.9 327.8z"/>
<path fill="#0030ff" d="M262.0 332.7L255.4 331.3L257.8 340.0L264.4 341.7z"/>
<path fill="#30ffcf" d="M442.0 230.2L435.4 237.8L437.8 238.8L444.3 232.3z"/>
<path fill="#0050ff" d="M279.3 320.4L272.8 322.0L275.2 332.4L281.7 330.7z"/>
<path fill="#70ff8f" d="M299.6 219.1L293.0 213.6L295.4 216.8L302.0 223.2z"/>
<path fill="#efff10" d="M355.2 159.2L348.6 159.7L351.0 172.0L357.6 171.2z"/>
<path fill="#70ff8f" d="M157.9 217.9L151.3 216.3L153.7 218.1L160.3 218.3z"/>
<path fill="#0000ef" d="M180.0 218.5L173.4 218.6L175.8 216.3L182.4 215.1z"/>
<path fill="#0050ff" d="M285.9 317.9L279.3 320.4L281.7 330.7L288.3 328.0z"/>
<path fill="#efff10" d="M291.2 165.0L284.6 171.3L287.0 177.0L293.6 171.9z"/>
<path fill="#0050ff" d="M272.8 322.0L266.2 322.8L268.6 333.1L275.2 332.4z"/>
<path fill="#0010ff" d="M257.8 340.0L251.2 337.2L253.6 344.4L260.2 347.6z"/>
<path fill="#cfff30" d="M315.7 168.9L309.1 172.0L311.5 181.7L318.1 179.6z"/>
<path fill="#0000ef" d="M261.3 201.0L254.7 202.2L257.1 199.9L263.7 200.0z"/>
<path fill="#70ff8f" d="M148.9 214.4L142.3 211.3L144.7 214.6L151.3 216.3z"/>
<path fill="#ffef00" d="M372.5 150.8L365.9 149.2L368.3 159.5L374.9 160.2z"/>
<path fill="#0050ff" d="M310.4 321.6L303.9 327.8L306.3 335.0L312.8 328.4z"/>
<path fill="#0000ef" d="M322.9 251.5L316.4 244.0L318.8 246.6L325.3 253.6z"/>
<path fill="#efff10" d="M348.6 159.7L342.0 160.7L344.4 173.1L351.0 172.0z"/>
<path fill="#50ffaf" d="M302.0 223.2L295.4 216.8L297.8 220.1L304.4 227.2z"/>
<path fill="#10ffef" d="M433.6 244.7L427.0 249.5L429.4 247.6L436.0 244.0z"/>
<path fill="#efff10" d="M322.3 166.2L315.7 168.9L318.1 179.6L324.7 177.6z"/>
<path fill="#50ffaf" d="M443.7 215.9L437.2 225.4L439.6 227.9L446.1 219.1z"/>
<path fill="#ffaf00" d="M378.5 136.0L371.9 130.7L374.3 137.5L380.9 142.0z"/>
<path fill="#8fff70" d="M285.8 203.9L279.3 202.2L281.7 204.1L288.2 207.1z"/>
<path fill="#0000ef" d="M173.4 218.6L166.8 218.5L169.2 217.5L175.8 216.3z"/>
<path fill="#efff10" d="M300.2 167.0L293.6 171.9L296.0 179.0L302.6 175.4z"/>
<path fill="#ffcf00" d="M376.7 145.0L370.1 141.9L372.5 150.8L379.1 152.9z"/>
<path fill="#efff10" d="M342.0 160.7L335.5 162.1L337.8 174.3L344.4 173.1z"/>
<path fill="#0050ff" d="M292.5 314.6L285.9 317.9L288.3 328.0L294.9 324.2z"/>
<path fill="#efff10" d="M328.9 163.9L322.3 166.2L324.7 177.6L331.3 175.9z"/>
<path fill="#0000ef" d="M254.7 202.2L248.2 203.3L250.6 199.9L257.1 199.9z"/>
<path fill="#8fff70" d="M276.9 200.4L270.3 200.1L272.7 200.5L279.3 202.2z"/>
<path fill="#efff10" d="M335.5 162.1L328.9 163.9L331.3 175.9L337.8 174.3z"/>
<path fill="#efff10" d="M288.8 158.5L282.2 165.8L284.6 171.3L291.2 165.0z"/>
<path fill="#0000ef" d="M361.2 267.3L354.7 265.7L357.1 262.8L363.6 263.5z"/>
<path fill="#0050ff" d="M266.2 322.8L259.6 322.6L262.0 332.7L268.6 333.1z"/>
<path fill="#ffcf00" d="M276.8 134.4L270.2 144.3L272.6 147.7L279.2 137.9z"/>
<path fill="#50ffaf" d="M304.4 227.2L297.8 220.1L300.2 223.3L306.8 231.0z"/>
<path fill="#ff7000" d="M368.9 117.9L362.3 111.0L364.7 114.7L371.3 121.4z"/>
<path fill="#0000ef" d="M345.7 265.1L339.1 261.6L341.5 261.2L348.1 263.7z"/>
<path fill="#0000ef" d="M166.8 218.5L160.3 218.3L162.6 218.7L169.2 217.5z"/>
<path fill="#ffaf00" d="M376.1 130.5L369.5 124.6L371.9 130.7L378.5 136.0z"/>
<path fill="#0000ef" d="M248.2 203.3L241.6 204.5L244.0 200.2L250.6 199.9z"/>
<path fill="#ffef00" d="M286.4 152.5L279.8 160.7L282.2 165.8L288.8 158.5z"/>
<path fill="#70ff8f" d="M151.3 216.3L144.7 214.6L147.1 217.8L153.7 218.1z"/>
<path fill="#ffcf00" d="M279.2 137.9L272.6 147.7L275.0 151.6L281.6 142.2z"/>
<path fill="#0000ef" d="M336.7 261.6L330.1 256.7L332.5 257.7L339.1 261.6z"/>
<path fill="#50ffaf" d="M444.3 232.3L437.8 238.8L440.2 239.6L446.7 234.2z"/>
<path fill="#ff8f00" d="M371.3 121.4L364.7 114.7L367.1 119.2L373.7 125.7z"/>
<path fill="#70ff8f" d="M446.1 219.1L439.6 227.9L442.0 230.2L448.5 222.3z"/>
<path fill="#ff8f00" d="M373.7 125.7L367.1 119.2L369.5 124.6L376.1 130.5z"/>
<path fill="#ffcf00" d="M284.0 147.0L277.4 156.0L279.8 160.7L286.4 152.5z"/>
<path fill="#0070ff" d="M308.0 314.1L301.5 319.6L303.9 327.8L310.4 321.6z"/>
<path fill="#ffcf00" d="M365.9 149.2L359.4 148.2L361.8 159.2L368.3 159.5z"/>
<path fill="#0010ff" d="M256.0 350.5L249.5 345.9L251.8 350.7L258.4 355.6z"/>
<path fill="#ffcf00" d="M281.6 142.2L275.0 151.6L277.4 156.0L284.0 147.0z"/>
<path fill="#8fff70" d="M288.2 207.1L281.7 204.1L284.0 206.0L290.6 210.4z"/>
<path fill="#0000ef" d="M325.3 253.6L318.8 246.6L321.2 249.1L327.7 255.3z"/>
<path fill="#50ffaf" d="M306.8 231.0L300.2 223.3L302.6 226.5L309.2 234.6z"/>
<path fill="#0050ff" d="M255.4 331.3L248.8 329.0L251.2 337.2L257.8 340.0z"/>
<path fill="#0000ef" d="M241.6 204.5L235.0 205.7L237.4 200.6L244.0 200.2z"/>
<path fill="#efff10" d="M306.7 162.6L300.2 167.0L302.6 175.4L309.1 172.0z"/>
<path fill="#0070ff" d="M299.1 310.6L292.5 314.6L294.9 324.2L301.5 319.6z"/>
<path fill="#30ffcf" d="M440.2 239.6L433.6 244.7L436.0 244.0L442.6 240.1z"/>
<path fill="#70ff8f" d="M160.3 218.3L153.7 218.1L156.1 219.8L162.6 218.7z"/>
<path fill="#0010ff" d="M258.4 355.6L251.8 350.7L254.2 354.4L260.8 359.4z"/>
<path fill="#0000ef" d="M403.1 259.1L396.5 260.9L398.9 255.1L405.5 253.6z"/>
<path fill="#0000ef" d="M409.7 256.8L403.1 259.1L405.5 253.6L412.1 251.9z"/>
<path fill="#0030ff" d="M253.6 344.4L247.1 340.1L249.5 345.9L256.0 350.5z"/>
<path fill="#0000ef" d="M396.5 260.9L389.9 262.3L392.3 256.4L398.9 255.1z"/>
<path fill="#ffef00" d="M297.8 159.1L291.2 165.0L293.6 171.9L300.2 167.0z"/>
<path fill="#0050ff" d="M321.8 326.1L315.2 334.1L317.6 338.9L324.2 330.7z"/>
<path fill="#0000ef" d="M270.3 200.1L263.7 200.0L266.1 199.0L272.7 200.5z"/>
<path fill="#0050ff" d="M259.6 322.6L253.0 321.7L255.4 331.3L262.0 332.7z"/>
<path fill="#0000ef" d="M416.3 254.1L409.7 256.8L412.1 251.9L418.6 249.9z"/>
<path fill="#0050ff" d="M319.4 320.8L312.8 328.4L315.2 334.1L321.8 326.1z"/>
<path fill="#0000ef" d="M235.0 205.7L228.4 206.9L230.8 201.2L237.4 200.6z"/>
<path fill="#0000ef" d="M389.9 262.3L383.4 263.3L385.8 257.5L392.3 256.4z"/>
<path fill="#ffaf00" d="M374.3 137.5L367.7 133.6L370.1 141.9L376.7 145.0z"/>
<path fill="#0050ff" d="M324.2 330.7L317.6 338.9L320.0 342.7L326.6 334.3z"/>
<path fill="#0000ef" d="M354.7 265.7L348.1 263.7L350.5 261.8L357.1 262.8z"/>
<path fill="#50ffaf" d="M309.2 234.6L302.6 226.5L305.0 229.8L311.6 238.0z"/>
<path fill="#70ff8f" d="M153.7 218.1L147.1 217.8L149.5 221.0L156.1 219.8z"/>
<path fill="#0000ef" d="M422.8 251.0L416.3 254.1L418.6 249.9L425.2 247.8z"/>
<path fill="#70ff8f" d="M448.5 222.3L442.0 230.2L444.3 232.3L450.9 225.6z"/>
<path fill="#afff50" d="M279.3 202.2L272.7 200.5L275.1 201.1L281.7 204.1z"/>
<path fill="#0000ef" d="M228.4 206.9L221.8 208.1L224.2 202.0L230.8 201.2z"/>
<path fill="#ffaf00" d="M370.1 141.9L363.6 139.5L365.9 149.2L372.5 150.8z"/>
<path fill="#ffcf00" d="M359.4 148.2L352.8 147.7L355.2 159.2L361.8 159.2z"/>
<path fill="#8fff70" d="M290.6 210.4L284.0 206.0L286.4 208.1L293.0 213.6z"/>
<path fill="#0000ef" d="M383.4 263.3L376.8 263.8L379.2 258.3L385.8 257.5z"/>
<path fill="#ffef00" d="M313.3 158.7L306.7 162.6L309.1 172.0L315.7 168.9z"/>
<path fill="#0050ff" d="M251.2 337.2L244.7 333.4L247.1 340.1L253.6 344.4z"/>
<path fill="#0070ff" d="M317.0 314.7L310.4 321.6L312.8 328.4L319.4 320.8z"/>
<path fill="#0070ff" d="M276.9 309.2L270.4 310.8L272.8 322.0L279.3 320.4z"/>
<path fill="#0000ef" d="M221.8 208.1L215.3 209.2L217.7 203.1L224.2 202.0z"/>
<path fill="#008fff" d="M283.5 307.1L276.9 309.2L279.3 320.4L285.9 317.9z"/>
<path fill="#0000ef" d="M429.4 247.6L422.8 251.0L425.2 247.8L431.8 245.5z"/>
<path fill="#0000ef" d="M327.7 255.3L321.2 249.1L323.6 251.4L330.1 256.7z"/>
<path fill="#0070ff" d="M270.4 310.8L263.8 311.6L266.2 322.8L272.8 322.0z"/>
<path fill="#50ffaf" d="M311.6 238.0L305.0 229.8L307.4 233.0L314.0 241.1z"/>
<path fill="#ffcf00" d="M295.4 151.7L288.8 158.5L291.2 165.0L297.8 159.1z"/>
<path fill="#0000ef" d="M215.3 209.2L208.7 210.4L211.1 204.4L217.7 203.1z"/>
<path fill="#50ffaf" d="M446.7 234.2L440.2 239.6L442.6 240.1L449.1 236.1z"/>
<path fill="#008fff" d="M305.6 305.8L299.1 310.6L301.5 319.6L308.0 314.1z"/>
<path fill="#0000ef" d="M376.8 263.8L370.2 263.9L372.6 258.9L379.2 258.3z"/>
<path fill="#0000ef" d="M263.7 200.0L257.1 199.9L259.5 197.7L266.1 199.0z"/>
<path fill="#008fff" d="M290.1 304.3L283.5 307.1L285.9 317.9L292.5 314.6z"/>
<path fill="#0000ef" d="M208.7 210.4L202.1 211.6L204.5 205.9L211.1 204.4z"/>
<path fill="#ffcf00" d="M352.8 147.7L346.2 147.9L348.6 159.7L355.2 159.2z"/>
<path fill="#ffcf00" d="M319.9 155.2L313.3 158.7L315.7 168.9L322.3 166.2z"/>
<path fill="#0000ef" d="M436.0 244.0L429.4 247.6L431.8 245.5L438.4 243.1z"/>
<path fill="#8fff70" d="M156.1 219.8L149.5 221.0L151.9 224.2L158.5 221.6z"/>
<path fill="#0000ef" d="M202.1 211.6L195.5 212.8L197.9 207.6L204.5 205.9z"/>
<path fill="#70ff8f" d="M450.9 225.6L444.3 232.3L446.7 234.2L453.3 228.8z"/>
<path fill="#0000ef" d="M339.1 261.6L332.5 257.7L334.9 258.4L341.5 261.2z"/>
<path fill="#8fff70" d="M162.6 218.7L156.1 219.8L158.5 221.6L165.0 219.0z"/>
<path fill="#ff8f00" d="M371.9 130.7L365.3 126.1L367.7 133.6L374.3 137.5z"/>
<path fill="#ffcf00" d="M304.4 153.7L297.8 159.1L300.2 167.0L306.7 162.6z"/>
<path fill="#8fff70" d="M293.0 213.6L286.4 208.1L288.8 210.4L295.4 216.8z"/>
<path fill="#0000ef" d="M195.5 212.8L189.0 213.9L191.4 209.6L197.9 207.6z"/>
<path fill="#8fff70" d="M169.2 217.5L162.6 218.7L165.0 219.0L171.6 216.4z"/>
<path fill="#0070ff" d="M253.0 321.7L246.4 320.0L248.8 329.0L255.4 331.3z"/>
<path fill="#0000ef" d="M189.0 213.9L182.4 215.1L184.8 211.7L191.4 209.6z"/>
<path fill="#008fff" d="M263.8 311.6L257.2 311.8L259.6 322.6L266.2 322.8z"/>
<path fill="#0000ef" d="M175.8 216.3L169.2 217.5L171.6 216.4L178.2 214.0z"/>
<path fill="#008fff" d="M314.6 307.8L308.0 314.1L310.4 321.6L317.0 314.7z"/>
<path fill="#0000ef" d="M182.4 215.1L175.8 216.3L178.2 214.0L184.8 211.7z"/>
<path fill="#50ffaf" d="M314.0 241.1L307.4 233.0L309.8 236.2L316.4 244.0z"/>
<path fill="#ffcf00" d="M346.2 147.9L339.6 148.7L342.0 160.7L348.6 159.7z"/>
<path fill="#ffcf00" d="M326.5 152.4L319.9 155.2L322.3 166.2L328.9 163.9z"/>
<path fill="#0070ff" d="M248.8 329.0L242.3 325.9L244.7 333.4L251.2 337.2z"/>
<path fill="#0000ef" d="M370.2 263.9L363.6 263.5L366.0 259.3L372.6 258.9z"/>
<path fill="#0000ef" d="M348.1 263.7L341.5 261.2L343.9 260.5L350.5 261.8z"/>
<path fill="#ffaf00" d="M293.0 144.8L286.4 152.5L288.8 158.5L295.4 151.7z"/>
<path fill="#00afff" d="M296.7 300.8L290.1 304.3L292.5 314.6L299.1 310.6z"/>
<path fill="#50ffaf" d="M442.6 240.1L436.0 244.0L438.4 243.1L445.0 240.5z"/>
<path fill="#afff50" d="M281.7 204.1L275.1 201.1L277.5 201.8L284.0 206.0z"/>
<path fill="#ffcf00" d="M339.6 148.7L333.1 150.3L335.5 162.1L342.0 160.7z"/>
<path fill="#ffcf00" d="M333.1 150.3L326.5 152.4L328.9 163.9L335.5 162.1z"/>
<path fill="#ffaf00" d="M363.6 139.5L357.0 137.8L359.4 148.2L365.9 149.2z"/>
<path fill="#0000ef" d="M257.1 199.9L250.6 199.9L252.9 196.7L259.5 197.7z"/>
<path fill="#0000ef" d="M272.7 200.5L266.1 199.0L268.5 198.3L275.1 201.1z"/>
<path fill="#0000ef" d="M330.1 256.7L323.6 251.4L326.0 253.5L332.5 257.7z"/>
<path fill="#ff7000" d="M369.5 124.6L362.9 119.4L365.3 126.1L371.9 130.7z"/>
<path fill="#70ff8f" d="M453.3 228.8L446.7 234.2L449.1 236.1L455.7 232.0z"/>
<path fill="#afff50" d="M295.4 216.8L288.8 210.4L291.2 212.9L297.8 220.1z"/>
<path fill="#8fff70" d="M158.5 221.6L151.9 224.2L154.3 227.5L160.9 223.4z"/>
<path fill="#ff8f00" d="M367.7 133.6L361.2 130.5L363.6 139.5L370.1 141.9z"/>
<path fill="#ff7000" d="M283.4 125.2L276.8 134.4L279.2 137.9L285.8 128.8z"/>
<path fill="#008fff" d="M257.2 311.8L250.6 311.3L253.0 321.7L259.6 322.6z"/>
<path fill="#ffaf00" d="M290.6 138.7L284.0 147.0L286.4 152.5L293.0 144.8z"/>
<path fill="#50ffaf" d="M316.4 244.0L309.8 236.2L312.2 239.4L318.8 246.6z"/>
<path fill="#0000ef" d="M363.6 263.5L357.1 262.8L359.4 259.6L366.0 259.3z"/>
<path fill="#70ff8f" d="M449.1 236.1L442.6 240.1L445.0 240.5L451.5 237.9z"/>
<path fill="#0050ff" d="M249.5 345.9L242.9 340.3L245.3 344.8L251.8 350.7z"/>
<path fill="#ff8f00" d="M285.8 128.8L279.2 137.9L281.6 142.2L288.2 133.4z"/>
<path fill="#ffaf00" d="M310.9 148.9L304.4 153.7L306.7 162.6L313.3 158.7z"/>
<path fill="#ff5000" d="M362.3 111.0L355.8 105.1L358.2 108.8L364.7 114.7z"/>
<path fill="#ff8f00" d="M288.2 133.4L281.6 142.2L284.0 147.0L290.6 138.7z"/>
<path fill="#00afff" d="M312.2 300.4L305.6 305.8L308.0 314.1L314.6 307.8z"/>
<path fill="#0050ff" d="M247.1 340.1L240.5 334.9L242.9 340.3L249.5 345.9z"/>
<path fill="#ff5000" d="M367.1 119.2L360.5 113.6L362.9 119.4L369.5 124.6z"/>
<path fill="#ffaf00" d="M302.0 145.4L295.4 151.7L297.8 159.1L304.4 153.7z"/>
<path fill="#008fff" d="M326.0 312.5L319.4 320.8L321.8 326.1L328.4 317.3z"/>
<path fill="#0050ff" d="M251.8 350.7L245.3 344.8L247.7 348.5L254.2 354.4z"/>
<path fill="#00afff" d="M303.3 296.9L296.7 300.8L299.1 310.6L305.6 305.8z"/>
<path fill="#008fff" d="M328.4 317.3L321.8 326.1L324.2 330.7L330.8 321.6z"/>
<path fill="#ff5000" d="M364.7 114.7L358.2 108.8L360.5 113.6L367.1 119.2z"/>
<path fill="#8fff70" d="M165.0 219.0L158.5 221.6L160.9 223.4L167.4 219.4z"/>
<path fill="#0000ef" d="M250.6 199.9L244.0 200.2L246.4 196.0L252.9 196.7z"/>
<path fill="#afff50" d="M297.8 220.1L291.2 212.9L293.6 215.5L300.2 223.3z"/>
<path fill="#00afff" d="M323.6 307.0L317.0 314.7L319.4 320.8L326.0 312.5z"/>
<path fill="#ff8f00" d="M357.0 137.8L350.4 136.9L352.8 147.7L359.4 148.2z"/>
<path fill="#0070ff" d="M330.8 321.6L324.2 330.7L326.6 334.3L333.2 325.1z"/>
<path fill="#008fff" d="M246.4 320.0L239.9 317.6L242.3 325.9L248.8 329.0z"/>
<path fill="#70ff8f" d="M455.7 232.0L449.1 236.1L451.5 237.9L458.1 235.3z"/>
<path fill="#50ffaf" d="M318.8 246.6L312.2 239.4L314.6 242.7L321.2 249.1z"/>
<path fill="#8fff70" d="M160.9 223.4L154.3 227.5L156.7 230.7L163.3 225.3z"/>
<path fill="#0070ff" d="M244.7 333.4L238.1 328.8L240.5 334.9L247.1 340.1z"/>
<path fill="#0000ef" d="M284.0 206.0L277.5 201.8L279.9 202.8L286.4 208.1z"/>
<path fill="#0000ef" d="M341.5 261.2L334.9 258.4L337.3 259.0L343.9 260.5z"/>
<path fill="#0000ef" d="M357.1 262.8L350.5 261.8L352.9 259.6L359.4 259.6z"/>
<path fill="#00afff" d="M250.6 311.3L244.1 310.3L246.4 320.0L253.0 321.7z"/>
<path fill="#00cfff" d="M281.1 295.6L274.5 297.4L276.9 309.2L283.5 307.1z"/>
<path fill="#00cfff" d="M274.5 297.4L268.0 298.8L270.4 310.8L276.9 309.2z"/>
<path fill="#50ffaf" d="M332.5 257.7L326.0 253.5L328.3 255.4L334.9 258.4z"/>
<path fill="#afff50" d="M171.6 216.4L165.0 219.0L167.4 219.4L174.0 215.5z"/>
<path fill="#ffaf00" d="M317.5 144.9L310.9 148.9L313.3 158.7L319.9 155.2z"/>
<path fill="#00afff" d="M321.2 301.0L314.6 307.8L317.0 314.7L323.6 307.0z"/>
<path fill="#0000ef" d="M266.1 199.0L259.5 197.7L261.9 195.8L268.5 198.3z"/>
<path fill="#0000ef" d="M244.0 200.2L237.4 200.6L239.8 195.6L246.4 196.0z"/>
<path fill="#ff7000" d="M365.3 126.1L358.8 122.3L361.2 130.5L367.7 133.6z"/>
<path fill="#00cfff" d="M287.7 293.3L281.1 295.6L283.5 307.1L290.1 304.3z"/>
<path fill="#00cfff" d="M268.0 298.8L261.4 299.8L263.8 311.6L270.4 310.8z"/>
<path fill="#afff50" d="M300.2 223.3L293.6 215.5L296.0 218.4L302.6 226.5z"/>
<path fill="#0000ef" d="M431.8 245.5L425.2 247.8L427.6 244.4L434.2 243.2z"/>
<path fill="#ff8f00" d="M299.6 137.9L293.0 144.8L295.4 151.7L302.0 145.4z"/>
<path fill="#0000ef" d="M438.4 243.1L431.8 245.5L434.2 243.2L440.8 242.0z"/>
<path fill="#ff8f00" d="M350.4 136.9L343.8 136.7L346.2 147.9L352.8 147.7z"/>
<path fill="#0000ef" d="M425.2 247.8L418.6 249.9L421.0 245.6L427.6 244.4z"/>
<path fill="#ff7000" d="M361.2 130.5L354.6 128.2L357.0 137.8L363.6 139.5z"/>
<path fill="#70ff8f" d="M445.0 240.5L438.4 243.1L440.8 242.0L447.4 240.8z"/>
<path fill="#0000ef" d="M418.6 249.9L412.1 251.9L414.5 246.7L421.0 245.6z"/>
<path fill="#70ff8f" d="M321.2 249.1L314.6 242.7L317.0 245.9L323.6 251.4z"/>
<path fill="#00cfff" d="M309.8 292.5L303.3 296.9L305.6 305.8L312.2 300.4z"/>
<path fill="#008fff" d="M242.3 325.9L235.7 322.0L238.1 328.8L244.7 333.4z"/>
<path fill="#70ff8f" d="M451.5 237.9L445.0 240.5L447.4 240.8L453.9 239.7z"/>
<path fill="#0000ef" d="M275.1 201.1L268.5 198.3L270.9 197.9L277.5 201.8z"/>
<path fill="#8fff70" d="M163.3 225.3L156.7 230.7L159.1 233.9L165.7 227.2z"/>
<path fill="#0000ef" d="M412.1 251.9L405.5 253.6L407.9 247.9L414.5 246.7z"/>
<path fill="#70ff8f" d="M458.1 235.3L451.5 237.9L453.9 239.7L460.5 238.5z"/>
<path fill="#0000ef" d="M178.2 214.0L171.6 216.4L174.0 215.5L180.6 211.9z"/>
<path fill="#00cfff" d="M294.3 290.6L287.7 293.3L290.1 304.3L296.7 300.8z"/>
<path fill="#00cfff" d="M261.4 299.8L254.8 300.3L257.2 311.8L263.8 311.6z"/>
<path fill="#0000ef" d="M405.5 253.6L398.9 255.1L401.3 249.1L407.9 247.9z"/>
<path fill="#ff8f00" d="M324.1 141.6L317.5 144.9L319.9 155.2L326.5 152.4z"/>
<path fill="#0000ef" d="M350.5 261.8L343.9 260.5L346.3 259.5L352.9 259.6z"/>
<path fill="#0000ef" d="M237.4 200.6L230.8 201.2L233.2 195.7L239.8 195.6z"/>
<path fill="#ff8f00" d="M308.5 139.9L302.0 145.4L304.4 153.7L310.9 148.9z"/>
<path fill="#afff50" d="M167.4 219.4L160.9 223.4L163.3 225.3L169.8 219.9z"/>
<path fill="#0000ef" d="M398.9 255.1L392.3 256.4L394.7 250.3L401.3 249.1z"/>
<path fill="#00cfff" d="M318.8 294.5L312.2 300.4L314.6 307.8L321.2 301.0z"/>
<path fill="#afff50" d="M302.6 226.5L296.0 218.4L298.4 221.5L305.0 229.8z"/>
<path fill="#ff7000" d="M343.8 136.7L337.2 137.5L339.6 148.7L346.2 147.9z"/>
<path fill="#0000ef" d="M286.4 208.1L279.9 202.8L282.3 204.2L288.8 210.4z"/>
<path fill="#0000ef" d="M184.8 211.7L178.2 214.0L180.6 211.9L187.2 208.5z"/>
<path fill="#ff8f00" d="M330.7 139.1L324.1 141.6L326.5 152.4L333.1 150.3z"/>
<path fill="#0000ef" d="M392.3 256.4L385.8 257.5L388.2 251.4L394.7 250.3z"/>
<path fill="#ff7000" d="M337.2 137.5L330.7 139.1L333.1 150.3L339.6 148.7z"/>
<path fill="#ff7000" d="M297.2 131.1L290.6 138.7L293.0 144.8L299.6 137.9z"/>
<path fill="#ff5000" d="M362.9 119.4L356.4 115.1L358.8 122.3L365.3 126.1z"/>
<path fill="#00efff" d="M300.9 287.5L294.3 290.6L296.7 300.8L303.3 296.9z"/>
<path fill="#0000ef" d="M230.8 201.2L224.2 202.0L226.6 196.2L233.2 195.7z"/>
<path fill="#70ff8f" d="M323.6 251.4L317.0 245.9L319.4 249.1L326.0 253.5z"/>
<path fill="#00cfff" d="M254.8 300.3L248.2 300.3L250.6 311.3L257.2 311.8z"/>
<path fill="#00afff" d="M244.1 310.3L237.5 308.7L239.9 317.6L246.4 320.0z"/>
<path fill="#0000ef" d="M385.8 257.5L379.2 258.3L381.6 252.6L388.2 251.4z"/>
<path fill="#50ffaf" d="M334.9 258.4L328.3 255.4L330.7 257.3L337.3 259.0z"/>
<path fill="#8fff70" d="M165.7 227.2L159.1 233.9L161.5 237.2L168.0 229.3z"/>
<path fill="#0000ef" d="M191.4 209.6L184.8 211.7L187.2 208.5L193.7 205.4z"/>
<path fill="#8fff70" d="M460.5 238.5L453.9 239.7L456.3 241.4L462.9 241.7z"/>
<path fill="#afff50" d="M305.0 229.8L298.4 221.5L300.8 224.9L307.4 233.0z"/>
<path fill="#0000ef" d="M259.5 197.7L252.9 196.7L255.3 193.8L261.9 195.8z"/>
<path fill="#ff5000" d="M290.0 116.8L283.4 125.2L285.8 128.8L292.4 120.6z"/>
<path fill="#00afff" d="M239.9 317.6L233.3 314.5L235.7 322.0L242.3 325.9z"/>
<path fill="#0000ef" d="M224.2 202.0L217.7 203.1L220.1 197.2L226.6 196.2z"/>
<path fill="#0000ef" d="M379.2 258.3L372.6 258.9L375.0 253.8L381.6 252.6z"/>
<path fill="#ff5000" d="M294.8 125.4L288.2 133.4L290.6 138.7L297.2 131.1z"/>
<path fill="#0000ef" d="M197.9 207.6L191.4 209.6L193.7 205.4L200.3 202.7z"/>
<path fill="#ff5000" d="M354.6 128.2L348.0 126.8L350.4 136.9L357.0 137.8z"/>
<path fill="#0000ef" d="M343.9 260.5L337.3 259.0L339.7 259.4L346.3 259.5z"/>
<path fill="#ff5000" d="M292.4 120.6L285.8 128.8L288.2 133.4L294.8 125.4z"/>
<path fill="#00efff" d="M316.4 287.6L309.8 292.5L312.2 300.4L318.8 294.5z"/>
<path fill="#0000ef" d="M217.7 203.1L211.1 204.4L213.5 198.6L220.1 197.2z"/>
<path fill="#ff3000" d="M360.5 113.6L354.0 109.0L356.4 115.1L362.9 119.4z"/>
<path fill="#0000ef" d="M204.5 205.9L197.9 207.6L200.3 202.7L206.9 200.4z"/>
<path fill="#0000ef" d="M211.1 204.4L204.5 205.9L206.9 200.4L213.5 198.6z"/>
<path fill="#ff1000" d="M355.8 105.1L349.2 100.1L351.6 103.9L358.2 108.8z"/>
<path fill="#8fff70" d="M453.9 239.7L447.4 240.8L449.7 241.2L456.3 241.4z"/>
<path fill="#cfff30" d="M174.0 215.5L167.4 219.4L169.8 219.9L176.4 214.8z"/>
<path fill="#ff7000" d="M315.1 135.3L308.5 139.9L310.9 148.9L317.5 144.9z"/>
<path fill="#10ffef" d="M307.4 284.1L300.9 287.5L303.3 296.9L309.8 292.5z"/>
<path fill="#0000ef" d="M372.6 258.9L366.0 259.3L368.4 255.0L375.0 253.8z"/>
<path fill="#ff5000" d="M358.8 122.3L352.2 119.5L354.6 128.2L361.2 130.5z"/>
<path fill="#afff50" d="M307.4 233.0L300.8 224.9L303.2 228.5L309.8 236.2z"/>
<path fill="#0000ef" d="M288.8 210.4L282.3 204.2L284.7 205.9L291.2 212.9z"/>
<path fill="#70ff8f" d="M326.0 253.5L319.4 249.1L321.8 252.4L328.3 255.4z"/>
<path fill="#00cfff" d="M332.6 303.5L326.0 312.5L328.4 317.3L335.0 307.9z"/>
<path fill="#ff1000" d="M358.2 108.8L351.6 103.9L354.0 109.0L360.5 113.6z"/>
<path fill="#00cfff" d="M248.2 300.3L241.7 300.0L244.1 310.3L250.6 311.3z"/>
<path fill="#ff7000" d="M306.1 131.7L299.6 137.9L302.0 145.4L308.5 139.9z"/>
<path fill="#00cfff" d="M330.2 298.8L323.6 307.0L326.0 312.5L332.6 303.5z"/>
<path fill="#008fff" d="M240.5 334.9L233.9 329.0L236.3 333.8L242.9 340.3z"/>
<path fill="#8fff70" d="M168.0 229.3L161.5 237.2L163.9 240.4L170.4 231.6z"/>
<path fill="#008fff" d="M242.9 340.3L236.3 333.8L238.7 338.1L245.3 344.8z"/>
<path fill="#afff50" d="M169.8 219.9L163.3 225.3L165.7 227.2L172.2 220.7z"/>
<path fill="#0000ef" d="M277.5 201.8L270.9 197.9L273.3 197.9L279.9 202.8z"/>
<path fill="#00cfff" d="M335.0 307.9L328.4 317.3L330.8 321.6L337.4 311.8z"/>
<path fill="#8fff70" d="M462.9 241.7L456.3 241.4L458.7 243.2L465.3 244.9z"/>
<path fill="#00efff" d="M327.8 293.7L321.2 301.0L323.6 307.0L330.2 298.8z"/>
<path fill="#0000ef" d="M366.0 259.3L359.4 259.6L361.8 256.2L368.4 255.0z"/>
<path fill="#00afff" d="M238.1 328.8L231.5 323.5L233.9 329.0L240.5 334.9z"/>
<path fill="#0000ef" d="M447.4 240.8L440.8 242.0L443.2 241.0L449.7 241.2z"/>
<path fill="#0000ef" d="M268.5 198.3L261.9 195.8L264.3 194.4L270.9 197.9z"/>
<path fill="#0070ff" d="M245.3 344.8L238.7 338.1L241.1 341.6L247.7 348.5z"/>
<path fill="#afff50" d="M309.8 236.2L303.2 228.5L305.6 232.3L312.2 239.4z"/>
<path fill="#00cfff" d="M337.4 311.8L330.8 321.6L333.2 325.1L339.8 315.2z"/>
<path fill="#ff5000" d="M348.0 126.8L341.4 126.4L343.8 136.7L350.4 136.9z"/>
<path fill="#0000ef" d="M252.9 196.7L246.4 196.0L248.8 192.2L255.3 193.8z"/>
<path fill="#10ffef" d="M325.4 288.2L318.8 294.5L321.2 301.0L327.8 293.7z"/>
<path fill="#10ffef" d="M278.7 283.6L272.2 285.2L274.5 297.4L281.1 295.6z"/>
<path fill="#70ff8f" d="M337.3 259.0L330.7 257.3L333.1 259.1L339.7 259.4z"/>
<path fill="#0000ef" d="M359.4 259.6L352.9 259.6L355.3 257.3L361.8 256.2z"/>
<path fill="#10ffef" d="M285.3 281.9L278.7 283.6L281.1 295.6L287.7 293.3z"/>
<path fill="#ff5000" d="M321.7 131.5L315.1 135.3L317.5 144.9L324.1 141.6z"/>
<path fill="#10ffef" d="M272.2 285.2L265.6 286.4L268.0 298.8L274.5 297.4z"/>
<path fill="#00cfff" d="M237.5 308.7L230.9 306.6L233.3 314.5L239.9 317.6z"/>
<path fill="#10ffef" d="M314.0 280.5L307.4 284.1L309.8 292.5L316.4 287.6z"/>
<path fill="#0000ef" d="M440.8 242.0L434.2 243.2L436.6 240.9L443.2 241.0z"/>
<path fill="#70ff8f" d="M328.3 255.4L321.8 252.4L324.2 255.6L330.7 257.3z"/>
<path fill="#00afff" d="M235.7 322.0L229.1 317.5L231.5 323.5L238.1 328.8z"/>
<path fill="#afff50" d="M170.4 231.6L163.9 240.4L166.3 243.6L172.8 234.1z"/>
<path fill="#10ffef" d="M291.9 279.9L285.3 281.9L287.7 293.3L294.3 290.6z"/>
<path fill="#efff10" d="M180.6 211.9L174.0 215.5L176.4 214.8L183.0 210.0z"/>
<path fill="#afff50" d="M312.2 239.4L305.6 232.3L308.0 236.3L314.6 242.7z"/>
<path fill="#10ffef" d="M265.6 286.4L259.0 287.5L261.4 299.8L268.0 298.8z"/>
<path fill="#0000ef" d="M291.2 212.9L284.7 205.9L287.1 208.0L293.6 215.5z"/>
<path fill="#ff5000" d="M303.7 124.5L297.2 131.1L299.6 137.9L306.1 131.7z"/>
<path fill="#00efff" d="M241.7 300.0L235.1 299.3L237.5 308.7L244.1 310.3z"/>
<path fill="#8fff70" d="M465.3 244.9L458.7 243.2L461.1 245.1L467.7 248.2z"/>
<path fill="#0000ef" d="M352.9 259.6L346.3 259.5L348.7 258.5L355.3 257.3z"/>
<path fill="#30ffcf" d="M298.5 277.8L291.9 279.9L294.3 290.6L300.9 287.5z"/>
<path fill="#ff1000" d="M356.4 115.1L349.8 111.9L352.2 119.5L358.8 122.3z"/>
<path fill="#ff5000" d="M341.4 126.4L334.8 127.1L337.2 137.5L343.8 136.7z"/>
<path fill="#10ffef" d="M323.0 282.5L316.4 287.6L318.8 294.5L325.4 288.2z"/>
<path fill="#ff5000" d="M328.3 128.8L321.7 131.5L324.1 141.6L330.7 139.1z"/>
<path fill="#0000ef" d="M434.2 243.2L427.6 244.4L430.0 241.0L436.6 240.9z"/>
<path fill="#8fff70" d="M456.3 241.4L449.7 241.2L452.1 241.6L458.7 243.2z"/>
<path fill="#10ffef" d="M259.0 287.5L252.4 288.3L254.8 300.3L261.4 299.8z"/>
<path fill="#8fff70" d="M314.6 242.7L308.0 236.3L310.4 240.4L317.0 245.9z"/>
<path fill="#ff5000" d="M334.8 127.1L328.3 128.8L330.7 139.1L337.2 137.5z"/>
<path fill="#cfff30" d="M172.2 220.7L165.7 227.2L168.0 229.3L174.6 221.7z"/>
<path fill="#ff3000" d="M352.2 119.5L345.6 117.8L348.0 126.8L354.6 128.2z"/>
<path fill="#ff5000" d="M312.7 126.6L306.1 131.7L308.5 139.9L315.1 135.3z"/>
<path fill="#30ffcf" d="M305.0 275.5L298.5 277.8L300.9 287.5L307.4 284.1z"/>
<path fill="#afff50" d="M172.8 234.1L166.3 243.6L168.7 246.9L175.2 236.7z"/>
<path fill="#00cfff" d="M233.3 314.5L226.7 311.0L229.1 317.5L235.7 322.0z"/>
<path fill="#0000ef" d="M346.3 259.5L339.7 259.4L342.1 259.7L348.7 258.5z"/>
<path fill="#0000ef" d="M246.4 196.0L239.8 195.6L242.2 191.1L248.8 192.2z"/>
<path fill="#0000ef" d="M427.6 244.4L421.0 245.6L423.4 241.2L430.0 241.0z"/>
<path fill="#efff10" d="M176.4 214.8L169.8 219.9L172.2 220.7L178.8 214.4z"/>
<path fill="#ff3000" d="M301.3 118.4L294.8 125.4L297.2 131.1L303.7 124.5z"/>
<path fill="#70ff8f" d="M330.7 257.3L324.2 255.6L326.6 258.8L333.1 259.1z"/>
<path fill="#0000ef" d="M279.9 202.8L273.3 197.9L275.7 198.3L282.3 204.2z"/>
<path fill="#8fff70" d="M317.0 245.9L310.4 240.4L312.8 244.8L319.4 249.1z"/>
<path fill="#10ffef" d="M252.4 288.3L245.8 289.0L248.2 300.3L254.8 300.3z"/>
<path fill="#0000ef" d="M187.2 208.5L180.6 211.9L183.0 210.0L189.6 205.6z"/>
<path fill="#ff1000" d="M296.6 109.5L290.0 116.8L292.4 120.6L299.0 113.4z"/>
<path fill="#30ffcf" d="M320.6 276.6L314.0 280.5L316.4 287.6L323.0 282.5z"/>
<path fill="#0000ef" d="M293.6 215.5L287.1 208.0L289.4 210.6L296.0 218.4z"/>
<path fill="#ef0000" d="M354.0 109.0L347.4 105.5L349.8 111.9L356.4 115.1z"/>
<path fill="#8fff70" d="M467.7 248.2L461.1 245.1L463.5 247.1L470.1 251.4z"/>
<path fill="#ff1000" d="M299.0 113.4L292.4 120.6L294.8 125.4L301.3 118.4z"/>
<path fill="#50ffaf" d="M311.6 273.1L305.0 275.5L307.4 284.1L314.0 280.5z"/>
<path fill="#0000ef" d="M421.0 245.6L414.5 246.7L416.9 241.6L423.4 241.2z"/>
<path fill="#0000ef" d="M261.9 195.8L255.3 193.8L257.7 191.3L264.3 194.4z"/>
<path fill="#70ff8f" d="M339.7 259.4L333.1 259.1L335.5 260.9L342.1 259.7z"/>
<path fill="#8fff70" d="M319.4 249.1L312.8 244.8L315.2 249.3L321.8 252.4z"/>
<path fill="#cf0000" d="M349.2 100.1L342.6 96.4L345.0 100.3L351.6 103.9z"/>
<path fill="#afff50" d="M175.2 236.7L168.7 246.9L171.1 250.1L177.6 239.6z"/>
<path fill="#10ffef" d="M235.1 299.3L228.5 298.3L230.9 306.6L237.5 308.7z"/>
<path fill="#ef0000" d="M351.6 103.9L345.0 100.3L347.4 105.5L354.0 109.0z"/>
<path fill="#0000ef" d="M449.7 241.2L443.2 241.0L445.6 240.1L452.1 241.6z"/>
<path fill="#10ffef" d="M245.8 289.0L239.3 289.4L241.7 300.0L248.2 300.3z"/>
<path fill="#0000ef" d="M414.5 246.7L407.9 247.9L410.3 242.2L416.9 241.6z"/>
<path fill="#8fff70" d="M321.8 252.4L315.2 249.3L317.6 253.9L324.2 255.6z"/>
<path fill="#ff1000" d="M345.6 117.8L339.0 117.2L341.4 126.4L348.0 126.8z"/>
<path fill="#0000ef" d="M270.9 197.9L264.3 194.4L266.7 193.4L273.3 197.9z"/>
<path fill="#0000ef" d="M239.8 195.6L233.2 195.7L235.6 190.7L242.2 191.1z"/>
<path fill="#ff3000" d="M319.3 122.5L312.7 126.6L315.1 135.3L321.7 131.5z"/>
<path fill="#00efff" d="M230.9 306.6L224.3 304.1L226.7 311.0L233.3 314.5z"/>
<path fill="#50ffaf" d="M318.2 270.5L311.6 273.1L314.0 280.5L320.6 276.6z"/>
<path fill="#0000ef" d="M193.7 205.4L187.2 208.5L189.6 205.6L196.1 201.6z"/>
<path fill="#efff10" d="M296.0 218.4L289.4 210.6L291.8 213.6L298.4 221.5z"/>
<path fill="#cfff30" d="M174.6 221.7L168.0 229.3L170.4 231.6L177.0 223.0z"/>
<path fill="#70ff8f" d="M333.1 259.1L326.6 258.8L329.0 262.0L335.5 260.9z"/>
<path fill="#ff1000" d="M310.3 119.0L303.7 124.5L306.1 131.7L312.7 126.6z"/>
<path fill="#30ffcf" d="M332.0 281.7L325.4 288.2L327.8 293.7L334.4 286.0z"/>
<path fill="#30ffcf" d="M334.4 286.0L327.8 293.7L330.2 298.8L336.7 290.2z"/>
<path fill="#afff50" d="M458.7 243.2L452.1 241.6L454.5 242.1L461.1 245.1z"/>
<path fill="#0000ef" d="M407.9 247.9L401.3 249.1L403.7 243.0L410.3 242.2z"/>
<path fill="#50ffaf" d="M329.6 277.2L323.0 282.5L325.4 288.2L332.0 281.7z"/>
<path fill="#ef0000" d="M349.8 111.9L343.2 109.9L345.6 117.8L352.2 119.5z"/>
<path fill="#10ffef" d="M336.7 290.2L330.2 298.8L332.6 303.5L339.1 294.2z"/>
<path fill="#8fff70" d="M470.1 251.4L463.5 247.1L465.9 249.2L472.5 254.6z"/>
<path fill="#8fff70" d="M324.2 255.6L317.6 253.9L320.0 258.5L326.6 258.8z"/>
<path fill="#50ffaf" d="M327.2 272.6L320.6 276.6L323.0 282.5L329.6 277.2z"/>
<path fill="#afff50" d="M177.6 239.6L171.1 250.1L173.4 253.3L180.0 242.7z"/>
<path fill="#0000ef" d="M401.3 249.1L394.7 250.3L397.1 244.1L403.7 243.0z"/>
<path fill="#10ffef" d="M339.1 294.2L332.6 303.5L335.0 307.9L341.5 298.0z"/>
<path fill="#30ffcf" d="M239.3 289.4L232.7 289.6L235.1 299.3L241.7 300.0z"/>
<path fill="#8fff70" d="M326.6 258.8L320.0 258.5L322.4 263.2L329.0 262.0z"/>
<path fill="#ff1000" d="M339.0 117.2L332.4 117.7L334.8 127.1L341.4 126.4z"/>
<path fill="#70ff8f" d="M324.8 267.9L318.2 270.5L320.6 276.6L327.2 272.6z"/>
<path fill="#ff1000" d="M325.9 119.5L319.3 122.5L321.7 131.5L328.3 128.8z"/>
<path fill="#0000ef" d="M233.2 195.7L226.6 196.2L229.0 190.8L235.6 190.7z"/>
<path fill="#0000ef" d="M200.3 202.7L193.7 205.4L196.1 201.6L202.7 198.2z"/>
<path fill="#0000ef" d="M282.3 204.2L275.7 198.3L278.1 199.3L284.7 205.9z"/>
<path fill="#efff10" d="M298.4 221.5L291.8 213.6L294.2 217.0L300.8 224.9z"/>
<path fill="#ffef00" d="M183.0 210.0L176.4 214.8L178.8 214.4L185.4 208.5z"/>
<path fill="#0000ef" d="M394.7 250.3L388.2 251.4L390.5 245.4L397.1 244.1z"/>
<path fill="#70ff8f" d="M302.6 266.8L296.1 267.9L298.5 277.8L305.0 275.5z"/>
<path fill="#70ff8f" d="M309.2 265.6L302.6 266.8L305.0 275.5L311.6 273.1z"/>
<path fill="#70ff8f" d="M296.1 267.9L289.5 269.1L291.9 279.9L298.5 277.8z"/>
<path fill="#00cfff" d="M233.9 329.0L227.3 322.4L229.7 326.7L236.3 333.8z"/>
<path fill="#0000ef" d="M443.2 241.0L436.6 240.9L439.0 238.8L445.6 240.1z"/>
<path fill="#70ff8f" d="M315.8 264.4L309.2 265.6L311.6 273.1L318.2 270.5z"/>
<path fill="#00cfff" d="M231.5 323.5L224.9 317.6L227.3 322.4L233.9 329.0z"/>
<path fill="#50ffaf" d="M289.5 269.1L282.9 270.3L285.3 281.9L291.9 279.9z"/>
<path fill="#10ffef" d="M341.5 298.0L335.0 307.9L337.4 311.8L343.9 301.6z"/>
<path fill="#ff1000" d="M332.4 117.7L325.9 119.5L328.3 128.8L334.8 127.1z"/>
<path fill="#70ff8f" d="M322.4 263.2L315.8 264.4L318.2 270.5L324.8 267.9z"/>
<path fill="#0000ef" d="M388.2 251.4L381.6 252.6L384.0 246.9L390.5 245.4z"/>
<path fill="#50ffaf" d="M282.9 270.3L276.3 271.5L278.7 283.6L285.3 281.9z"/>
<path fill="#70ff8f" d="M329.0 262.0L322.4 263.2L324.8 267.9L331.4 265.3z"/>
<path fill="#efff10" d="M178.8 214.4L172.2 220.7L174.6 221.7L181.2 214.4z"/>
<path fill="#00cfff" d="M236.3 333.8L229.7 326.7L232.1 330.6L238.7 338.1z"/>
<path fill="#ef0000" d="M307.9 112.5L301.3 118.4L303.7 124.5L310.3 119.0z"/>
<path fill="#8fff70" d="M335.5 260.9L329.0 262.0L331.4 265.3L337.9 262.6z"/>
<path fill="#0000ef" d="M381.6 252.6L375.0 253.8L377.4 248.7L384.0 246.9z"/>
<path fill="#afff50" d="M180.0 242.7L173.4 253.3L175.8 256.5L182.4 246.1z"/>
<path fill="#00efff" d="M229.1 317.5L222.5 312.5L224.9 317.6L231.5 323.5z"/>
<path fill="#50ffaf" d="M276.3 271.5L269.8 272.7L272.2 285.2L278.7 283.6z"/>
<path fill="#8fff70" d="M342.1 259.7L335.5 260.9L337.9 262.6L344.5 260.0z"/>
<path fill="#0000ef" d="M226.6 196.2L220.1 197.2L222.5 191.7L229.0 190.8z"/>
<path fill="#0000ef" d="M206.9 200.4L200.3 202.7L202.7 198.2L209.3 195.4z"/>
<path fill="#8fff70" d="M472.5 254.6L465.9 249.2L468.3 251.5L474.9 257.9z"/>
<path fill="#0000ef" d="M375.0 253.8L368.4 255.0L370.8 250.6L377.4 248.7z"/>
<path fill="#8fff70" d="M348.7 258.5L342.1 259.7L344.5 260.0L351.1 257.5z"/>
<path fill="#8fff70" d="M320.0 258.5L313.4 258.3L315.8 264.4L322.4 263.2z"/>
<path fill="#10ffef" d="M228.5 298.3L221.9 297.0L224.3 304.1L230.9 306.6z"/>
<path fill="#efff10" d="M300.8 224.9L294.2 217.0L296.6 220.9L303.2 228.5z"/>
<path fill="#0000ef" d="M368.4 255.0L361.8 256.2L364.2 252.8L370.8 250.6z"/>
<path fill="#0000ef" d="M355.3 257.3L348.7 258.5L351.1 257.5L357.7 255.1z"/>
<path fill="#0000ef" d="M255.3 193.8L248.8 192.2L251.2 188.9L257.7 191.3z"/>
<path fill="#0000ef" d="M361.8 256.2L355.3 257.3L357.7 255.1L364.2 252.8z"/>
<path fill="#cf0000" d="M347.4 105.5L340.8 103.2L343.2 109.9L349.8 111.9z"/>
<path fill="#efff10" d="M177.0 223.0L170.4 231.6L172.8 234.1L179.4 224.7z"/>
<path fill="#50ffaf" d="M269.8 272.7L263.2 273.8L265.6 286.4L272.2 285.2z"/>
<path fill="#cf0000" d="M303.1 103.4L296.6 109.5L299.0 113.4L305.5 107.3z"/>
<path fill="#70ff8f" d="M331.4 265.3L324.8 267.9L327.2 272.6L333.7 268.5z"/>
<path fill="#0000ef" d="M220.1 197.2L213.5 198.6L215.9 193.2L222.5 191.7z"/>
<path fill="#0000ef" d="M213.5 198.6L206.9 200.4L209.3 195.4L215.9 193.2z"/>
<path fill="#10ffef" d="M343.9 301.6L337.4 311.8L339.8 315.2L346.3 304.9z"/>
<path fill="#ef0000" d="M305.5 107.3L299.0 113.4L301.3 118.4L307.9 112.5z"/>
<path fill="#00cfff" d="M238.7 338.1L232.1 330.6L234.5 334.1L241.1 341.6z"/>
<path fill="#8fff70" d="M317.6 253.9L311.0 252.2L313.4 258.3L320.0 258.5z"/>
<path fill="#ef0000" d="M316.9 114.6L310.3 119.0L312.7 126.6L319.3 122.5z"/>
<path fill="#10ffef" d="M226.7 311.0L220.1 307.1L222.5 312.5L229.1 317.5z"/>
<path fill="#30ffcf" d="M232.7 289.6L226.1 289.6L228.5 298.3L235.1 299.3z"/>
<path fill="#50ffaf" d="M263.2 273.8L256.6 275.0L259.0 287.5L265.6 286.4z"/>
<path fill="#ef0000" d="M343.2 109.9L336.6 109.1L339.0 117.2L345.6 117.8z"/>
<path fill="#efff10" d="M303.2 228.5L296.6 220.9L299.0 225.3L305.6 232.3z"/>
<path fill="#afff50" d="M461.1 245.1L454.5 242.1L456.9 242.9L463.5 247.1z"/>
<path fill="#afff50" d="M315.2 249.3L308.6 246.3L311.0 252.2L317.6 253.9z"/>
<path fill="#af0000" d="M342.6 96.4L336.0 94.0L338.4 97.9L345.0 100.3z"/>
<path fill="#70ff8f" d="M333.7 268.5L327.2 272.6L329.6 277.2L336.1 271.7z"/>
<path fill="#afff50" d="M182.4 246.1L175.8 256.5L178.2 259.8L184.8 249.7z"/>
<path fill="#8fff70" d="M313.4 258.3L306.8 258.1L309.2 265.6L315.8 264.4z"/>
<path fill="#cf0000" d="M345.0 100.3L338.4 97.9L340.8 103.2L347.4 105.5z"/>
<path fill="#0000ef" d="M436.6 240.9L430.0 241.0L432.4 237.7L439.0 238.8z"/>
<path fill="#efff10" d="M305.6 232.3L299.0 225.3L301.4 230.0L308.0 236.3z"/>
<path fill="#50ffaf" d="M256.6 275.0L250.0 276.2L252.4 288.3L259.0 287.5z"/>
<path fill="#afff50" d="M312.8 244.8L306.2 240.6L308.6 246.3L315.2 249.3z"/>
<path fill="#0000ef" d="M452.1 241.6L445.6 240.1L448.0 239.3L454.5 242.1z"/>
<path fill="#cfff30" d="M308.0 236.3L301.4 230.0L303.8 235.1L310.4 240.4z"/>
<path fill="#cfff30" d="M310.4 240.4L303.8 235.1L306.2 240.6L312.8 244.8z"/>
<path fill="#afff50" d="M474.9 257.9L468.3 251.5L470.7 253.9L477.3 261.1z"/>
<path fill="#8fff70" d="M337.9 262.6L331.4 265.3L333.7 268.5L340.3 264.4z"/>
<path fill="#0000ef" d="M284.7 205.9L278.1 199.3L280.5 200.9L287.1 208.0z"/>
<path fill="#70ff8f" d="M336.1 271.7L329.6 277.2L332.0 281.7L338.5 275.0z"/>
<path fill="#0000ef" d="M273.3 197.9L266.7 193.4L269.1 193.0L275.7 198.3z"/>
<path fill="#10ffef" d="M224.3 304.1L217.7 301.4L220.1 307.1L226.7 311.0z"/>
<path fill="#0000ef" d="M189.6 205.6L183.0 210.0L185.4 208.5L192.0 203.1z"/>
<path fill="#50ffaf" d="M250.0 276.2L243.4 277.4L245.8 289.0L252.4 288.3z"/>
<path fill="#8fff70" d="M306.8 258.1L300.2 258.0L302.6 266.8L309.2 265.6z"/>
<path fill="#afff50" d="M184.8 249.7L178.2 259.8L180.6 263.0L187.2 253.5z"/>
<path fill="#ef0000" d="M323.5 111.4L316.9 114.6L319.3 122.5L325.9 119.5z"/>
<path fill="#0000ef" d="M264.3 194.4L257.7 191.3L260.1 189.5L266.7 193.4z"/>
<path fill="#cf0000" d="M336.6 109.1L330.1 109.6L332.4 117.7L339.0 117.2z"/>
<path fill="#efff10" d="M179.4 224.7L172.8 234.1L175.2 236.7L181.8 226.9z"/>
<path fill="#cf0000" d="M314.5 107.9L307.9 112.5L310.3 119.0L316.9 114.6z"/>
<path fill="#70ff8f" d="M338.5 275.0L332.0 281.7L334.4 286.0L340.9 278.2z"/>
<path fill="#50ffaf" d="M226.1 289.6L219.5 289.6L221.9 297.0L228.5 298.3z"/>
<path fill="#50ffaf" d="M243.4 277.4L236.9 278.5L239.3 289.4L245.8 289.0z"/>
<path fill="#cf0000" d="M330.1 109.6L323.5 111.4L325.9 119.5L332.4 117.7z"/>
<path fill="#afff50" d="M311.0 252.2L304.4 250.7L306.8 258.1L313.4 258.3z"/>
<path fill="#cf0000" d="M340.8 103.2L334.2 102.3L336.6 109.1L343.2 109.9z"/>
<path fill="#0000ef" d="M248.8 192.2L242.2 191.1L244.6 187.2L251.2 188.9z"/>
<path fill="#8fff70" d="M344.5 260.0L337.9 262.6L340.3 264.4L346.9 260.4z"/>
<path fill="#ffef00" d="M181.2 214.4L174.6 221.7L177.0 223.0L183.6 214.8z"/>
<path fill="#0000ef" d="M430.0 241.0L423.4 241.2L425.8 237.0L432.4 237.7z"/>
<path fill="#8fff70" d="M300.2 258.0L293.7 258.1L296.1 267.9L302.6 266.8z"/>
<path fill="#afff50" d="M187.2 253.5L180.6 263.0L183.0 266.2L189.6 257.5z"/>
<path fill="#30ffcf" d="M221.9 297.0L215.3 295.4L217.7 301.4L224.3 304.1z"/>
<path fill="#afff50" d="M477.3 261.1L470.7 253.9L473.1 256.6L479.7 264.3z"/>
<path fill="#af0000" d="M309.7 98.7L303.1 103.4L305.5 107.3L312.1 102.6z"/>
<path fill="#70ff8f" d="M340.9 278.2L334.4 286.0L336.7 290.2L343.3 281.4z"/>
<path fill="#cf0000" d="M312.1 102.6L305.5 107.3L307.9 112.5L314.5 107.9z"/>
<path fill="#70ff8f" d="M236.9 278.5L230.3 279.7L232.7 289.6L239.3 289.4z"/>
<path fill="#8fff70" d="M340.3 264.4L333.7 268.5L336.1 271.7L342.7 266.3z"/>
<path fill="#ffcf00" d="M185.4 208.5L178.8 214.4L181.2 214.4L187.8 207.5z"/>
<path fill="#0000ef" d="M463.5 247.1L456.9 242.9L459.3 243.9L465.9 249.2z"/>
<path fill="#af0000" d="M336.0 94.0L329.4 92.9L331.8 96.9L338.4 97.9z"/>
<path fill="#0000ef" d="M287.1 208.0L280.5 200.9L282.9 203.2L289.4 210.6z"/>
<path fill="#8fff70" d="M293.7 258.1L287.1 258.3L289.5 269.1L296.1 267.9z"/>
<path fill="#af0000" d="M338.4 97.9L331.8 96.9L334.2 102.3L340.8 103.2z"/>
<path fill="#8fff70" d="M189.6 257.5L183.0 266.2L185.4 269.5L192.0 261.6z"/>
<path fill="#efff10" d="M181.8 226.9L175.2 236.7L177.6 239.6L184.2 229.4z"/>
<path fill="#afff50" d="M351.1 257.5L344.5 260.0L346.9 260.4L353.5 256.6z"/>
<path fill="#cfff30" d="M308.6 246.3L302.0 243.5L304.4 250.7L311.0 252.2z"/>
<path fill="#cf0000" d="M321.1 104.6L314.5 107.9L316.9 114.6L323.5 111.4z"/>
<path fill="#0000ef" d="M196.1 201.6L189.6 205.6L192.0 203.1L198.5 198.3z"/>
<path fill="#50ffaf" d="M343.3 281.4L336.7 290.2L339.1 294.2L345.7 284.7z"/>
<path fill="#70ff8f" d="M230.3 279.7L223.7 280.9L226.1 289.6L232.7 289.6z"/>
<path fill="#0000ef" d="M445.6 240.1L439.0 238.8L441.4 236.9L448.0 239.3z"/>
<path fill="#af0000" d="M334.2 102.3L327.7 102.8L330.1 109.6L336.6 109.1z"/>
<path fill="#0000ef" d="M423.4 241.2L416.9 241.6L419.3 236.7L425.8 237.0z"/>
<path fill="#afff50" d="M479.7 264.3L473.1 256.6L475.5 259.5L482.1 267.6z"/>
<path fill="#50ffaf" d="M219.5 289.6L213.0 289.4L215.3 295.4L221.9 297.0z"/>
<path fill="#afff50" d="M287.1 258.3L280.5 258.7L282.9 270.3L289.5 269.1z"/>
<path fill="#afff50" d="M304.4 250.7L297.9 249.4L300.2 258.0L306.8 258.1z"/>
<path fill="#8fff70" d="M192.0 261.6L185.4 269.5L187.8 272.7L194.4 266.0z"/>
<path fill="#af0000" d="M327.7 102.8L321.1 104.6L323.5 111.4L330.1 109.6z"/>
<path fill="#af0000" d="M316.3 95.3L309.7 98.7L312.1 102.6L318.7 99.2z"/>
<path fill="#0000ef" d="M242.2 191.1L235.6 190.7L238.0 186.3L244.6 187.2z"/>
<path fill="#0000ef" d="M454.5 242.1L448.0 239.3L450.4 238.9L456.9 242.9z"/>
<path fill="#50ffaf" d="M345.7 284.7L339.1 294.2L341.5 298.0L348.1 287.9z"/>
<path fill="#af0000" d="M318.7 99.2L312.1 102.6L314.5 107.9L321.1 104.6z"/>
<path fill="#8fff70" d="M342.7 266.3L336.1 271.7L338.5 275.0L345.1 268.3z"/>
<path fill="#70ff8f" d="M223.7 280.9L217.1 282.1L219.5 289.6L226.1 289.6z"/>
<path fill="#0000ef" d="M357.7 255.1L351.1 257.5L353.5 256.6L360.1 252.9z"/>
<path fill="#0000ef" d="M275.7 198.3L269.1 193.0L271.5 193.3L278.1 199.3z"/>
<path fill="#afff50" d="M280.5 258.7L273.9 259.3L276.3 271.5L282.9 270.3z"/>
<path fill="#8f0000" d="M329.4 92.9L322.9 93.4L325.3 97.3L331.8 96.9z"/>
<path fill="#af0000" d="M331.8 96.9L325.3 97.3L327.7 102.8L334.2 102.3z"/>
<path fill="#efff10" d="M306.2 240.6L299.6 236.7L302.0 243.5L308.6 246.3z"/>
<path fill="#ffcf00" d="M289.4 210.6L282.9 203.2L285.3 206.0L291.8 213.6z"/>
<path fill="#8fff70" d="M194.4 266.0L187.8 272.7L190.2 275.9L196.8 270.5z"/>
<path fill="#efff10" d="M184.2 229.4L177.6 239.6L180.0 242.7L186.6 232.4z"/>
<path fill="#0000ef" d="M416.9 241.6L410.3 242.2L412.7 236.7L419.3 236.7z"/>
<path fill="#30ffcf" d="M220.1 307.1L213.6 302.9L216.0 307.2L222.5 312.5z"/>
<path fill="#30ffcf" d="M222.5 312.5L216.0 307.2L218.4 311.4L224.9 317.6z"/>
<path fill="#8f0000" d="M322.9 93.4L316.3 95.3L318.7 99.2L325.3 97.3z"/>
<path fill="#afff50" d="M346.9 260.4L340.3 264.4L342.7 266.3L349.3 261.0z"/>
<path fill="#afff50" d="M482.1 267.6L475.5 259.5L477.9 262.6L484.5 270.8z"/>
<path fill="#ffcf00" d="M183.6 214.8L177.0 223.0L179.4 224.7L186.0 215.8z"/>
<path fill="#af0000" d="M325.3 97.3L318.7 99.2L321.1 104.6L327.7 102.8z"/>
<path fill="#50ffaf" d="M217.7 301.4L211.2 298.4L213.6 302.9L220.1 307.1z"/>
<path fill="#afff50" d="M273.9 259.3L267.4 260.2L269.8 272.7L276.3 271.5z"/>
<path fill="#10ffef" d="M224.9 317.6L218.4 311.4L220.7 315.4L227.3 322.4z"/>
<path fill="#0000ef" d="M257.7 191.3L251.2 188.9L253.6 186.3L260.1 189.5z"/>
<path fill="#0000ef" d="M202.7 198.2L196.1 201.6L198.5 198.3L205.1 194.3z"/>
<path fill="#0000ef" d="M465.9 249.2L459.3 243.9L461.7 245.2L468.3 251.5z"/>
<path fill="#70ff8f" d="M217.1 282.1L210.6 283.3L213.0 289.4L219.5 289.6z"/>
<path fill="#0000ef" d="M364.2 252.8L357.7 255.1L360.1 252.9L366.6 249.5z"/>
<path fill="#50ffaf" d="M348.1 287.9L341.5 298.0L343.9 301.6L350.5 291.1z"/>
<path fill="#8fff70" d="M196.8 270.5L190.2 275.9L192.6 279.2L199.2 275.1z"/>
<path fill="#50ffaf" d="M215.3 295.4L208.8 293.8L211.2 298.4L217.7 301.4z"/>
<path fill="#10ffef" d="M227.3 322.4L220.7 315.4L223.1 319.2L229.7 326.7z"/>
<path fill="#afff50" d="M267.4 260.2L260.8 261.2L263.2 273.8L269.8 272.7z"/>
<path fill="#cfff30" d="M297.9 249.4L291.3 248.4L293.7 258.1L300.2 258.0z"/>
<path fill="#efff10" d="M303.8 235.1L297.2 230.2L299.6 236.7L306.2 240.6z"/>
<path fill="#0000ef" d="M410.3 242.2L403.7 243.0L406.1 237.2L412.7 236.7z"/>
<path fill="#70ff8f" d="M213.0 289.4L206.4 289.1L208.8 293.8L215.3 295.4z"/>
<path fill="#ffcf00" d="M291.8 213.6L285.3 206.0L287.7 209.6L294.2 217.0z"/>
<path fill="#0000ef" d="M266.7 193.4L260.1 189.5L262.5 188.4L269.1 193.0z"/>
<path fill="#0000ef" d="M235.6 190.7L229.0 190.8L231.4 186.1L238.0 186.3z"/>
<path fill="#efff10" d="M186.6 232.4L180.0 242.7L182.4 246.1L189.0 235.9z"/>
<path fill="#8fff70" d="M345.1 268.3L338.5 275.0L340.9 278.2L347.5 270.4z"/>
<path fill="#8fff70" d="M199.2 275.1L192.6 279.2L195.0 282.4L201.6 279.7z"/>
<path fill="#afff50" d="M260.8 261.2L254.2 262.5L256.6 275.0L263.2 273.8z"/>
<path fill="#0000ef" d="M370.8 250.6L364.2 252.8L366.6 249.5L373.2 246.4z"/>
<path fill="#ffaf00" d="M192.0 203.1L185.4 208.5L187.8 207.5L194.4 201.3z"/>
<path fill="#10ffef" d="M229.7 326.7L223.1 319.2L225.5 322.8L232.1 330.6z"/>
<path fill="#0000ef" d="M439.0 238.8L432.4 237.7L434.8 234.8L441.4 236.9z"/>
<path fill="#efff10" d="M302.0 243.5L295.5 241.1L297.9 249.4L304.4 250.7z"/>
<path fill="#70ff8f" d="M210.6 283.3L204.0 284.4L206.4 289.1L213.0 289.4z"/>
<path fill="#afff50" d="M254.2 262.5L247.6 264.0L250.0 276.2L256.6 275.0z"/>
<path fill="#ffef00" d="M301.4 230.0L294.8 224.2L297.2 230.2L303.8 235.1z"/>
<path fill="#50ffaf" d="M350.5 291.1L343.9 301.6L346.3 304.9L352.9 294.3z"/>
<path fill="#0000ef" d="M209.3 195.4L202.7 198.2L205.1 194.3L211.7 191.0z"/>
<path fill="#0000ef" d="M403.7 243.0L397.1 244.1L399.5 238.2L406.1 237.2z"/>
<path fill="#ffcf00" d="M294.2 217.0L287.7 209.6L290.1 213.8L296.6 220.9z"/>
<path fill="#8fff70" d="M201.6 279.7L195.0 282.4L197.4 285.6L204.0 284.4z"/>
<path fill="#0000ef" d="M377.4 248.7L370.8 250.6L373.2 246.4L379.8 243.7z"/>
<path fill="#ffaf00" d="M187.8 207.5L181.2 214.4L183.6 214.8L190.2 207.1z"/>
<path fill="#afff50" d="M247.6 264.0L241.0 265.8L243.4 277.4L250.0 276.2z"/>
<path fill="#8fff70" d="M208.2 277.1L201.6 279.7L204.0 284.4L210.6 283.3z"/>
<path fill="#efff10" d="M189.0 235.9L182.4 246.1L184.8 249.7L191.4 239.8z"/>
<path fill="#afff50" d="M241.0 265.8L234.5 267.7L236.9 278.5L243.4 277.4z"/>
<path fill="#ffcf00" d="M299.0 225.3L292.5 218.7L294.8 224.2L301.4 230.0z"/>
<path fill="#8fff70" d="M214.7 274.6L208.2 277.1L210.6 283.3L217.1 282.1z"/>
<path fill="#0000ef" d="M397.1 244.1L390.5 245.4L392.9 239.6L399.5 238.2z"/>
<path fill="#0000ef" d="M229.0 190.8L222.5 191.7L224.9 186.9L231.4 186.1z"/>
<path fill="#ffcf00" d="M296.6 220.9L290.1 213.8L292.5 218.7L299.0 225.3z"/>
<path fill="#8fff70" d="M234.5 267.7L227.9 269.9L230.3 279.7L236.9 278.5z"/>
<path fill="#8fff70" d="M221.3 272.2L214.7 274.6L217.1 282.1L223.7 280.9z"/>
<path fill="#8fff70" d="M227.9 269.9L221.3 272.2L223.7 280.9L230.3 279.7z"/>
<path fill="#0000ef" d="M384.0 246.9L377.4 248.7L379.8 243.7L386.4 241.5z"/>
<path fill="#0000ef" d="M390.5 245.4L384.0 246.9L386.4 241.5L392.9 239.6z"/>
<path fill="#10ffef" d="M232.1 330.6L225.5 322.8L227.9 326.1L234.5 334.1z"/>
<path fill="#cfff30" d="M353.5 256.6L346.9 260.4L349.3 261.0L355.9 255.8z"/>
<path fill="#0000ef" d="M215.9 193.2L209.3 195.4L211.7 191.0L218.3 188.5z"/>
<path fill="#8fff70" d="M205.8 271.1L199.2 275.1L201.6 279.7L208.2 277.1z"/>
<path fill="#70ff8f" d="M204.0 284.4L197.4 285.6L199.8 288.8L206.4 289.1z"/>
<path fill="#cfff30" d="M291.3 248.4L284.7 247.7L287.1 258.3L293.7 258.1z"/>
<path fill="#0000ef" d="M278.1 199.3L271.5 193.3L273.9 194.5L280.5 200.9z"/>
<path fill="#0000ef" d="M222.5 191.7L215.9 193.2L218.3 188.5L224.9 186.9z"/>
<path fill="#0000ef" d="M468.3 251.5L461.7 245.2L464.1 246.9L470.7 253.9z"/>
<path fill="#ffcf00" d="M186.0 215.8L179.4 224.7L181.8 226.9L188.4 217.4z"/>
<path fill="#efff10" d="M191.4 239.8L184.8 249.7L187.2 253.5L193.8 244.1z"/>
<path fill="#8fff70" d="M347.5 270.4L340.9 278.2L343.3 281.4L349.9 272.7z"/>
<path fill="#afff50" d="M349.3 261.0L342.7 266.3L345.1 268.3L351.7 261.7z"/>
<path fill="#afff50" d="M203.4 265.1L196.8 270.5L199.2 275.1L205.8 271.1z"/>
<path fill="#0000ef" d="M456.9 242.9L450.4 238.9L452.8 238.9L459.3 243.9z"/>
<path fill="#70ff8f" d="M206.4 289.1L199.8 288.8L202.2 292.1L208.8 293.8z"/>
<path fill="#efff10" d="M193.8 244.1L187.2 253.5L189.6 257.5L196.2 248.9z"/>
<path fill="#afff50" d="M201.0 259.4L194.4 266.0L196.8 270.5L203.4 265.1z"/>
<path fill="#0000ef" d="M448.0 239.3L441.4 236.9L443.8 235.4L450.4 238.9z"/>
<path fill="#cfff30" d="M196.2 248.9L189.6 257.5L192.0 261.6L198.6 254.0z"/>
<path fill="#cfff30" d="M198.6 254.0L192.0 261.6L194.4 266.0L201.0 259.4z"/>
<path fill="#0000ef" d="M251.2 188.9L244.6 187.2L247.0 184.0L253.6 186.3z"/>
<path fill="#afff50" d="M212.3 267.2L205.8 271.1L208.2 277.1L214.7 274.6z"/>
<path fill="#ffef00" d="M299.6 236.7L293.1 233.1L295.5 241.1L302.0 243.5z"/>
<path fill="#70ff8f" d="M208.8 293.8L202.2 292.1L204.6 295.3L211.2 298.4z"/>
<path fill="#0000ef" d="M432.4 237.7L425.8 237.0L428.2 233.2L434.8 234.8z"/>
<path fill="#efff10" d="M284.7 247.7L278.1 247.3L280.5 258.7L287.1 258.3z"/>
<path fill="#efff10" d="M295.5 241.1L288.9 239.0L291.3 248.4L297.9 249.4z"/>
<path fill="#0000ef" d="M198.5 198.3L192.0 203.1L194.4 201.3L200.9 195.8z"/>
<path fill="#afff50" d="M349.9 272.7L343.3 281.4L345.7 284.7L352.3 275.1z"/>
<path fill="#efff10" d="M360.1 252.9L353.5 256.6L355.9 255.8L362.5 251.0z"/>
<path fill="#70ff8f" d="M211.2 298.4L204.6 295.3L207.0 298.5L213.6 302.9z"/>
<path fill="#0000ef" d="M470.7 253.9L464.1 246.9L466.5 249.0L473.1 256.6z"/>
<path fill="#afff50" d="M218.9 263.5L212.3 267.2L214.7 274.6L221.3 272.2z"/>
<path fill="#ffcf00" d="M188.4 217.4L181.8 226.9L184.2 229.4L190.8 219.6z"/>
<path fill="#0000ef" d="M280.5 200.9L273.9 194.5L276.3 196.4L282.9 203.2z"/>
<path fill="#0000ef" d="M269.1 193.0L262.5 188.4L264.9 188.1L271.5 193.3z"/>
<path fill="#cfff30" d="M209.9 260.0L203.4 265.1L205.8 271.1L212.3 267.2z"/>
<path fill="#efff10" d="M278.1 247.3L271.5 247.4L273.9 259.3L280.5 258.7z"/>
<path fill="#70ff8f" d="M213.6 302.9L207.0 298.5L209.4 301.8L216.0 307.2z"/>
<path fill="#ffaf00" d="M190.2 207.1L183.6 214.8L186.0 215.8L192.6 207.5z"/>
<path fill="#cfff30" d="M351.7 261.7L345.1 268.3L347.5 270.4L354.1 262.7z"/>
<path fill="#0000ef" d="M260.1 189.5L253.6 186.3L256.0 184.6L262.5 188.4z"/>
<path fill="#ffcf00" d="M297.2 230.2L290.7 225.7L293.1 233.1L299.6 236.7z"/>
<path fill="#cfff30" d="M225.5 260.2L218.9 263.5L221.3 272.2L227.9 269.9z"/>
<path fill="#afff50" d="M352.3 275.1L345.7 284.7L348.1 287.9L354.7 277.8z"/>
<path fill="#ff8f00" d="M194.4 201.3L187.8 207.5L190.2 207.1L196.8 200.2z"/>
<path fill="#0000ef" d="M425.8 237.0L419.3 236.7L421.7 232.2L428.2 233.2z"/>
<path fill="#70ff8f" d="M216.0 307.2L209.4 301.8L211.8 305.0L218.4 311.4z"/>
<path fill="#efff10" d="M355.9 255.8L349.3 261.0L351.7 261.7L358.3 255.4z"/>
<path fill="#efff10" d="M271.5 247.4L265.0 247.9L267.4 260.2L273.9 259.3z"/>
<path fill="#0000ef" d="M459.3 243.9L452.8 238.9L455.1 239.4L461.7 245.2z"/>
<path fill="#0000ef" d="M244.6 187.2L238.0 186.3L240.4 182.7L247.0 184.0z"/>
<path fill="#0000ef" d="M366.6 249.5L360.1 252.9L362.5 251.0L369.0 246.6z"/>
<path fill="#0000ef" d="M473.1 256.6L466.5 249.0L468.9 251.6L475.5 259.5z"/>
<path fill="#efff10" d="M207.6 253.1L201.0 259.4L203.4 265.1L209.9 260.0z"/>
<path fill="#ffcf00" d="M190.8 219.6L184.2 229.4L186.6 232.4L193.2 222.5z"/>
<path fill="#cfff30" d="M232.1 257.1L225.5 260.2L227.9 269.9L234.5 267.7z"/>
<path fill="#ffef00" d="M288.9 239.0L282.3 237.4L284.7 247.7L291.3 248.4z"/>
<path fill="#0000ef" d="M205.1 194.3L198.5 198.3L200.9 195.8L207.5 191.1z"/>
<path fill="#ff7000" d="M282.9 203.2L276.3 196.4L278.7 199.2L285.3 206.0z"/>
<path fill="#efff10" d="M265.0 247.9L258.4 248.8L260.8 261.2L267.4 260.2z"/>
<path fill="#0000ef" d="M441.4 236.9L434.8 234.8L437.2 232.4L443.8 235.4z"/>
<path fill="#50ffaf" d="M218.4 311.4L211.8 305.0L214.2 308.2L220.7 315.4z"/>
<path fill="#efff10" d="M238.7 254.4L232.1 257.1L234.5 267.7L241.0 265.8z"/>
<path fill="#ffaf00" d="M294.8 224.2L288.3 218.9L290.7 225.7L297.2 230.2z"/>
<path fill="#efff10" d="M216.5 255.2L209.9 260.0L212.3 267.2L218.9 263.5z"/>
<path fill="#ffcf00" d="M293.1 233.1L286.5 230.1L288.9 239.0L295.5 241.1z"/>
<path fill="#afff50" d="M354.7 277.8L348.1 287.9L350.5 291.1L357.1 280.7z"/>
<path fill="#efff10" d="M258.4 248.8L251.8 250.2L254.2 262.5L260.8 261.2z"/>
<path fill="#efff10" d="M245.2 252.1L238.7 254.4L241.0 265.8L247.6 264.0z"/>
<path fill="#efff10" d="M251.8 250.2L245.2 252.1L247.6 264.0L254.2 262.5z"/>
<path fill="#efff10" d="M205.2 246.7L198.6 254.0L201.0 259.4L207.6 253.1z"/>
<path fill="#ffcf00" d="M193.2 222.5L186.6 232.4L189.0 235.9L195.6 226.1z"/>
<path fill="#0000ef" d="M450.4 238.9L443.8 235.4L446.2 234.4L452.8 238.9z"/>
<path fill="#0000ef" d="M419.3 236.7L412.7 236.7L415.1 231.7L421.7 232.2z"/>
<path fill="#0000ef" d="M373.2 246.4L366.6 249.5L369.0 246.6L375.6 242.6z"/>
<path fill="#efff10" d="M475.5 259.5L468.9 251.6L471.3 254.6L477.9 262.6z"/>
<path fill="#50ffaf" d="M220.7 315.4L214.2 308.2L216.6 311.5L223.1 319.2z"/>
<path fill="#cfff30" d="M354.1 262.7L347.5 270.4L349.9 272.7L356.5 264.1z"/>
<path fill="#ff7000" d="M285.3 206.0L278.7 199.2L281.1 202.9L287.7 209.6z"/>
<path fill="#0000ef" d="M238.0 186.3L231.4 186.1L233.8 182.3L240.4 182.7z"/>
<path fill="#ffaf00" d="M292.5 218.7L285.9 212.7L288.3 218.9L294.8 224.2z"/>
<path fill="#ffef00" d="M202.8 240.7L196.2 248.9L198.6 254.0L205.2 246.7z"/>
<path fill="#ff8f00" d="M192.6 207.5L186.0 215.8L188.4 217.4L195.0 208.6z"/>
<path fill="#0000ef" d="M211.7 191.0L205.1 194.3L207.5 191.1L214.1 187.4z"/>
<path fill="#ffcf00" d="M195.6 226.1L189.0 235.9L191.4 239.8L198.0 230.3z"/>
<path fill="#0000ef" d="M271.5 193.3L264.9 188.1L267.3 188.8L273.9 194.5z"/>
<path fill="#afff50" d="M357.1 280.7L350.5 291.1L352.9 294.3L359.5 283.8z"/>
<path fill="#ff8f00" d="M287.7 209.6L281.1 202.9L283.5 207.4L290.1 213.8z"/>
<path fill="#ff8f00" d="M290.1 213.8L283.5 207.4L285.9 212.7L292.5 218.7z"/>
<path fill="#ffcf00" d="M200.4 235.2L193.8 244.1L196.2 248.9L202.8 240.7z"/>
<path fill="#ffcf00" d="M282.3 237.4L275.7 236.3L278.1 247.3L284.7 247.7z"/>
<path fill="#ffcf00" d="M198.0 230.3L191.4 239.8L193.8 244.1L200.4 235.2z"/>
<path fill="#50ffaf" d="M223.1 319.2L216.6 311.5L219.0 314.7L225.5 322.8z"/>
<path fill="#0000ef" d="M412.7 236.7L406.1 237.2L408.5 231.9L415.1 231.7z"/>
<path fill="#efff10" d="M223.1 250.8L216.5 255.2L218.9 263.5L225.5 260.2z"/>
<path fill="#0000ef" d="M379.8 243.7L373.2 246.4L375.6 242.6L382.2 239.2z"/>
<path fill="#0000ef" d="M461.7 245.2L455.1 239.4L457.5 240.4L464.1 246.9z"/>
<path fill="#ffef00" d="M362.5 251.0L355.9 255.8L358.3 255.4L364.8 249.5z"/>
<path fill="#0000ef" d="M253.6 186.3L247.0 184.0L249.4 181.8L256.0 184.6z"/>
<path fill="#0000ef" d="M231.4 186.1L224.9 186.9L227.2 183.0L233.8 182.3z"/>
<path fill="#ffef00" d="M214.1 247.2L207.6 253.1L209.9 260.0L216.5 255.2z"/>
<path fill="#0000ef" d="M218.3 188.5L211.7 191.0L214.1 187.4L220.7 184.7z"/>
<path fill="#ff7000" d="M200.9 195.8L194.4 201.3L196.8 200.2L203.3 194.1z"/>
<path fill="#efff10" d="M358.3 255.4L351.7 261.7L354.1 262.7L360.7 255.4z"/>
<path fill="#0000ef" d="M224.9 186.9L218.3 188.5L220.7 184.7L227.2 183.0z"/>
<path fill="#0000ef" d="M406.1 237.2L399.5 238.2L401.9 232.7L408.5 231.9z"/>
<path fill="#ffaf00" d="M290.7 225.7L284.1 221.8L286.5 230.1L293.1 233.1z"/>
<path fill="#0000ef" d="M386.4 241.5L379.8 243.7L382.2 239.2L388.8 236.4z"/>
<path fill="#ff7000" d="M196.8 200.2L190.2 207.1L192.6 207.5L199.1 199.9z"/>
<path fill="#0000ef" d="M262.5 188.4L256.0 184.6L258.3 183.9L264.9 188.1z"/>
<path fill="#50ffaf" d="M225.5 322.8L219.0 314.7L221.4 317.9L227.9 326.1z"/>
<path fill="#0000ef" d="M434.8 234.8L428.2 233.2L430.6 229.9L437.2 232.4z"/>
<path fill="#efff10" d="M356.5 264.1L349.9 272.7L352.3 275.1L358.9 265.8z"/>
<path fill="#0000ef" d="M399.5 238.2L392.9 239.6L395.3 234.2L401.9 232.7z"/>
<path fill="#0000ef" d="M392.9 239.6L386.4 241.5L388.8 236.4L395.3 234.2z"/>
<path fill="#ffaf00" d="M286.5 230.1L279.9 227.7L282.3 237.4L288.9 239.0z"/>
<path fill="#ffcf00" d="M275.7 236.3L269.1 235.9L271.5 247.4L278.1 247.3z"/>
<path fill="#ffef00" d="M229.7 246.8L223.1 250.8L225.5 260.2L232.1 257.1z"/>
<path fill="#ff8f00" d="M195.0 208.6L188.4 217.4L190.8 219.6L197.4 210.5z"/>
<path fill="#0000ef" d="M273.9 194.5L267.3 188.8L269.7 190.5L276.3 196.4z"/>
<path fill="#ffcf00" d="M211.7 239.8L205.2 246.7L207.6 253.1L214.1 247.2z"/>
<path fill="#0000ef" d="M464.1 246.9L457.5 240.4L459.9 242.0L466.5 249.0z"/>
<path fill="#0000ef" d="M452.8 238.9L446.2 234.4L448.6 234.0L455.1 239.4z"/>
<path fill="#ffcf00" d="M269.1 235.9L262.6 236.1L265.0 247.9L271.5 247.4z"/>
<path fill="#0000ef" d="M369.0 246.6L362.5 251.0L364.8 249.5L371.4 244.1z"/>
<path fill="#ffcf00" d="M236.3 243.4L229.7 246.8L232.1 257.1L238.7 254.4z"/>
<path fill="#0000ef" d="M443.8 235.4L437.2 232.4L439.6 230.5L446.2 234.4z"/>
<path fill="#ff8f00" d="M288.3 218.9L281.7 214.2L284.1 221.8L290.7 225.7z"/>
<path fill="#ffcf00" d="M220.7 241.9L214.1 247.2L216.5 255.2L223.1 250.8z"/>
<path fill="#efff10" d="M358.9 265.8L352.3 275.1L354.7 277.8L361.3 267.9z"/>
<path fill="#0000ef" d="M247.0 184.0L240.4 182.7L242.8 180.1L249.4 181.8z"/>
<path fill="#0000ef" d="M207.5 191.1L200.9 195.8L203.3 194.1L209.9 188.9z"/>
<path fill="#ff7000" d="M197.4 210.5L190.8 219.6L193.2 222.5L199.8 213.3z"/>
<path fill="#ffcf00" d="M262.6 236.1L256.0 236.9L258.4 248.8L265.0 247.9z"/>
<path fill="#ffcf00" d="M242.8 240.6L236.3 243.4L238.7 254.4L245.2 252.1z"/>
<path fill="#0000ef" d="M428.2 233.2L421.7 232.2L424.0 228.2L430.6 229.9z"/>
<path fill="#ffef00" d="M360.7 255.4L354.1 262.7L356.5 264.1L363.1 255.9z"/>
<path fill="#ffaf00" d="M209.3 233.0L202.8 240.7L205.2 246.7L211.7 239.8z"/>
<path fill="#ffcf00" d="M256.0 236.9L249.4 238.4L251.8 250.2L258.4 248.8z"/>
<path fill="#ffcf00" d="M249.4 238.4L242.8 240.6L245.2 252.1L251.8 250.2z"/>
<path fill="#ffaf00" d="M279.9 227.7L273.3 226.0L275.7 236.3L282.3 237.4z"/>
<path fill="#ff5000" d="M276.3 196.4L269.7 190.5L272.1 193.2L278.7 199.2z"/>
<path fill="#ff5000" d="M199.1 199.9L192.6 207.5L195.0 208.6L201.5 200.6z"/>
<path fill="#ffcf00" d="M364.8 249.5L358.3 255.4L360.7 255.4L367.2 248.5z"/>
<path fill="#ff7000" d="M285.9 212.7L279.3 207.5L281.7 214.2L288.3 218.9z"/>
<path fill="#0000ef" d="M466.5 249.0L459.9 242.0L462.3 244.2L468.9 251.6z"/>
<path fill="#ff8f00" d="M284.1 221.8L277.5 218.6L279.9 227.7L286.5 230.1z"/>
<path fill="#ff7000" d="M199.8 213.3L193.2 222.5L195.6 226.1L202.2 217.0z"/>
<path fill="#0000ef" d="M264.9 188.1L258.3 183.9L260.7 184.2L267.3 188.8z"/>
<path fill="#ffaf00" d="M206.9 226.9L200.4 235.2L202.8 240.7L209.3 233.0z"/>
<path fill="#efff10" d="M361.3 267.9L354.7 277.8L357.1 280.7L363.7 270.5z"/>
<path fill="#ff5000" d="M203.3 194.1L196.8 200.2L199.1 199.9L205.7 193.3z"/>
<path fill="#0000ef" d="M375.6 242.6L369.0 246.6L371.4 244.1L378.0 239.4z"/>
<path fill="#0000ef" d="M256.0 184.6L249.4 181.8L251.8 180.7L258.3 183.9z"/>
<path fill="#ff8f00" d="M202.2 217.0L195.6 226.1L198.0 230.3L204.5 221.5z"/>
<path fill="#ffaf00" d="M227.3 237.1L220.7 241.9L223.1 250.8L229.7 246.8z"/>
<path fill="#ff5000" d="M278.7 199.2L272.1 193.2L274.5 197.0L281.1 202.9z"/>
<path fill="#0000ef" d="M240.4 182.7L233.8 182.3L236.2 179.5L242.8 180.1z"/>
<path fill="#ff8f00" d="M204.5 221.5L198.0 230.3L200.4 235.2L206.9 226.9z"/>
<path fill="#0000ef" d="M214.1 187.4L207.5 191.1L209.9 188.9L216.5 184.8z"/>
<path fill="#ff5000" d="M283.5 207.4L276.9 201.8L279.3 207.5L285.9 212.7z"/>
<path fill="#ffaf00" d="M218.3 233.6L211.7 239.8L214.1 247.2L220.7 241.9z"/>
<path fill="#ff5000" d="M281.1 202.9L274.5 197.0L276.9 201.8L283.5 207.4z"/>
<path fill="#0000ef" d="M421.7 232.2L415.1 231.7L417.5 227.3L424.0 228.2z"/>
<path fill="#0000ef" d="M455.1 239.4L448.6 234.0L451.0 234.4L457.5 240.4z"/>
<path fill="#ff8f00" d="M273.3 226.0L266.8 225.0L269.1 235.9L275.7 236.3z"/>
<path fill="#ffcf00" d="M468.9 251.6L462.3 244.2L464.7 247.1L471.3 254.6z"/>
<path fill="#efff10" d="M363.7 270.5L357.1 280.7L359.5 283.8L366.1 273.5z"/>
<path fill="#ffcf00" d="M363.1 255.9L356.5 264.1L358.9 265.8L365.5 256.9z"/>
<path fill="#0000ef" d="M233.8 182.3L227.2 183.0L229.6 180.1L236.2 179.5z"/>
<path fill="#0000ef" d="M220.7 184.7L214.1 187.4L216.5 184.8L223.1 181.8z"/>
<path fill="#0000ef" d="M437.2 232.4L430.6 229.9L433.0 227.4L439.6 230.5z"/>
<path fill="#0000ef" d="M382.2 239.2L375.6 242.6L378.0 239.4L384.6 235.3z"/>
<path fill="#ff5000" d="M201.5 200.6L195.0 208.6L197.4 210.5L203.9 202.3z"/>
<path fill="#0000ef" d="M227.2 183.0L220.7 184.7L223.1 181.8L229.6 180.1z"/>
<path fill="#ffaf00" d="M233.9 233.0L227.3 237.1L229.7 246.8L236.3 243.4z"/>
<path fill="#ff7000" d="M281.7 214.2L275.1 210.5L277.5 218.6L284.1 221.8z"/>
<path fill="#0000ef" d="M446.2 234.4L439.6 230.5L442.0 229.4L448.6 234.0z"/>
<path fill="#0000ef" d="M415.1 231.7L408.5 231.9L410.9 227.2L417.5 227.3z"/>
<path fill="#0000ef" d="M267.3 188.8L260.7 184.2L263.1 185.6L269.7 190.5z"/>
<path fill="#ffaf00" d="M371.4 244.1L364.8 249.5L367.2 248.5L373.8 242.3z"/>
<path fill="#ff8f00" d="M215.9 226.0L209.3 233.0L211.7 239.8L218.3 233.6z"/>
<path fill="#ff8f00" d="M266.8 225.0L260.2 224.9L262.6 236.1L269.1 235.9z"/>
<path fill="#ff7000" d="M277.5 218.6L270.9 216.3L273.3 226.0L279.9 227.7z"/>
<path fill="#0000ef" d="M388.8 236.4L382.2 239.2L384.6 235.3L391.2 232.0z"/>
<path fill="#ff1000" d="M209.9 188.9L203.3 194.1L205.7 193.3L212.3 187.7z"/>
<path fill="#ffaf00" d="M367.2 248.5L360.7 255.4L363.1 255.9L369.6 248.2z"/>
<path fill="#0000ef" d="M249.4 181.8L242.8 180.1L245.2 178.6L251.8 180.7z"/>
<path fill="#ff8f00" d="M240.4 229.7L233.9 233.0L236.3 243.4L242.8 240.6z"/>
<path fill="#0000ef" d="M408.5 231.9L401.9 232.7L404.3 227.9L410.9 227.2z"/>
<path fill="#ff8f00" d="M224.9 228.1L218.3 233.6L220.7 241.9L227.3 237.1z"/>
<path fill="#ff3000" d="M205.7 193.3L199.1 199.9L201.5 200.6L208.1 193.6z"/>
<path fill="#0000ef" d="M395.3 234.2L388.8 236.4L391.2 232.0L397.7 229.5z"/>
<path fill="#ff7000" d="M260.2 224.9L253.6 225.6L256.0 236.9L262.6 236.1z"/>
<path fill="#ff5000" d="M203.9 202.3L197.4 210.5L199.8 213.3L206.3 205.0z"/>
<path fill="#0000ef" d="M457.5 240.4L451.0 234.4L453.4 235.5L459.9 242.0z"/>
<path fill="#0000ef" d="M401.9 232.7L395.3 234.2L397.7 229.5L404.3 227.9z"/>
<path fill="#ffcf00" d="M365.5 256.9L358.9 265.8L361.3 267.9L367.9 258.4z"/>
<path fill="#0000ef" d="M258.3 183.9L251.8 180.7L254.2 180.7L260.7 184.2z"/>
<path fill="#ff8f00" d="M247.0 227.3L240.4 229.7L242.8 240.6L249.4 238.4z"/>
<path fill="#ff7000" d="M253.6 225.6L247.0 227.3L249.4 238.4L256.0 236.9z"/>
<path fill="#ff7000" d="M213.5 219.3L206.9 226.9L209.3 233.0L215.9 226.0z"/>
<path fill="#ff5000" d="M279.3 207.5L272.7 203.3L275.1 210.5L281.7 214.2z"/>
<path fill="#ff1000" d="M269.7 190.5L263.1 185.6L265.5 188.3L272.1 193.2z"/>
<path fill="#0000ef" d="M430.6 229.9L424.0 228.2L426.4 225.1L433.0 227.4z"/>
<path fill="#ff5000" d="M206.3 205.0L199.8 213.3L202.2 217.0L208.7 208.7z"/>
<path fill="#ff5000" d="M211.1 213.5L204.5 221.5L206.9 226.9L213.5 219.3z"/>
<path fill="#ff5000" d="M270.9 216.3L264.4 215.0L266.8 225.0L273.3 226.0z"/>
<path fill="#ef0000" d="M216.5 184.8L209.9 188.9L212.3 187.7L218.9 183.4z"/>
<path fill="#ff5000" d="M208.7 208.7L202.2 217.0L204.5 221.5L211.1 213.5z"/>
<path fill="#0000ef" d="M378.0 239.4L371.4 244.1L373.8 242.3L380.4 236.8z"/>
<path fill="#0000ef" d="M242.8 180.1L236.2 179.5L238.6 177.9L245.2 178.6z"/>
<path fill="#ff3000" d="M276.9 201.8L270.3 197.1L272.7 203.3L279.3 207.5z"/>
<path fill="#ff1000" d="M272.1 193.2L265.5 188.3L267.9 192.1L274.5 197.0z"/>
<path fill="#ff7000" d="M231.5 223.4L224.9 228.1L227.3 237.1L233.9 233.0z"/>
<path fill="#ff5000" d="M275.1 210.5L268.5 207.7L270.9 216.3L277.5 218.6z"/>
<path fill="#ffcf00" d="M367.9 258.4L361.3 267.9L363.7 270.5L370.2 260.7z"/>
<path fill="#ff1000" d="M274.5 197.0L267.9 192.1L270.3 197.1L276.9 201.8z"/>
<path fill="#ff7000" d="M222.5 219.9L215.9 226.0L218.3 233.6L224.9 228.1z"/>
<path fill="#0000ef" d="M459.9 242.0L453.4 235.5L455.8 237.4L462.3 244.2z"/>
<path fill="#0000ef" d="M448.6 234.0L442.0 229.4L444.4 229.2L451.0 234.4z"/>
<path fill="#ff1000" d="M208.1 193.6L201.5 200.6L203.9 202.3L210.5 195.1z"/>
<path fill="#ffaf00" d="M369.6 248.2L363.1 255.9L365.5 256.9L372.0 248.5z"/>
<path fill="#0000ef" d="M439.6 230.5L433.0 227.4L435.4 225.7L442.0 229.4z"/>
<path fill="#0000ef" d="M223.1 181.8L216.5 184.8L218.9 183.4L225.5 180.2z"/>
<path fill="#0000ef" d="M236.2 179.5L229.6 180.1L232.0 178.4L238.6 177.9z"/>
<path fill="#ef0000" d="M212.3 187.7L205.7 193.3L208.1 193.6L214.7 187.8z"/>
<path fill="#ef0000" d="M260.7 184.2L254.2 180.7L256.6 182.0L263.1 185.6z"/>
<path fill="#ff8f00" d="M373.8 242.3L367.2 248.5L369.6 248.2L376.2 241.2z"/>
<path fill="#ff5000" d="M264.4 215.0L257.8 214.6L260.2 224.9L266.8 225.0z"/>
<path fill="#0000ef" d="M229.6 180.1L223.1 181.8L225.5 180.2L232.0 178.4z"/>
<path fill="#0000ef" d="M424.0 228.2L417.5 227.3L419.9 223.7L426.4 225.1z"/>
<path fill="#0000ef" d="M251.8 180.7L245.2 178.6L247.6 178.4L254.2 180.7z"/>
<path fill="#ff5000" d="M238.0 219.7L231.5 223.4L233.9 233.0L240.4 229.7z"/>
<path fill="#ffcf00" d="M370.2 260.7L363.7 270.5L366.1 273.5L372.6 263.6z"/>
<path fill="#0000ef" d="M384.6 235.3L378.0 239.4L380.4 236.8L387.0 232.2z"/>
<path fill="#ff7000" d="M462.3 244.2L455.8 237.4L458.2 240.2L464.7 247.1z"/>
<path fill="#ff5000" d="M220.1 212.7L213.5 219.3L215.9 226.0L222.5 219.9z"/>
<path fill="#ff1000" d="M272.7 203.3L266.1 200.1L268.5 207.7L275.1 210.5z"/>
<path fill="#ff5000" d="M257.8 214.6L251.2 215.3L253.6 225.6L260.2 224.9z"/>
<path fill="#ff1000" d="M210.5 195.1L203.9 202.3L206.3 205.0L212.9 197.7z"/>
<path fill="#ff5000" d="M244.6 217.0L238.0 219.7L240.4 229.7L247.0 227.3z"/>
<path fill="#ff5000" d="M251.2 215.3L244.6 217.0L247.0 227.3L253.6 225.6z"/>
<path fill="#ff3000" d="M268.5 207.7L262.0 205.9L264.4 215.0L270.9 216.3z"/>
<path fill="#ff5000" d="M229.1 214.7L222.5 219.9L224.9 228.1L231.5 223.4z"/>
<path fill="#cf0000" d="M263.1 185.6L256.6 182.0L259.0 184.5L265.5 188.3z"/>
<path fill="#0000ef" d="M417.5 227.3L410.9 227.2L413.3 223.3L419.9 223.7z"/>
<path fill="#ff8f00" d="M372.0 248.5L365.5 256.9L367.9 258.4L374.4 249.6z"/>
<path fill="#ff3000" d="M217.7 206.5L211.1 213.5L213.5 219.3L220.1 212.7z"/>
<path fill="#0000ef" d="M391.2 232.0L384.6 235.3L387.0 232.2L393.6 228.4z"/>
<path fill="#cf0000" d="M218.9 183.4L212.3 187.7L214.7 187.8L221.3 183.2z"/>
<path fill="#ff1000" d="M212.9 197.7L206.3 205.0L208.7 208.7L215.3 201.5z"/>
<path fill="#0000ef" d="M451.0 234.4L444.4 229.2L446.8 229.9L453.4 235.5z"/>
<path fill="#0000ef" d="M245.2 178.6L238.6 177.9L241.0 177.5L247.6 178.4z"/>
<path fill="#ef0000" d="M270.3 197.1L263.7 193.6L266.1 200.1L272.7 203.3z"/>
<path fill="#ff1000" d="M215.3 201.5L208.7 208.7L211.1 213.5L217.7 206.5z"/>
<path fill="#ef0000" d="M214.7 187.8L208.1 193.6L210.5 195.1L217.1 189.0z"/>
<path fill="#0000ef" d="M433.0 227.4L426.4 225.1L428.8 222.9L435.4 225.7z"/>
<path fill="#cf0000" d="M265.5 188.3L259.0 184.5L261.4 188.4L267.9 192.1z"/>
<path fill="#0000ef" d="M410.9 227.2L404.3 227.9L406.7 224.0L413.3 223.3z"/>
<path fill="#0000ef" d="M397.7 229.5L391.2 232.0L393.6 228.4L400.1 225.7z"/>
<path fill="#ff7000" d="M380.4 236.8L373.8 242.3L376.2 241.2L382.8 235.1z"/>
<path fill="#ef0000" d="M267.9 192.1L261.4 188.4L263.7 193.6L270.3 197.1z"/>
<path fill="#cf0000" d="M254.2 180.7L247.6 178.4L250.0 179.6L256.6 182.0z"/>
<path fill="#0000ef" d="M404.3 227.9L397.7 229.5L400.1 225.7L406.7 224.0z"/>
<path fill="#ff1000" d="M262.0 205.9L255.4 205.3L257.8 214.6L264.4 215.0z"/>
<path fill="#ff3000" d="M235.6 210.6L229.1 214.7L231.5 223.4L238.0 219.7z"/>
<path fill="#ff7000" d="M376.2 241.2L369.6 248.2L372.0 248.5L378.6 241.0z"/>
<path fill="#0000ef" d="M442.0 229.4L435.4 225.7L437.8 224.9L444.4 229.2z"/>
<path fill="#cf0000" d="M225.5 180.2L218.9 183.4L221.3 183.2L227.9 179.9z"/>
<path fill="#ff1000" d="M226.7 207.1L220.1 212.7L222.5 219.9L229.1 214.7z"/>
<path fill="#0000ef" d="M238.6 177.9L232.0 178.4L234.4 178.0L241.0 177.5z"/>
<path fill="#ef0000" d="M266.1 200.1L259.6 198.0L262.0 205.9L268.5 207.7z"/>
<path fill="#ff8f00" d="M374.4 249.6L367.9 258.4L370.2 260.7L376.8 251.6z"/>
<path fill="#af0000" d="M232.0 178.4L225.5 180.2L227.9 179.9L234.4 178.0z"/>
<path fill="#ff1000" d="M255.4 205.3L248.8 205.9L251.2 215.3L257.8 214.6z"/>
<path fill="#cf0000" d="M217.1 189.0L210.5 195.1L212.9 197.7L219.5 191.6z"/>
<path fill="#ff1000" d="M242.2 207.7L235.6 210.6L238.0 219.7L244.6 217.0z"/>
<path fill="#0000ef" d="M453.4 235.5L446.8 229.9L449.2 231.5L455.8 237.4z"/>
<path fill="#ff1000" d="M248.8 205.9L242.2 207.7L244.6 217.0L251.2 215.3z"/>
<path fill="#cf0000" d="M221.3 183.2L214.7 187.8L217.1 189.0L223.7 184.3z"/>
<path fill="#af0000" d="M256.6 182.0L250.0 179.6L252.4 182.1L259.0 184.5z"/>
<path fill="#ef0000" d="M224.3 200.7L217.7 206.5L220.1 212.7L226.7 207.1z"/>
<path fill="#0000ef" d="M426.4 225.1L419.9 223.7L422.3 221.1L428.8 222.9z"/>
<path fill="#af0000" d="M247.6 178.4L241.0 177.5L243.4 178.6L250.0 179.6z"/>
<path fill="#0000ef" d="M387.0 232.2L380.4 236.8L382.8 235.1L389.4 229.9z"/>
<path fill="#cf0000" d="M263.7 193.6L257.2 191.4L259.6 198.0L266.1 200.1z"/>
<path fill="#cf0000" d="M219.5 191.6L212.9 197.7L215.3 201.5L221.9 195.5z"/>
<path fill="#ff7000" d="M376.8 251.6L370.2 260.7L372.6 263.6L379.2 254.4z"/>
<path fill="#ef0000" d="M221.9 195.5L215.3 201.5L217.7 206.5L224.3 200.7z"/>
<path fill="#ef0000" d="M233.3 202.7L226.7 207.1L229.1 214.7L235.6 210.6z"/>
<path fill="#ef0000" d="M259.6 198.0L253.0 197.2L255.4 205.3L262.0 205.9z"/>
<path fill="#af0000" d="M259.0 184.5L252.4 182.1L254.8 186.0L261.4 188.4z"/>
<path fill="#ff5000" d="M455.8 237.4L449.2 231.5L451.6 234.3L458.2 240.2z"/>
<path fill="#cf0000" d="M261.4 188.4L254.8 186.0L257.2 191.4L263.7 193.6z"/>
<path fill="#ff5000" d="M378.6 241.0L372.0 248.5L374.4 249.6L381.0 241.6z"/>
<path fill="#af0000" d="M227.9 179.9L221.3 183.2L223.7 184.3L230.2 180.9z"/>
<path fill="#0000ef" d="M444.4 229.2L437.8 224.9L440.2 225.2L446.8 229.9z"/>
<path fill="#af0000" d="M241.0 177.5L234.4 178.0L236.8 179.0L243.4 178.6z"/>
<path fill="#ff5000" d="M382.8 235.1L376.2 241.2L378.6 241.0L385.2 234.3z"/>
<path fill="#af0000" d="M223.7 184.3L217.1 189.0L219.5 191.6L226.1 186.8z"/>
<path fill="#0000ef" d="M435.4 225.7L428.8 222.9L431.2 221.7L437.8 224.9z"/>
<path fill="#ef0000" d="M239.8 199.6L233.3 202.7L235.6 210.6L242.2 207.7z"/>
<path fill="#af0000" d="M234.4 178.0L227.9 179.9L230.2 180.9L236.8 179.0z"/>
<path fill="#cf0000" d="M253.0 197.2L246.4 197.8L248.8 205.9L255.4 205.3z"/>
<path fill="#0000ef" d="M419.9 223.7L413.3 223.3L415.7 220.5L422.3 221.1z"/>
<path fill="#0000ef" d="M393.6 228.4L387.0 232.2L389.4 229.9L395.9 225.8z"/>
<path fill="#cf0000" d="M230.9 196.1L224.3 200.7L226.7 207.1L233.3 202.7z"/>
<path fill="#af0000" d="M250.0 179.6L243.4 178.6L245.8 181.1L252.4 182.1z"/>
<path fill="#cf0000" d="M246.4 197.8L239.8 199.6L242.2 207.7L248.8 205.9z"/>
<path fill="#cf0000" d="M257.2 191.4L250.6 190.5L253.0 197.2L259.6 198.0z"/>
<path fill="#af0000" d="M226.1 186.8L219.5 191.6L221.9 195.5L228.5 190.8z"/>
<path fill="#cf0000" d="M228.5 190.8L221.9 195.5L224.3 200.7L230.9 196.1z"/>
<path fill="#0000ef" d="M413.3 223.3L406.7 224.0L409.1 221.1L415.7 220.5z"/>
<path fill="#0000ef" d="M400.1 225.7L393.6 228.4L395.9 225.8L402.5 222.9z"/>
<path fill="#af0000" d="M252.4 182.1L245.8 181.1L248.2 185.1L254.8 186.0z"/>
<path fill="#af0000" d="M254.8 186.0L248.2 185.1L250.6 190.5L257.2 191.4z"/>
<path fill="#af0000" d="M230.2 180.9L223.7 184.3L226.1 186.8L232.6 183.4z"/>
<path fill="#ff5000" d="M381.0 241.6L374.4 249.6L376.8 251.6L383.4 243.3z"/>
<path fill="#8f0000" d="M243.4 178.6L236.8 179.0L239.2 181.5L245.8 181.1z"/>
<path fill="#0000ef" d="M406.7 224.0L400.1 225.7L402.5 222.9L409.1 221.1z"/>
<path fill="#cf0000" d="M237.4 192.8L230.9 196.1L233.3 202.7L239.8 199.6z"/>
<path fill="#af0000" d="M250.6 190.5L244.0 190.9L246.4 197.8L253.0 197.2z"/>
<path fill="#8f0000" d="M236.8 179.0L230.2 180.9L232.6 183.4L239.2 181.5z"/>
<path fill="#0000ef" d="M446.8 229.9L440.2 225.2L442.6 226.7L449.2 231.5z"/>
<path fill="#af0000" d="M244.0 190.9L237.4 192.8L239.8 199.6L246.4 197.8z"/>
<path fill="#af0000" d="M232.6 183.4L226.1 186.8L228.5 190.8L235.0 187.4z"/>
<path fill="#af0000" d="M235.0 187.4L228.5 190.8L230.9 196.1L237.4 192.8z"/>
<path fill="#ff1000" d="M389.4 229.9L382.8 235.1L385.2 234.3L391.8 228.8z"/>
<path fill="#8f0000" d="M245.8 181.1L239.2 181.5L241.6 185.5L248.2 185.1z"/>
<path fill="#af0000" d="M248.2 185.1L241.6 185.5L244.0 190.9L250.6 190.5z"/>
<path fill="#0000ef" d="M428.8 222.9L422.3 221.1L424.7 219.7L431.2 221.7z"/>
<path fill="#ff3000" d="M385.2 234.3L378.6 241.0L381.0 241.6L387.6 234.7z"/>
<path fill="#8f0000" d="M239.2 181.5L232.6 183.4L235.0 187.4L241.6 185.5z"/>
<path fill="#af0000" d="M241.6 185.5L235.0 187.4L237.4 192.8L244.0 190.9z"/>
<path fill="#ff5000" d="M383.4 243.3L376.8 251.6L379.2 254.4L385.8 246.0z"/>
<path fill="#0000ef" d="M437.8 224.9L431.2 221.7L433.6 221.7L440.2 225.2z"/>
<path fill="#ff1000" d="M449.2 231.5L442.6 226.7L445.0 229.3L451.6 234.3z"/>
<path fill="#ef0000" d="M395.9 225.8L389.4 229.9L391.8 228.8L398.3 224.4z"/>
<path fill="#0000ef" d="M422.3 221.1L415.7 220.5L418.1 218.9L424.7 219.7z"/>
<path fill="#ff1000" d="M387.6 234.7L381.0 241.6L383.4 243.3L390.0 236.1z"/>
<path fill="#0000ef" d="M402.5 222.9L395.9 225.8L398.3 224.4L404.9 221.3z"/>
<path fill="#0000ef" d="M415.7 220.5L409.1 221.1L411.5 219.4L418.1 218.9z"/>
<path fill="#ef0000" d="M391.8 228.8L385.2 234.3L387.6 234.7L394.2 228.8z"/>
<path fill="#ef0000" d="M440.2 225.2L433.6 221.7L436.0 223.0L442.6 226.7z"/>
<path fill="#0000ef" d="M409.1 221.1L402.5 222.9L404.9 221.3L411.5 219.4z"/>
<path fill="#0000ef" d="M431.2 221.7L424.7 219.7L427.1 219.5L433.6 221.7z"/>
<path fill="#ff1000" d="M390.0 236.1L383.4 243.3L385.8 246.0L392.4 238.7z"/>
<path fill="#cf0000" d="M442.6 226.7L436.0 223.0L438.4 225.6L445.0 229.3z"/>
<path fill="#cf0000" d="M398.3 224.4L391.8 228.8L394.2 228.8L400.7 224.2z"/>
<path fill="#0000ef" d="M424.7 219.7L418.1 218.9L420.5 218.6L427.1 219.5z"/>
<path fill="#ef0000" d="M394.2 228.8L387.6 234.7L390.0 236.1L396.6 230.1z"/>
<path fill="#cf0000" d="M433.6 221.7L427.1 219.5L429.4 220.6L436.0 223.0z"/>
<path fill="#cf0000" d="M404.9 221.3L398.3 224.4L400.7 224.2L407.3 220.9z"/>
<path fill="#0000ef" d="M418.1 218.9L411.5 219.4L413.9 219.0L420.5 218.6z"/>
<path fill="#af0000" d="M411.5 219.4L404.9 221.3L407.3 220.9L413.9 219.0z"/>
<path fill="#cf0000" d="M396.6 230.1L390.0 236.1L392.4 238.7L399.0 232.6z"/>
<path fill="#cf0000" d="M400.7 224.2L394.2 228.8L396.6 230.1L403.1 225.3z"/>
<path fill="#af0000" d="M436.0 223.0L429.4 220.6L431.8 223.1L438.4 225.6z"/>
<path fill="#af0000" d="M427.1 219.5L420.5 218.6L422.9 219.6L429.4 220.6z"/>
<path fill="#af0000" d="M407.3 220.9L400.7 224.2L403.1 225.3L409.7 222.0z"/>
<path fill="#af0000" d="M420.5 218.6L413.9 219.0L416.3 220.1L422.9 219.6z"/>
<path fill="#af0000" d="M403.1 225.3L396.6 230.1L399.0 232.6L405.5 227.9z"/>
<path fill="#af0000" d="M413.9 219.0L407.3 220.9L409.7 222.0L416.3 220.1z"/>
<path fill="#af0000" d="M429.4 220.6L422.9 219.6L425.3 222.1L431.8 223.1z"/>
<path fill="#af0000" d="M409.7 222.0L403.1 225.3L405.5 227.9L412.1 224.5z"/>
<path fill="#8f0000" d="M422.9 219.6L416.3 220.1L418.7 222.6L425.3 222.1z"/>
<path fill="#8f0000" d="M416.3 220.1L409.7 222.0L412.1 224.5L418.7 222.6z"/></g><g stroke="#000" stroke-width="1" fill="none" shape-rendering="crispEdges"><line x1="76.5" y1="117.5" x2="198.5" y2="282.0" /><line x1="198.5" y1="282.0" x2="533.5" y2="222.0" /><line x1="198.5" y1="282.0" x2="198.5" y2="402.0" /><line x1="76.5" y1="237.5" x2="70.1" y2="238.7" /><line x1="84.1" y1="247.8" x2="80.9" y2="248.4" /><line x1="533.5" y1="342.0" x2="536.9" y2="346.6" /><line x1="512.6" y1="345.8" x2="514.3" y2="348.1" /><line x1="91.8" y1="258.1" x2="85.3" y2="259.2" /><line x1="99.4" y1="268.3" x2="96.2" y2="268.9" /><line x1="491.6" y1="349.5" x2="495.0" y2="354.1" /><line x1="470.7" y1="353.2" x2="472.4" y2="355.6" /><line x1="107.0" y1="278.6" x2="100.6" y2="279.8" /><line x1="114.6" y1="288.9" x2="111.4" y2="289.5" /><line x1="449.8" y1="357.0" x2="453.1" y2="361.6" /><line x1="428.8" y1="360.8" x2="430.5" y2="363.1" /><line x1="122.2" y1="299.2" x2="115.8" y2="300.3" /><line x1="129.9" y1="309.5" x2="126.7" y2="310.0" /><line x1="407.9" y1="364.5" x2="411.3" y2="369.1" /><line x1="386.9" y1="368.2" x2="388.6" y2="370.6" /><line x1="137.5" y1="319.8" x2="131.1" y2="320.9" /><line x1="145.1" y1="330.0" x2="141.9" y2="330.6" /><line x1="366.0" y1="372.0" x2="369.4" y2="376.6" /><line x1="345.1" y1="375.8" x2="346.8" y2="378.1" /><line x1="152.8" y1="340.3" x2="146.3" y2="341.5" /><line x1="160.4" y1="350.6" x2="157.2" y2="351.2" /><line x1="324.1" y1="379.5" x2="327.5" y2="384.1" /><line x1="303.2" y1="383.2" x2="304.9" y2="385.6" /><line x1="168.0" y1="360.9" x2="161.6" y2="362.0" /><line x1="175.6" y1="371.2" x2="172.4" y2="371.7" /><line x1="282.2" y1="387.0" x2="285.6" y2="391.6" /><line x1="261.3" y1="390.8" x2="263.0" y2="393.1" /><line x1="183.2" y1="381.4" x2="176.8" y2="382.6" /><line x1="190.9" y1="391.7" x2="187.7" y2="392.3" /><line x1="240.4" y1="394.5" x2="243.8" y2="399.1" /><line x1="219.4" y1="398.2" x2="221.1" y2="400.6" /><line x1="198.5" y1="402.0" x2="192.1" y2="403.1" /><line x1="198.5" y1="402.0" x2="201.9" y2="406.6" /><line x1="533.5" y1="342.0" x2="539.5" y2="341.5" /><line x1="533.5" y1="312.0" x2="539.5" y2="311.5" /><line x1="533.5" y1="282.0" x2="539.5" y2="281.5" /><line x1="533.5" y1="252.0" x2="539.5" y2="251.5" /><line x1="533.5" y1="222.0" x2="539.5" y2="221.5" /></g><g font-family="Liberation Sans, sans-serif" font-size="10px" fill="#222"><text x="66.8" y="243.6" text-anchor="end">-4</text><text x="542.5" y="358.1" text-anchor="middle">-4</text><text x="82.0" y="264.2" text-anchor="end">-3</text><text x="500.6" y="365.6" text-anchor="middle">-3</text><text x="97.3" y="284.7" text-anchor="end">-2</text><text x="458.8" y="373.1" text-anchor="middle">-2</text><text x="112.5" y="305.3" text-anchor="end">-1</text><text x="416.9" y="380.6" text-anchor="middle">-1</text><text x="127.8" y="325.9" text-anchor="end">0</text><text x="375.0" y="388.1" text-anchor="middle">0</text><text x="143.1" y="346.4" text-anchor="end">1</text><text x="333.1" y="395.6" text-anchor="middle">1</text><text x="158.3" y="367.0" text-anchor="end">2</text><text x="291.2" y="403.1" text-anchor="middle">2</text><text x="173.6" y="387.5" text-anchor="end">3</text><text x="249.4" y="410.6" text-anchor="middle">3</text><text x="188.8" y="408.1" text-anchor="end">4</text><text x="207.5" y="418.1" text-anchor="middle">4</text><text x="543.0" y="344.6" text-anchor="start">-1</text><text x="542.0" y="313.6" text-anchor="start">-0.5</text><text x="543.0" y="284.6" text-anchor="start">0</text><text x="543.0" y="253.6" text-anchor="start">0.5</text><text x="543.0" y="224.6" text-anchor="start">1</text><text x="108.6" y="327.6" text-anchor="middle">Y</text><text x="378.9" y="400.9" text-anchor="middle">X</text><text x="571.1" y="280.1" text-anchor="middle">Z</text></g></svg>
<div class="dlg">
<div class="dtitle"><div class="t">Set label text</div>
<div class="wbtn" style="left:244px"><svg class="abs" style="left:3px;top:2px" width="8" height="7" viewBox="0 0 8 7"><path d="M0.5 0 L7.5 7 M7.5 0 L0.5 7" stroke="#000" stroke-width="1.6"/></svg></div>
</div>
<div class="abs" style="left:11px;top:31px;font-size:11px;line-height:14px;white-space:nowrap;letter-spacing:0.25px">Enter the text</div>
<div class="field"><div class="sel">X</div></div>
<div class="btn def" style="left:55px"><span style="position:relative;left:-1px">OK</span></div>
<div class="btn" style="left:136px"><span style="position:relative;left:-1px;letter-spacing:-0.25px">Cancelar</span></div>
</div>
</body></html>
